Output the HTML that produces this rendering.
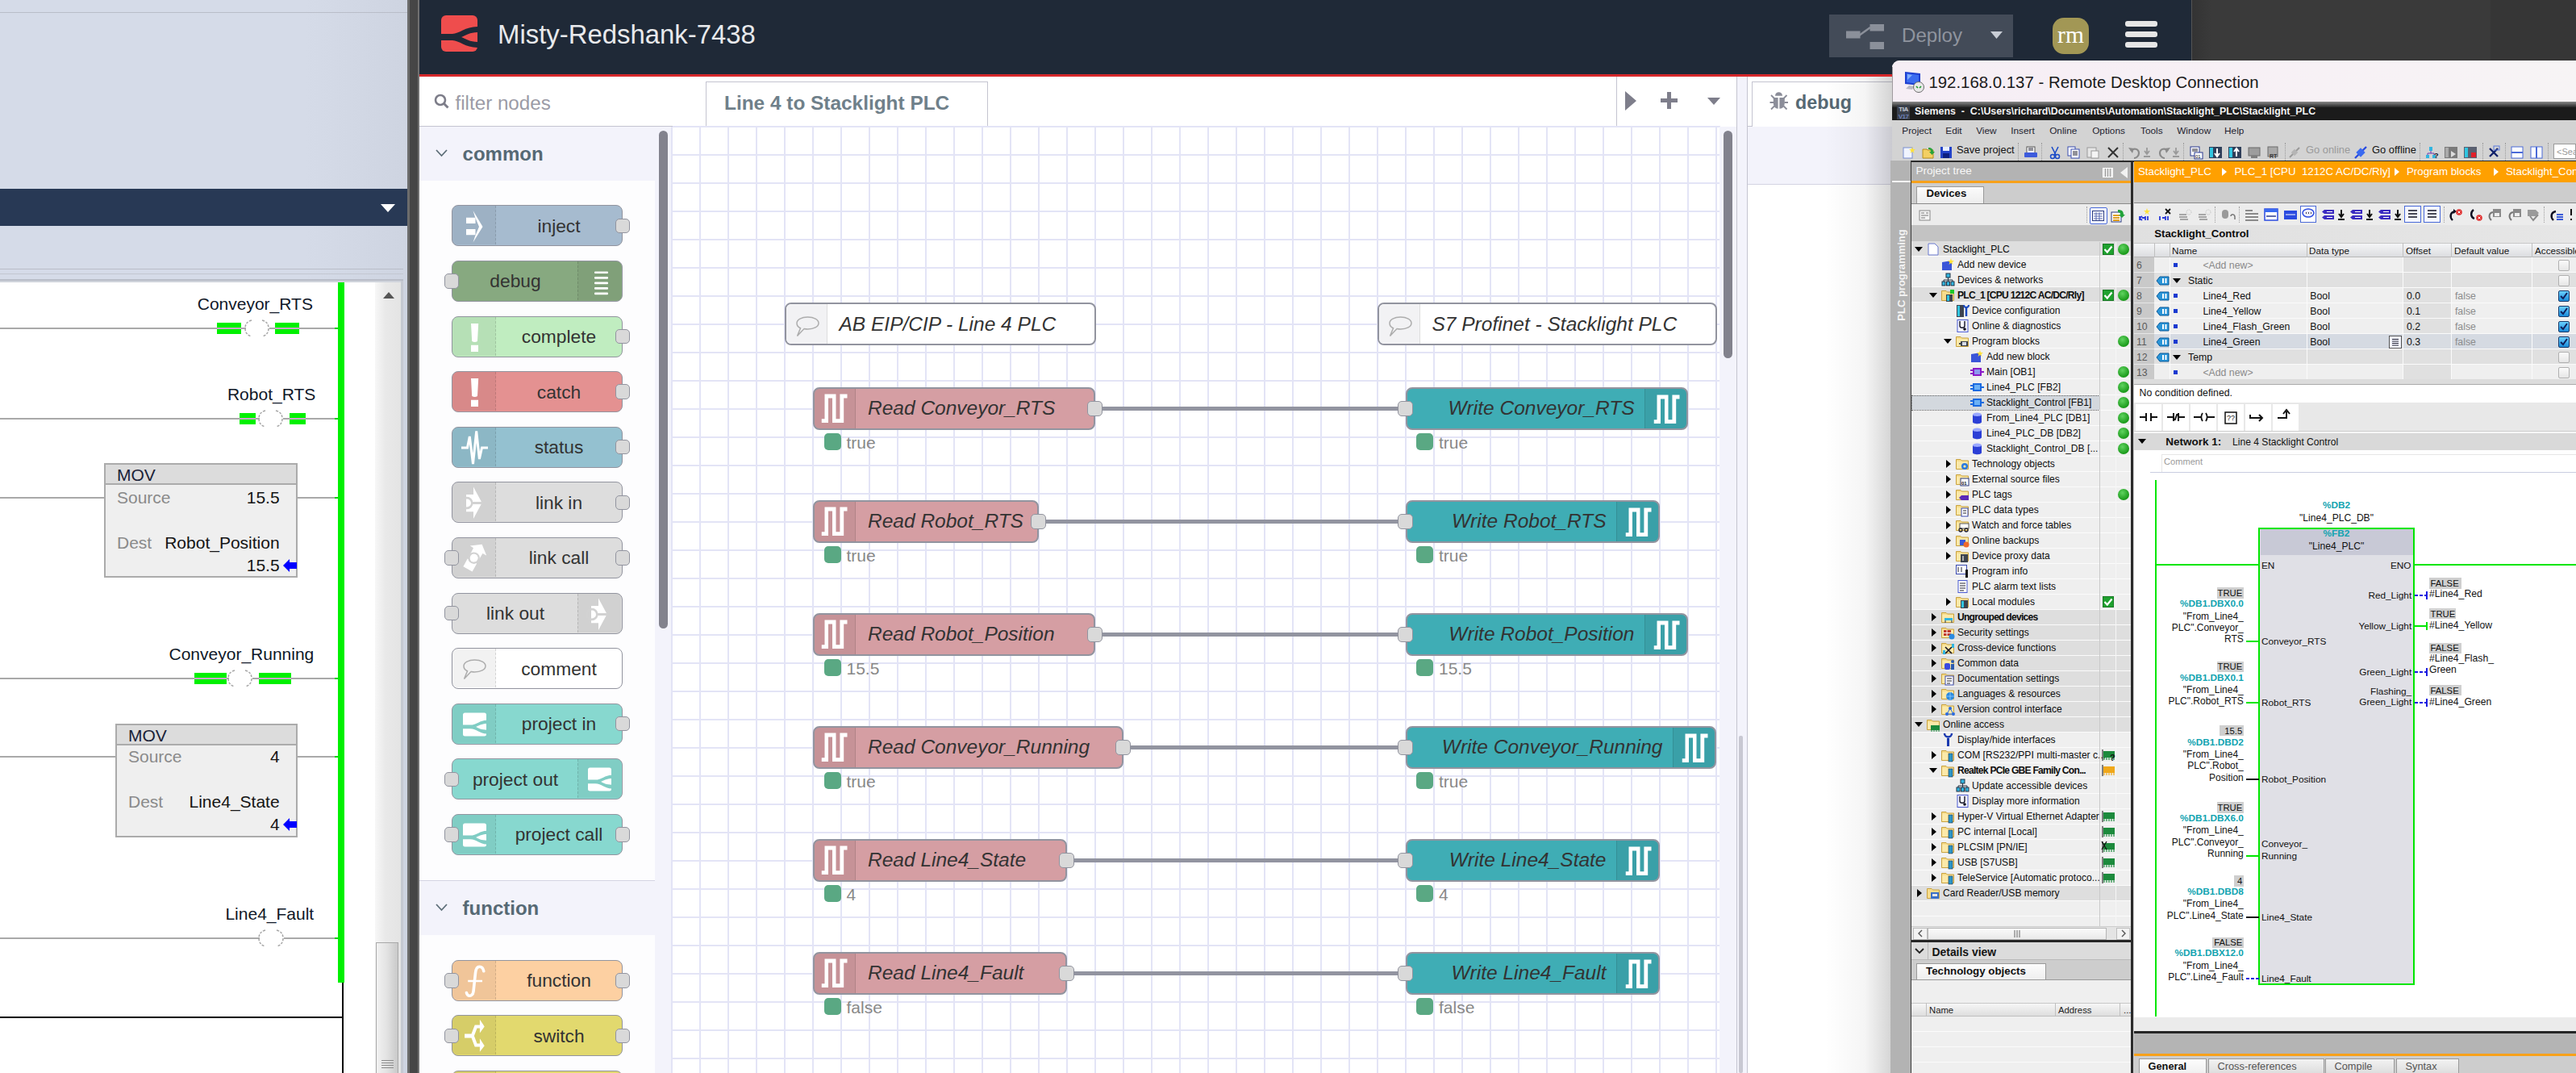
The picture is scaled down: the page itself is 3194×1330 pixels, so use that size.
<!DOCTYPE html>
<html><head><meta charset="utf-8"><title>screen</title>
<style>
*{box-sizing:border-box;margin:0;padding:0}
html,body{width:3194px;height:1330px;overflow:hidden;background:#3a3a3a;font-family:"Liberation Sans",sans-serif;position:relative}
.a{position:absolute}
.t{position:absolute;white-space:pre}
svg.a{overflow:visible}
</style></head><body>
<div class="a" style="left:0px;top:0px;width:505px;height:1330px;background:linear-gradient(90deg,#d5dbe8 0%,#d5dbe8 75%,#ced4e1 100%)"></div>
<div class="a" style="left:0px;top:15px;width:505px;height:1px;background:#b9bdc8"></div>
<div class="a" style="left:0px;top:234px;width:505px;height:46px;background:#283955"></div>
<svg class="a" style="left:471px;top:252px;" width="20" height="12" viewBox="0 0 20 12"><path d="M1 1 L19 1 L10 11 Z" fill="#fff"/></svg>
<div class="a" style="left:0px;top:333px;width:500px;height:1px;background:#b9bdc8"></div>
<div class="a" style="left:0px;top:339px;width:500px;height:1px;background:#c3c7d1"></div>
<div class="a" style="left:0px;top:346px;width:500px;height:2px;background:#b9bdc8"></div>
<div class="a" style="left:0px;top:348px;width:500px;height:2px;background:#d0d4dc"></div>
<div class="a" style="left:0px;top:350px;width:465px;height:980px;background:#fff"></div>
<div class="a" style="left:465px;top:350px;width:32px;height:980px;background:linear-gradient(90deg,#f7f7f7 0%,#e9e9e9 40%,#e4e4e4 100%)"></div>
<div class="a" style="left:497px;top:348px;width:3px;height:982px;background:#c5c9d2"></div>
<div class="a" style="left:505px;top:0px;width:15px;height:1330px;background:#464646"></div>
<div class="a" style="left:505px;top:0px;width:2.5px;height:1330px;background:#6c6c6c"></div>
<div class="a" style="left:517.5px;top:0px;width:2.5px;height:1330px;background:#707070"></div>
<svg class="a" style="left:474px;top:361px;" width="16" height="10" viewBox="0 0 16 10"><path d="M1 9 L15 9 L8 1 Z" fill="#555"/></svg>
<div class="a" style="left:466px;top:1168px;width:28px;height:162px;background:linear-gradient(90deg,#f2f2f2,#e2e2e2 50%,#c9c9c9);border:1px solid #a8a8a8;border-bottom:none"></div>
<div class="a" style="left:473px;top:1314px;width:15px;height:1px;background:#8a8a8a"></div>
<div class="a" style="left:473px;top:1317px;width:15px;height:1px;background:#8a8a8a"></div>
<div class="a" style="left:473px;top:1320px;width:15px;height:1px;background:#8a8a8a"></div>
<div class="a" style="left:473px;top:1323px;width:15px;height:1px;background:#8a8a8a"></div>
<div class="a" style="left:419px;top:350px;width:8px;height:868px;background:#00f000"></div>
<div class="a" style="left:424px;top:1218px;width:2px;height:112px;background:#000"></div>
<div class="a" style="left:0px;top:1260px;width:425px;height:2px;background:#000"></div>
<div class="a" style="left:0px;top:406px;width:419px;height:2px;background:#a9a9a9"></div>
<div class="a" style="left:415px;top:406px;width:4px;height:2px;background:#00d000"></div>
<div class="a" style="left:304.8px;top:405px;width:29.0px;height:4px;background:#fff"></div>
<div class="a" style="left:269px;top:400px;width:30px;height:14px;background:#00f000"></div>
<div class="a" style="left:269px;top:406px;width:30px;height:2px;background:#c8a8c8"></div>
<div class="a" style="left:341px;top:400px;width:30px;height:14px;background:#00f000"></div>
<div class="a" style="left:341px;top:406px;width:30px;height:2px;background:#c8a8c8"></div>
<svg class="a" style="left:301.8px;top:395px;" width="14" height="24" viewBox="0 0 14 24"><path d="M10 2 Q2 4 2 12 Q2 20 10 22" fill="none" stroke="#a6a6a6" stroke-width="1.5" stroke-dasharray="3 1.6"/></svg>
<svg class="a" style="left:322.8px;top:395px;" width="14" height="24" viewBox="0 0 14 24"><path d="M2 2 Q10 4 10 12 Q10 20 2 22" fill="none" stroke="#a6a6a6" stroke-width="1.5" stroke-dasharray="3 1.6"/></svg>
<div class="t" style="left:-683.7px;width:2000px;text-align:center;top:363.22px;font-size:21px;line-height:27px;font-family:'Liberation Sans',sans-serif;color:#101828">Conveyor_RTS</div>
<div class="a" style="left:0px;top:518px;width:419px;height:2px;background:#a9a9a9"></div>
<div class="a" style="left:415px;top:518px;width:4px;height:2px;background:#00d000"></div>
<div class="a" style="left:321.5px;top:517px;width:29.80000000000001px;height:4px;background:#fff"></div>
<div class="a" style="left:297px;top:512px;width:20px;height:14px;background:#00f000"></div>
<div class="a" style="left:297px;top:518px;width:20px;height:2px;background:#c8a8c8"></div>
<div class="a" style="left:359px;top:512px;width:20px;height:14px;background:#00f000"></div>
<div class="a" style="left:359px;top:518px;width:20px;height:2px;background:#c8a8c8"></div>
<svg class="a" style="left:318.5px;top:507px;" width="14" height="24" viewBox="0 0 14 24"><path d="M10 2 Q2 4 2 12 Q2 20 10 22" fill="none" stroke="#a6a6a6" stroke-width="1.5" stroke-dasharray="3 1.6"/></svg>
<svg class="a" style="left:340.3px;top:507px;" width="14" height="24" viewBox="0 0 14 24"><path d="M2 2 Q10 4 10 12 Q10 20 2 22" fill="none" stroke="#a6a6a6" stroke-width="1.5" stroke-dasharray="3 1.6"/></svg>
<div class="t" style="left:-663.4px;width:2000px;text-align:center;top:475.22px;font-size:21px;line-height:27px;font-family:'Liberation Sans',sans-serif;color:#101828">Robot_RTS</div>
<div class="a" style="left:0px;top:840px;width:419px;height:2px;background:#a9a9a9"></div>
<div class="a" style="left:415px;top:840px;width:4px;height:2px;background:#00d000"></div>
<div class="a" style="left:284px;top:839px;width:29.399999999999977px;height:4px;background:#fff"></div>
<div class="a" style="left:241px;top:834px;width:40px;height:14px;background:#00f000"></div>
<div class="a" style="left:241px;top:840px;width:40px;height:2px;background:#c8a8c8"></div>
<div class="a" style="left:321px;top:834px;width:40px;height:14px;background:#00f000"></div>
<div class="a" style="left:321px;top:840px;width:40px;height:2px;background:#c8a8c8"></div>
<svg class="a" style="left:281px;top:829px;" width="14" height="24" viewBox="0 0 14 24"><path d="M10 2 Q2 4 2 12 Q2 20 10 22" fill="none" stroke="#a6a6a6" stroke-width="1.5" stroke-dasharray="3 1.6"/></svg>
<svg class="a" style="left:302.4px;top:829px;" width="14" height="24" viewBox="0 0 14 24"><path d="M2 2 Q10 4 10 12 Q10 20 2 22" fill="none" stroke="#a6a6a6" stroke-width="1.5" stroke-dasharray="3 1.6"/></svg>
<div class="t" style="left:-700.6px;width:2000px;text-align:center;top:797.22px;font-size:21px;line-height:27px;font-family:'Liberation Sans',sans-serif;color:#101828">Conveyor_Running</div>
<div class="a" style="left:0px;top:1162px;width:419px;height:2px;background:#a9a9a9"></div>
<div class="a" style="left:415px;top:1162px;width:4px;height:2px;background:#00d000"></div>
<div class="a" style="left:322px;top:1161px;width:29.69999999999999px;height:4px;background:#fff"></div>
<svg class="a" style="left:319px;top:1151px;" width="14" height="24" viewBox="0 0 14 24"><path d="M10 2 Q2 4 2 12 Q2 20 10 22" fill="none" stroke="#a6a6a6" stroke-width="1.5" stroke-dasharray="3 1.6"/></svg>
<svg class="a" style="left:340.7px;top:1151px;" width="14" height="24" viewBox="0 0 14 24"><path d="M2 2 Q10 4 10 12 Q10 20 2 22" fill="none" stroke="#a6a6a6" stroke-width="1.5" stroke-dasharray="3 1.6"/></svg>
<div class="t" style="left:-665.7px;width:2000px;text-align:center;top:1119.22px;font-size:21px;line-height:27px;font-family:'Liberation Sans',sans-serif;color:#101828">Line4_Fault</div>
<div class="a" style="left:0px;top:616px;width:419px;height:2px;background:#a9a9a9"></div>
<div class="a" style="left:415px;top:616px;width:4px;height:2px;background:#00d000"></div>
<div class="a" style="left:129px;top:574px;width:240px;height:142px;background:#efefef;border:2px solid #ababab"></div>
<div class="a" style="left:131px;top:576px;width:236px;height:25px;background:#dcdcdc;border-bottom:2px solid #ababab"></div>
<div class="t" style="left:145px;top:574.72px;font-size:21px;line-height:27px;font-family:'Liberation Sans',sans-serif;color:#1a2238">MOV</div>
<div class="t" style="left:145px;top:602.92px;font-size:21px;line-height:27px;font-family:'Liberation Sans',sans-serif;color:#8a8a8a">Source</div>
<div class="t" style="left:-1653.4px;width:2000px;text-align:right;top:602.92px;font-size:21px;line-height:27px;font-family:'Liberation Sans',sans-serif;color:#141414">15.5</div>
<div class="t" style="left:145px;top:658.72px;font-size:21px;line-height:27px;font-family:'Liberation Sans',sans-serif;color:#8a8a8a">Dest</div>
<div class="t" style="left:-1653.4px;width:2000px;text-align:right;top:658.72px;font-size:21px;line-height:27px;font-family:'Liberation Sans',sans-serif;color:#141414">Robot_Position</div>
<div class="t" style="left:-1653.4px;width:2000px;text-align:right;top:686.82px;font-size:21px;line-height:27px;font-family:'Liberation Sans',sans-serif;color:#141414">15.5</div>
<svg class="a" style="left:351px;top:693px;" width="17" height="16" viewBox="0 0 17 16"><path d="M0 8 L8 0 L8 4 L17 4 L17 12 L8 12 L8 16 Z" fill="#0000ff"/></svg>
<div class="a" style="left:0px;top:937px;width:419px;height:2px;background:#a9a9a9"></div>
<div class="a" style="left:415px;top:937px;width:4px;height:2px;background:#00d000"></div>
<div class="a" style="left:143px;top:897px;width:226px;height:141px;background:#efefef;border:2px solid #ababab"></div>
<div class="a" style="left:145px;top:899px;width:222px;height:25px;background:#dcdcdc;border-bottom:2px solid #ababab"></div>
<div class="t" style="left:159px;top:897.72px;font-size:21px;line-height:27px;font-family:'Liberation Sans',sans-serif;color:#1a2238">MOV</div>
<div class="t" style="left:159px;top:923.92px;font-size:21px;line-height:27px;font-family:'Liberation Sans',sans-serif;color:#8a8a8a">Source</div>
<div class="t" style="left:-1653.4px;width:2000px;text-align:right;top:923.92px;font-size:21px;line-height:27px;font-family:'Liberation Sans',sans-serif;color:#141414">4</div>
<div class="t" style="left:159px;top:979.72px;font-size:21px;line-height:27px;font-family:'Liberation Sans',sans-serif;color:#8a8a8a">Dest</div>
<div class="t" style="left:-1653.4px;width:2000px;text-align:right;top:979.72px;font-size:21px;line-height:27px;font-family:'Liberation Sans',sans-serif;color:#141414">Line4_State</div>
<div class="t" style="left:-1653.4px;width:2000px;text-align:right;top:1007.82px;font-size:21px;line-height:27px;font-family:'Liberation Sans',sans-serif;color:#141414">4</div>
<svg class="a" style="left:351px;top:1014px;" width="17" height="16" viewBox="0 0 17 16"><path d="M0 8 L8 0 L8 4 L17 4 L17 12 L8 12 L8 16 Z" fill="#0000ff"/></svg>
<div class="a" style="left:520px;top:0px;width:2197px;height:92px;background:#1f2937"></div>
<div class="a" style="left:520px;top:92px;width:1826px;height:3px;background:#d6282b"></div>
<svg class="a" style="left:547px;top:19px;" width="45" height="45" viewBox="0 0 45 45"><rect width="45" height="45" rx="6" fill="#ef4d4d"/><path d="M0,23 L14,23 C22,23 30,14 45,14 L45,21 C36,21 30,25 25,27 C30,29 36,33 45,33 L45,40 C30,40 22,31 14,31 L0,31 Z" fill="#1f2937"/></svg>
<div class="t" style="left:617px;top:21.10px;font-size:32.9px;line-height:43px;font-family:'Liberation Sans',sans-serif;color:#e8e9ec">Misty-Redshank-7438</div>
<div class="a" style="left:2268px;top:18px;width:228px;height:53px;background:#434b58"></div>
<svg class="a" style="left:2289px;top:30px;" width="48" height="31" viewBox="0 0 48 31"><g fill="#8b909a"><rect x="0" y="8.5" width="17.5" height="9"/><rect x="29.5" y="0" width="17.5" height="8.5"/><rect x="29.5" y="22" width="17.5" height="9"/><path d="M16 14 L30 4" stroke="#8b909a" stroke-width="2.5"/></g></svg>
<div class="t" style="left:2358px;top:28.15px;font-size:24.1px;line-height:31px;font-family:'Liberation Sans',sans-serif;color:#8f949e">Deploy</div>
<svg class="a" style="left:2468px;top:39px;" width="15" height="9" viewBox="0 0 15 9"><path d="M0 0 H15 L7.5 9 Z" fill="#c9cdd5"/></svg>
<div class="a" style="left:2545px;top:22px;width:45px;height:45px;background:#a29755;border-radius:14px"></div>
<div class="t" style="left:1567.5px;width:2000px;text-align:center;top:24.04px;font-size:29.5px;line-height:38px;font-family:'Liberation Serif',serif;color:#fff">rm</div>
<div class="a" style="left:2634.5px;top:26px;width:40px;height:7px;background:#e6e6e6;border-radius:3px"></div>
<div class="a" style="left:2634.5px;top:39px;width:40px;height:7px;background:#e6e6e6;border-radius:3px"></div>
<div class="a" style="left:2634.5px;top:52px;width:40px;height:7px;background:#e6e6e6;border-radius:3px"></div>
<div class="a" style="left:2717px;top:0px;width:477px;height:75px;background:linear-gradient(90deg,#333 0px,#3a3a3a 25px,#3a3a3a 370px,#363636 372px)"></div>
<div class="a" style="left:2717px;top:0px;width:1px;height:75px;background:#555"></div>
<div class="a" style="left:520px;top:95px;width:1826px;height:62px;background:#fff"></div>
<div class="a" style="left:520px;top:156px;width:1613px;height:1px;background:#c4c4d0"></div>
<svg class="a" style="left:538px;top:116px;" width="20" height="20" viewBox="0 0 20 20"><circle cx="8" cy="8" r="6" fill="none" stroke="#7d7d89" stroke-width="2.6"/><path d="M12.3 12.3 L17.5 17.5" stroke="#7d7d89" stroke-width="3"/></svg>
<div class="t" style="left:564.5px;top:111.51px;font-size:24.2px;line-height:31px;font-family:'Liberation Sans',sans-serif;color:#9b9ba6">filter nodes</div>
<div class="a" style="left:875px;top:101px;width:350px;height:56px;background:#fff;border:1px solid #c4c4d0;border-bottom:none"></div>
<div class="t" style="left:898px;top:111.55px;font-size:24.4px;line-height:32px;font-family:'Liberation Sans',sans-serif;color:#6f808a;font-weight:bold">Line 4 to Stacklight PLC</div>
<div class="a" style="left:2004px;top:95px;width:1px;height:62px;background:#c4c4d0"></div>
<svg class="a" style="left:2015px;top:113px;" width="15" height="24" viewBox="0 0 15 24"><path d="M0 0 L14 12 L0 24 Z" fill="#7e7e8b"/></svg>
<svg class="a" style="left:2059px;top:114px;" width="21" height="21" viewBox="0 0 21 21"><path d="M8 0 H13 V8 H21 V13 H13 V21 H8 V13 H0 V8 H8 Z" fill="#7e7e8b"/></svg>
<svg class="a" style="left:2117px;top:121px;" width="16" height="9" viewBox="0 0 16 9"><path d="M0 0 H16 L8 9 Z" fill="#7e7e8b"/></svg>
<div class="a" style="left:520px;top:157px;width:292px;height:67px;background:#f3f3fb"></div>
<div class="a" style="left:520px;top:224px;width:292px;height:867px;background:#fdfdfe"></div>
<div class="a" style="left:520px;top:1091px;width:292px;height:1px;background:#d4d4e2"></div>
<div class="a" style="left:520px;top:1092px;width:292px;height:67px;background:#f3f3fb"></div>
<div class="a" style="left:520px;top:1159px;width:292px;height:171px;background:#fdfdfe"></div>
<div class="a" style="left:812px;top:157px;width:21px;height:1173px;background:#f3f3fb"></div>
<div class="a" style="left:817px;top:162px;width:11px;height:617px;background:#82828d;border-radius:6px"></div>
<div class="a" style="left:833px;top:157px;width:1px;height:1173px;background:#c4c4d0"></div>
<svg class="a" style="left:540px;top:185px;" width="15" height="10" viewBox="0 0 15 10"><path d="M1 1 L7.5 8 L14 1" fill="none" stroke="#5d6e78" stroke-width="1.8"/></svg>
<div class="t" style="left:573.6px;top:174.58px;font-size:24px;line-height:31px;font-family:'Liberation Sans',sans-serif;color:#566974;font-weight:bold">common</div>
<svg class="a" style="left:540px;top:1120px;" width="15" height="10" viewBox="0 0 15 10"><path d="M1 1 L7.5 8 L14 1" fill="none" stroke="#5d6e78" stroke-width="1.8"/></svg>
<div class="t" style="left:573.6px;top:1109.78px;font-size:24px;line-height:31px;font-family:'Liberation Sans',sans-serif;color:#566974;font-weight:bold">function</div>
<div class="a" style="left:560px;top:254.3px;width:212px;height:51px;background:#a6bbcf;border:1.5px solid #92949f;border-radius:8px;overflow:hidden"><div class="a" style="left:0;top:0;width:54px;height:48px;background:rgba(0,0,0,0.05);border-right:1px dashed rgba(0,0,0,0.12)"></div><svg class="a" style="left:0;top:-2px" width="54" height="51" viewBox="0 0 54 51"><path d="M17 16.8 H28.5 V24 H17 Z M17 31 H28.5 V38.2 H17 Z" fill="#fff"/><path d="M25.5 8 L37.5 28 L25.5 47.5 L28 40 L33 28 L28 16 Z" fill="#fff"/></svg></div>
<div class="t" style="left:-307.0px;width:2000px;text-align:center;top:264.72px;font-size:22.75px;line-height:30px;font-family:'Liberation Sans',sans-serif;color:#333">inject</div>
<div class="a" style="left:762.75px;top:270.55px;width:18.5px;height:18.5px;background:#d9d9d9;border:1.5px solid #92949f;border-radius:5px"></div>
<div class="a" style="left:560px;top:322.9px;width:212px;height:51px;background:#87a980;border:1.5px solid #92949f;border-radius:8px;overflow:hidden"><div class="a" style="left:155px;top:0;width:54px;height:48px;background:rgba(0,0,0,0.05);border-left:1px dashed rgba(0,0,0,0.12)"></div><svg class="a" style="left:155px;top:-2px" width="54" height="51" viewBox="0 0 54 51"><rect x="21" y="14.40" width="17" height="2.7" rx="1" fill="#fff"/><rect x="21" y="20.95" width="17" height="2.7" rx="1" fill="#fff"/><rect x="21" y="27.50" width="17" height="2.7" rx="1" fill="#fff"/><rect x="21" y="34.05" width="17" height="2.7" rx="1" fill="#fff"/><rect x="21" y="40.60" width="17" height="2.7" rx="1" fill="#fff"/></svg></div>
<div class="t" style="left:-361.0px;width:2000px;text-align:center;top:333.32px;font-size:22.75px;line-height:30px;font-family:'Liberation Sans',sans-serif;color:#333">debug</div>
<div class="a" style="left:550.75px;top:339.15px;width:18.5px;height:18.5px;background:#d9d9d9;border:1.5px solid #92949f;border-radius:5px"></div>
<div class="a" style="left:560px;top:391.5px;width:212px;height:51px;background:#c0edc0;border:1.5px solid #92949f;border-radius:8px;overflow:hidden"><div class="a" style="left:0;top:0;width:54px;height:48px;background:rgba(0,0,0,0.05);border-right:1px dashed rgba(0,0,0,0.12)"></div><svg class="a" style="left:0;top:-2px" width="54" height="51" viewBox="0 0 54 51"><path d="M23 10 H32.2 L31 32 Q27.6 34 24.2 32 Z M23 36.8 H32 V45 H23 Z" fill="#fff"/></svg></div>
<div class="t" style="left:-307.0px;width:2000px;text-align:center;top:401.92px;font-size:22.75px;line-height:30px;font-family:'Liberation Sans',sans-serif;color:#333">complete</div>
<div class="a" style="left:762.75px;top:407.75px;width:18.5px;height:18.5px;background:#d9d9d9;border:1.5px solid #92949f;border-radius:5px"></div>
<div class="a" style="left:560px;top:460.1px;width:212px;height:51px;background:#e49191;border:1.5px solid #92949f;border-radius:8px;overflow:hidden"><div class="a" style="left:0;top:0;width:54px;height:48px;background:rgba(0,0,0,0.05);border-right:1px dashed rgba(0,0,0,0.12)"></div><svg class="a" style="left:0;top:-2px" width="54" height="51" viewBox="0 0 54 51"><path d="M23 10 H32.2 L31 32 Q27.6 34 24.2 32 Z M23 36.8 H32 V45 H23 Z" fill="#fff"/></svg></div>
<div class="t" style="left:-307.0px;width:2000px;text-align:center;top:470.52px;font-size:22.75px;line-height:30px;font-family:'Liberation Sans',sans-serif;color:#333">catch</div>
<div class="a" style="left:762.75px;top:476.35px;width:18.5px;height:18.5px;background:#d9d9d9;border:1.5px solid #92949f;border-radius:5px"></div>
<div class="a" style="left:560px;top:528.7px;width:212px;height:51px;background:#94c1d0;border:1.5px solid #92949f;border-radius:8px;overflow:hidden"><div class="a" style="left:0;top:0;width:54px;height:48px;background:rgba(0,0,0,0.05);border-right:1px dashed rgba(0,0,0,0.12)"></div><svg class="a" style="left:0;top:-2px" width="54" height="51" viewBox="0 0 54 51"><path d="M11 27 H18.5 L21.3 13 L25.5 47 L29.7 6.5 L33.4 41 L36.5 27 H44" fill="none" stroke="#fff" stroke-width="3" stroke-linejoin="miter" stroke-miterlimit="3"/></svg></div>
<div class="t" style="left:-307.0px;width:2000px;text-align:center;top:539.12px;font-size:22.75px;line-height:30px;font-family:'Liberation Sans',sans-serif;color:#333">status</div>
<div class="a" style="left:762.75px;top:544.95px;width:18.5px;height:18.5px;background:#d9d9d9;border:1.5px solid #92949f;border-radius:5px"></div>
<div class="a" style="left:560px;top:597.3px;width:212px;height:51px;background:#dddddd;border:1.5px solid #92949f;border-radius:8px;overflow:hidden"><div class="a" style="left:0;top:0;width:54px;height:48px;background:rgba(0,0,0,0.05);border-right:1px dashed rgba(0,0,0,0.12)"></div><svg class="a" style="left:0;top:-2px" width="54" height="51" viewBox="0 0 54 51"><path d="M17 16.9 H26 V7.4 L36.6 27.2 L26 47.1 V38.2 H17 Z" fill="#fff"/><circle cx="17.9" cy="27.5" r="6.4" fill="none" stroke="#d2d2d2" stroke-width="2.6"/><path d="M23 27.5 H38" stroke="#d2d2d2" stroke-width="2.8"/></svg></div>
<div class="t" style="left:-307.0px;width:2000px;text-align:center;top:607.72px;font-size:22.75px;line-height:30px;font-family:'Liberation Sans',sans-serif;color:#333">link in</div>
<div class="a" style="left:762.75px;top:613.55px;width:18.5px;height:18.5px;background:#d9d9d9;border:1.5px solid #92949f;border-radius:5px"></div>
<div class="a" style="left:560px;top:665.9px;width:212px;height:51px;background:#dddddd;border:1.5px solid #92949f;border-radius:8px;overflow:hidden"><div class="a" style="left:0;top:0;width:54px;height:48px;background:rgba(0,0,0,0.05);border-right:1px dashed rgba(0,0,0,0.12)"></div><svg class="a" style="left:0;top:-2px" width="54" height="51" viewBox="0 0 54 51"><path d="M21.8 11.4 L36.6 9.7 L42.2 23.4 L37.4 20.9 L33 28.5 L22 22 L26 14.2 Z" fill="#fff"/><path d="M13.4 37.2 L18.7 27.4 L30.2 33.5 L24.6 43.6 Z" fill="#fff"/><circle cx="26.6" cy="26.7" r="6.1" fill="none" stroke="#d2d2d2" stroke-width="2.4"/><circle cx="26.6" cy="26.7" r="4.9" fill="#fff"/></svg></div>
<div class="t" style="left:-307.0px;width:2000px;text-align:center;top:676.32px;font-size:22.75px;line-height:30px;font-family:'Liberation Sans',sans-serif;color:#333">link call</div>
<div class="a" style="left:550.75px;top:682.15px;width:18.5px;height:18.5px;background:#d9d9d9;border:1.5px solid #92949f;border-radius:5px"></div>
<div class="a" style="left:762.75px;top:682.15px;width:18.5px;height:18.5px;background:#d9d9d9;border:1.5px solid #92949f;border-radius:5px"></div>
<div class="a" style="left:560px;top:734.5px;width:212px;height:51px;background:#dddddd;border:1.5px solid #92949f;border-radius:8px;overflow:hidden"><div class="a" style="left:155px;top:0;width:54px;height:48px;background:rgba(0,0,0,0.05);border-left:1px dashed rgba(0,0,0,0.12)"></div><svg class="a" style="left:155px;top:-2px" width="54" height="51" viewBox="0 0 54 51"><path d="M17 16.9 H26 V7.4 L36.6 27.2 L26 47.1 V38.2 H17 Z" fill="#fff"/><circle cx="17.9" cy="27.5" r="6.4" fill="none" stroke="#d2d2d2" stroke-width="2.6"/><path d="M23 27.5 H38" stroke="#d2d2d2" stroke-width="2.8"/></svg></div>
<div class="t" style="left:-361.0px;width:2000px;text-align:center;top:744.92px;font-size:22.75px;line-height:30px;font-family:'Liberation Sans',sans-serif;color:#333">link out</div>
<div class="a" style="left:550.75px;top:750.75px;width:18.5px;height:18.5px;background:#d9d9d9;border:1.5px solid #92949f;border-radius:5px"></div>
<div class="a" style="left:560px;top:803.0999999999999px;width:212px;height:51px;background:#ffffff;border:1.5px solid #92949f;border-radius:8px;overflow:hidden"><div class="a" style="left:0;top:0;width:54px;height:48px;background:rgba(0,0,0,0.05);border-right:1px dashed rgba(0,0,0,0.12)"></div><svg class="a" style="left:0;top:-2px" width="54" height="51" viewBox="0 0 54 51"><path d="M27.5 16 C35 16 41 19 41 23.5 C41 28 35 31 27.5 31 C26 31 24.5 30.8 23 30.5 L14.5 39.5 L18.5 29.8 C15.5 28.5 14 26 14 23.5 C14 19 20 16 27.5 16 Z" fill="none" stroke="#adadad" stroke-width="1.5"/></svg></div>
<div class="t" style="left:-307.0px;width:2000px;text-align:center;top:813.52px;font-size:22.75px;line-height:30px;font-family:'Liberation Sans',sans-serif;color:#333">comment</div>
<div class="a" style="left:560px;top:871.7px;width:212px;height:51px;background:#87d8cf;border:1.5px solid #92949f;border-radius:8px;overflow:hidden"><div class="a" style="left:0;top:0;width:54px;height:48px;background:rgba(0,0,0,0.05);border-right:1px dashed rgba(0,0,0,0.12)"></div><svg class="a" style="left:0;top:-2px" width="54" height="51" viewBox="0 0 54 51"><rect x="13" y="12.6" width="29" height="29" rx="2.5" fill="#fff"/><path d="M12.5,27.6 H22 C30,27.6 34,21.7 42.5,21.7 V25.9 C36,25.9 32,28.5 29,30.1 C32,31.7 36,33.7 42.5,33.7 V38.5 C34,38.5 30,32.2 22,32.2 H12.5 Z" fill="#80cdc4"/></svg></div>
<div class="t" style="left:-307.0px;width:2000px;text-align:center;top:882.12px;font-size:22.75px;line-height:30px;font-family:'Liberation Sans',sans-serif;color:#333">project in</div>
<div class="a" style="left:762.75px;top:887.95px;width:18.5px;height:18.5px;background:#d9d9d9;border:1.5px solid #92949f;border-radius:5px"></div>
<div class="a" style="left:560px;top:940.3px;width:212px;height:51px;background:#87d8cf;border:1.5px solid #92949f;border-radius:8px;overflow:hidden"><div class="a" style="left:155px;top:0;width:54px;height:48px;background:rgba(0,0,0,0.05);border-left:1px dashed rgba(0,0,0,0.12)"></div><svg class="a" style="left:155px;top:-2px" width="54" height="51" viewBox="0 0 54 51"><rect x="13" y="12.6" width="29" height="29" rx="2.5" fill="#fff"/><path d="M12.5,27.6 H22 C30,27.6 34,21.7 42.5,21.7 V25.9 C36,25.9 32,28.5 29,30.1 C32,31.7 36,33.7 42.5,33.7 V38.5 C34,38.5 30,32.2 22,32.2 H12.5 Z" fill="#80cdc4"/></svg></div>
<div class="t" style="left:-361.0px;width:2000px;text-align:center;top:950.72px;font-size:22.75px;line-height:30px;font-family:'Liberation Sans',sans-serif;color:#333">project out</div>
<div class="a" style="left:550.75px;top:956.55px;width:18.5px;height:18.5px;background:#d9d9d9;border:1.5px solid #92949f;border-radius:5px"></div>
<div class="a" style="left:560px;top:1008.8999999999999px;width:212px;height:51px;background:#87d8cf;border:1.5px solid #92949f;border-radius:8px;overflow:hidden"><div class="a" style="left:0;top:0;width:54px;height:48px;background:rgba(0,0,0,0.05);border-right:1px dashed rgba(0,0,0,0.12)"></div><svg class="a" style="left:0;top:-2px" width="54" height="51" viewBox="0 0 54 51"><rect x="13" y="12.6" width="29" height="29" rx="2.5" fill="#fff"/><path d="M12.5,27.6 H22 C30,27.6 34,21.7 42.5,21.7 V25.9 C36,25.9 32,28.5 29,30.1 C32,31.7 36,33.7 42.5,33.7 V38.5 C34,38.5 30,32.2 22,32.2 H12.5 Z" fill="#80cdc4"/></svg></div>
<div class="t" style="left:-307.0px;width:2000px;text-align:center;top:1019.32px;font-size:22.75px;line-height:30px;font-family:'Liberation Sans',sans-serif;color:#333">project call</div>
<div class="a" style="left:550.75px;top:1025.1499999999999px;width:18.5px;height:18.5px;background:#d9d9d9;border:1.5px solid #92949f;border-radius:5px"></div>
<div class="a" style="left:762.75px;top:1025.1499999999999px;width:18.5px;height:18.5px;background:#d9d9d9;border:1.5px solid #92949f;border-radius:5px"></div>
<div class="a" style="left:560px;top:1189.8px;width:212px;height:51px;background:#fdd0a2;border:1.5px solid #92949f;border-radius:8px;overflow:hidden"><div class="a" style="left:0;top:0;width:54px;height:48px;background:rgba(0,0,0,0.05);border-right:1px dashed rgba(0,0,0,0.12)"></div><svg class="a" style="left:0;top:-2px" width="54" height="51" viewBox="0 0 54 51"><path d="M38.8 14.8 C38 10.5 35.5 9.2 33.5 9.2 C30.2 9.2 29 12 28.5 17 L26 40 C25.5 44.5 22.5 45.5 20.5 45.2 C18.8 45 18 43.5 17.4 41.5" fill="none" stroke="#fff" stroke-width="3.6" stroke-linecap="round"/><path d="M19.2 27 H37" stroke="#fff" stroke-width="2.4"/></svg></div>
<div class="t" style="left:-307.0px;width:2000px;text-align:center;top:1200.22px;font-size:22.75px;line-height:30px;font-family:'Liberation Sans',sans-serif;color:#333">function</div>
<div class="a" style="left:550.75px;top:1206.05px;width:18.5px;height:18.5px;background:#d9d9d9;border:1.5px solid #92949f;border-radius:5px"></div>
<div class="a" style="left:762.75px;top:1206.05px;width:18.5px;height:18.5px;background:#d9d9d9;border:1.5px solid #92949f;border-radius:5px"></div>
<div class="a" style="left:560px;top:1258.4px;width:212px;height:51px;background:#e2d96e;border:1.5px solid #92949f;border-radius:8px;overflow:hidden"><div class="a" style="left:0;top:0;width:54px;height:48px;background:rgba(0,0,0,0.05);border-right:1px dashed rgba(0,0,0,0.12)"></div><svg class="a" style="left:0;top:-2px" width="54" height="51" viewBox="0 0 54 51"><path d="M15.1 24.6 H23.5 L27.7 13.4 H33.9 V6.7 L39.7 15.4 L33.9 23.5 V17.4 H30.5 L26.9 27.1 L30.5 36.6 H33.9 V30.2 L39.7 39.2 L33.9 46.7 V40.6 H27.7 L23.5 29.4 H15.1 Z" fill="#fff"/></svg></div>
<div class="t" style="left:-307.0px;width:2000px;text-align:center;top:1268.82px;font-size:22.75px;line-height:30px;font-family:'Liberation Sans',sans-serif;color:#333">switch</div>
<div class="a" style="left:550.75px;top:1274.65px;width:18.5px;height:18.5px;background:#d9d9d9;border:1.5px solid #92949f;border-radius:5px"></div>
<div class="a" style="left:762.75px;top:1274.65px;width:18.5px;height:18.5px;background:#d9d9d9;border:1.5px solid #92949f;border-radius:5px"></div>
<div class="a" style="left:560px;top:1327px;width:212px;height:51px;background:#e2d96e;border:1.5px solid #92949f;border-radius:8px;overflow:hidden"><div class="a" style="left:0;top:0;width:54px;height:48px;background:rgba(0,0,0,0.05);border-right:1px dashed rgba(0,0,0,0.12)"></div><svg class="a" style="left:0;top:-2px" width="54" height="51" viewBox="0 0 54 51"></svg></div>
<div class="t" style="left:-307.0px;width:2000px;text-align:center;top:1337.42px;font-size:22.75px;line-height:30px;font-family:'Liberation Sans',sans-serif;color:#333">change</div>
<div class="a" style="left:550.75px;top:1343.25px;width:18.5px;height:18.5px;background:#d9d9d9;border:1.5px solid #92949f;border-radius:5px"></div>
<div class="a" style="left:762.75px;top:1343.25px;width:18.5px;height:18.5px;background:#d9d9d9;border:1.5px solid #92949f;border-radius:5px"></div>
<svg class="a" style="left:834px;top:157px;background:#fff" width="1298" height="1173" viewBox="0 0 1298 1173"><rect x="-2" y="0" width="2" height="1173" fill="#e3e4f6"/><rect x="33" y="0" width="2" height="1173" fill="#e3e4f6"/><rect x="68" y="0" width="2" height="1173" fill="#e3e4f6"/><rect x="103" y="0" width="2" height="1173" fill="#e3e4f6"/><rect x="138" y="0" width="2" height="1173" fill="#e3e4f6"/><rect x="173" y="0" width="2" height="1173" fill="#e3e4f6"/><rect x="208" y="0" width="2" height="1173" fill="#e3e4f6"/><rect x="243" y="0" width="2" height="1173" fill="#e3e4f6"/><rect x="278" y="0" width="2" height="1173" fill="#e3e4f6"/><rect x="313" y="0" width="2" height="1173" fill="#e3e4f6"/><rect x="348" y="0" width="2" height="1173" fill="#e3e4f6"/><rect x="383" y="0" width="2" height="1173" fill="#e3e4f6"/><rect x="418" y="0" width="2" height="1173" fill="#e3e4f6"/><rect x="453" y="0" width="2" height="1173" fill="#e3e4f6"/><rect x="488" y="0" width="2" height="1173" fill="#e3e4f6"/><rect x="523" y="0" width="2" height="1173" fill="#e3e4f6"/><rect x="558" y="0" width="2" height="1173" fill="#e3e4f6"/><rect x="593" y="0" width="2" height="1173" fill="#e3e4f6"/><rect x="628" y="0" width="2" height="1173" fill="#e3e4f6"/><rect x="663" y="0" width="2" height="1173" fill="#e3e4f6"/><rect x="698" y="0" width="2" height="1173" fill="#e3e4f6"/><rect x="733" y="0" width="2" height="1173" fill="#e3e4f6"/><rect x="768" y="0" width="2" height="1173" fill="#e3e4f6"/><rect x="803" y="0" width="2" height="1173" fill="#e3e4f6"/><rect x="838" y="0" width="2" height="1173" fill="#e3e4f6"/><rect x="873" y="0" width="2" height="1173" fill="#e3e4f6"/><rect x="908" y="0" width="2" height="1173" fill="#e3e4f6"/><rect x="943" y="0" width="2" height="1173" fill="#e3e4f6"/><rect x="978" y="0" width="2" height="1173" fill="#e3e4f6"/><rect x="1013" y="0" width="2" height="1173" fill="#e3e4f6"/><rect x="1048" y="0" width="2" height="1173" fill="#e3e4f6"/><rect x="1083" y="0" width="2" height="1173" fill="#e3e4f6"/><rect x="1118" y="0" width="2" height="1173" fill="#e3e4f6"/><rect x="1153" y="0" width="2" height="1173" fill="#e3e4f6"/><rect x="1188" y="0" width="2" height="1173" fill="#e3e4f6"/><rect x="1223" y="0" width="2" height="1173" fill="#e3e4f6"/><rect x="1258" y="0" width="2" height="1173" fill="#e3e4f6"/><rect x="1293" y="0" width="2" height="1173" fill="#e3e4f6"/><rect x="0" y="-1" width="1299" height="2" fill="#e3e4f6"/><rect x="0" y="34" width="1299" height="2" fill="#e3e4f6"/><rect x="0" y="69" width="1299" height="2" fill="#e3e4f6"/><rect x="0" y="104" width="1299" height="2" fill="#e3e4f6"/><rect x="0" y="139" width="1299" height="2" fill="#e3e4f6"/><rect x="0" y="174" width="1299" height="2" fill="#e3e4f6"/><rect x="0" y="209" width="1299" height="2" fill="#e3e4f6"/><rect x="0" y="244" width="1299" height="2" fill="#e3e4f6"/><rect x="0" y="279" width="1299" height="2" fill="#e3e4f6"/><rect x="0" y="314" width="1299" height="2" fill="#e3e4f6"/><rect x="0" y="349" width="1299" height="2" fill="#e3e4f6"/><rect x="0" y="384" width="1299" height="2" fill="#e3e4f6"/><rect x="0" y="419" width="1299" height="2" fill="#e3e4f6"/><rect x="0" y="454" width="1299" height="2" fill="#e3e4f6"/><rect x="0" y="489" width="1299" height="2" fill="#e3e4f6"/><rect x="0" y="524" width="1299" height="2" fill="#e3e4f6"/><rect x="0" y="559" width="1299" height="2" fill="#e3e4f6"/><rect x="0" y="594" width="1299" height="2" fill="#e3e4f6"/><rect x="0" y="629" width="1299" height="2" fill="#e3e4f6"/><rect x="0" y="664" width="1299" height="2" fill="#e3e4f6"/><rect x="0" y="699" width="1299" height="2" fill="#e3e4f6"/><rect x="0" y="734" width="1299" height="2" fill="#e3e4f6"/><rect x="0" y="769" width="1299" height="2" fill="#e3e4f6"/><rect x="0" y="804" width="1299" height="2" fill="#e3e4f6"/><rect x="0" y="839" width="1299" height="2" fill="#e3e4f6"/><rect x="0" y="874" width="1299" height="2" fill="#e3e4f6"/><rect x="0" y="909" width="1299" height="2" fill="#e3e4f6"/><rect x="0" y="944" width="1299" height="2" fill="#e3e4f6"/><rect x="0" y="979" width="1299" height="2" fill="#e3e4f6"/><rect x="0" y="1014" width="1299" height="2" fill="#e3e4f6"/><rect x="0" y="1049" width="1299" height="2" fill="#e3e4f6"/><rect x="0" y="1084" width="1299" height="2" fill="#e3e4f6"/><rect x="0" y="1119" width="1299" height="2" fill="#e3e4f6"/><rect x="0" y="1154" width="1299" height="2" fill="#e3e4f6"/></svg>
<div class="a" style="left:2132px;top:157px;width:21px;height:1173px;background:#f3f3fb"></div>
<div class="a" style="left:2137px;top:162px;width:11px;height:282px;background:#82828d;border-radius:6px"></div>
<div class="a" style="left:2153px;top:95px;width:1px;height:1235px;background:#c4c4d0"></div>
<div class="a" style="left:2154px;top:95px;width:12px;height:1235px;background:#f3f3fb"></div>
<div class="a" style="left:2166px;top:95px;width:1px;height:1235px;background:#c4c4d0"></div>
<div class="a" style="left:2156px;top:912px;width:5px;height:418px;background:#c8c8d2;border-radius:2px"></div>
<div class="a" style="left:972.5px;top:374.8px;width:386px;height:53px;background:#fff;border:2px solid #92949f;border-radius:8px;overflow:hidden"><div class="a" style="left:0;top:0;width:51px;height:53px;background:#f2f2f4;border-right:1px solid #ddd"></div><svg class="a" style="left:-1px;top:0" width="53" height="51" viewBox="0 0 53 51"><path d="M27.5 16 C35 16 41 19 41 23.5 C41 28 35 31 27.5 31 C26 31 24.5 30.8 23 30.5 L14.5 39.5 L18.5 29.8 C15.5 28.5 14 26 14 23.5 C14 19 20 16 27.5 16 Z" fill="none" stroke="#adadad" stroke-width="1.5"/></svg></div>
<div class="t" style="left:1040.5px;top:385.81px;font-size:24.5px;line-height:32px;font-family:'Liberation Sans',sans-serif;color:#333;font-style:italic">AB EIP/CIP - Line 4 PLC</div>
<div class="a" style="left:1707.5px;top:374.8px;width:421px;height:53px;background:#fff;border:2px solid #92949f;border-radius:8px;overflow:hidden"><div class="a" style="left:0;top:0;width:51px;height:53px;background:#f2f2f4;border-right:1px solid #ddd"></div><svg class="a" style="left:-1px;top:0" width="53" height="51" viewBox="0 0 53 51"><path d="M27.5 16 C35 16 41 19 41 23.5 C41 28 35 31 27.5 31 C26 31 24.5 30.8 23 30.5 L14.5 39.5 L18.5 29.8 C15.5 28.5 14 26 14 23.5 C14 19 20 16 27.5 16 Z" fill="none" stroke="#adadad" stroke-width="1.5"/></svg></div>
<div class="t" style="left:1775.5px;top:385.81px;font-size:24.5px;line-height:32px;font-family:'Liberation Sans',sans-serif;color:#333;font-style:italic">S7 Profinet - Stacklight PLC</div>
<div class="a" style="left:1357.5px;top:503.8px;width:385.0px;height:5px;background:#9294a0"></div>
<div class="a" style="left:1007.5px;top:479.8px;width:350px;height:53px;background:#d59ea3;border:2px solid #92949f;border-radius:8px;overflow:hidden"><div class="a" style="left:0;top:0;width:51.5px;height:53px;background:rgba(0,0,0,0.07);border-right:1.5px solid rgba(0,0,0,0.1)"></div><svg class="a" style="left:-1.5px;top:-1.5px" width="53" height="53" viewBox="0 0 53 53"><path d="M10.75,44.1 L19,44.1 L19,13.6 L24,13.6 L24,44.1 L38.2,44.1 L38.2,13.6 L42.5,13.6 L42.5,8.5 L33.4,8.5 L33.4,39.2 L28.5,39.2 L28.5,8.5 L14.5,8.5 L14.5,39.2 L10.75,39.2 Z" fill="#fff"/></svg></div>
<div class="t" style="left:1076.0px;top:490.01px;font-size:24.5px;line-height:32px;font-family:'Liberation Sans',sans-serif;color:#333;font-style:italic">Read Conveyor_RTS</div>
<div class="a" style="left:1348.25px;top:497.05px;width:18.5px;height:18.5px;background:#d9d9d9;border:1.5px solid #92949f;border-radius:5px"></div>
<div class="a" style="left:1021.5px;top:536.8px;width:21px;height:21px;background:#5aa883;border-radius:5px"></div>
<div class="t" style="left:1049.5px;top:534.52px;font-size:21px;line-height:27px;font-family:'Liberation Sans',sans-serif;color:#888">true</div>
<div class="a" style="left:1742.5px;top:479.8px;width:350px;height:53px;background:#3fadb5;border:2px solid #92949f;border-radius:8px;overflow:hidden"><div class="a" style="left:294.5px;top:0;width:52.5px;height:53px;background:rgba(0,0,0,0.07);border-left:1.5px solid rgba(0,0,0,0.1)"></div><svg class="a" style="left:295.0px;top:-1px" width="53" height="53" viewBox="0 0 53 53"><path d="M10.75,44.1 L19,44.1 L19,13.6 L24,13.6 L24,44.1 L38.2,44.1 L38.2,13.6 L42.5,13.6 L42.5,8.5 L33.4,8.5 L33.4,39.2 L28.5,39.2 L28.5,8.5 L14.5,8.5 L14.5,39.2 L10.75,39.2 Z" fill="#fff"/></svg></div>
<div class="t" style="left:26.5px;width:2000px;text-align:right;top:490.01px;font-size:24.5px;line-height:32px;font-family:'Liberation Sans',sans-serif;color:#333;font-style:italic">Write Conveyor_RTS</div>
<div class="a" style="left:1733.25px;top:497.05px;width:18.5px;height:18.5px;background:#d9d9d9;border:1.5px solid #92949f;border-radius:5px"></div>
<div class="a" style="left:1756.0px;top:536.8px;width:21px;height:21px;background:#5aa883;border-radius:5px"></div>
<div class="t" style="left:1784.0px;top:534.52px;font-size:21px;line-height:27px;font-family:'Liberation Sans',sans-serif;color:#888">true</div>
<div class="a" style="left:1287.5px;top:643.8px;width:455.0px;height:5px;background:#9294a0"></div>
<div class="a" style="left:1007.5px;top:619.8px;width:280px;height:53px;background:#d59ea3;border:2px solid #92949f;border-radius:8px;overflow:hidden"><div class="a" style="left:0;top:0;width:51.5px;height:53px;background:rgba(0,0,0,0.07);border-right:1.5px solid rgba(0,0,0,0.1)"></div><svg class="a" style="left:-1.5px;top:-1.5px" width="53" height="53" viewBox="0 0 53 53"><path d="M10.75,44.1 L19,44.1 L19,13.6 L24,13.6 L24,44.1 L38.2,44.1 L38.2,13.6 L42.5,13.6 L42.5,8.5 L33.4,8.5 L33.4,39.2 L28.5,39.2 L28.5,8.5 L14.5,8.5 L14.5,39.2 L10.75,39.2 Z" fill="#fff"/></svg></div>
<div class="t" style="left:1076.0px;top:630.01px;font-size:24.5px;line-height:32px;font-family:'Liberation Sans',sans-serif;color:#333;font-style:italic">Read Robot_RTS</div>
<div class="a" style="left:1278.25px;top:637.05px;width:18.5px;height:18.5px;background:#d9d9d9;border:1.5px solid #92949f;border-radius:5px"></div>
<div class="a" style="left:1021.5px;top:676.8px;width:21px;height:21px;background:#5aa883;border-radius:5px"></div>
<div class="t" style="left:1049.5px;top:674.52px;font-size:21px;line-height:27px;font-family:'Liberation Sans',sans-serif;color:#888">true</div>
<div class="a" style="left:1742.5px;top:619.8px;width:315px;height:53px;background:#3fadb5;border:2px solid #92949f;border-radius:8px;overflow:hidden"><div class="a" style="left:259.5px;top:0;width:52.5px;height:53px;background:rgba(0,0,0,0.07);border-left:1.5px solid rgba(0,0,0,0.1)"></div><svg class="a" style="left:260.0px;top:-1px" width="53" height="53" viewBox="0 0 53 53"><path d="M10.75,44.1 L19,44.1 L19,13.6 L24,13.6 L24,44.1 L38.2,44.1 L38.2,13.6 L42.5,13.6 L42.5,8.5 L33.4,8.5 L33.4,39.2 L28.5,39.2 L28.5,8.5 L14.5,8.5 L14.5,39.2 L10.75,39.2 Z" fill="#fff"/></svg></div>
<div class="t" style="left:-8.5px;width:2000px;text-align:right;top:630.01px;font-size:24.5px;line-height:32px;font-family:'Liberation Sans',sans-serif;color:#333;font-style:italic">Write Robot_RTS</div>
<div class="a" style="left:1733.25px;top:637.05px;width:18.5px;height:18.5px;background:#d9d9d9;border:1.5px solid #92949f;border-radius:5px"></div>
<div class="a" style="left:1756.0px;top:676.8px;width:21px;height:21px;background:#5aa883;border-radius:5px"></div>
<div class="t" style="left:1784.0px;top:674.52px;font-size:21px;line-height:27px;font-family:'Liberation Sans',sans-serif;color:#888">true</div>
<div class="a" style="left:1357.5px;top:783.8px;width:385.0px;height:5px;background:#9294a0"></div>
<div class="a" style="left:1007.5px;top:759.8px;width:350px;height:53px;background:#d59ea3;border:2px solid #92949f;border-radius:8px;overflow:hidden"><div class="a" style="left:0;top:0;width:51.5px;height:53px;background:rgba(0,0,0,0.07);border-right:1.5px solid rgba(0,0,0,0.1)"></div><svg class="a" style="left:-1.5px;top:-1.5px" width="53" height="53" viewBox="0 0 53 53"><path d="M10.75,44.1 L19,44.1 L19,13.6 L24,13.6 L24,44.1 L38.2,44.1 L38.2,13.6 L42.5,13.6 L42.5,8.5 L33.4,8.5 L33.4,39.2 L28.5,39.2 L28.5,8.5 L14.5,8.5 L14.5,39.2 L10.75,39.2 Z" fill="#fff"/></svg></div>
<div class="t" style="left:1076.0px;top:770.01px;font-size:24.5px;line-height:32px;font-family:'Liberation Sans',sans-serif;color:#333;font-style:italic">Read Robot_Position</div>
<div class="a" style="left:1348.25px;top:777.05px;width:18.5px;height:18.5px;background:#d9d9d9;border:1.5px solid #92949f;border-radius:5px"></div>
<div class="a" style="left:1021.5px;top:816.8px;width:21px;height:21px;background:#5aa883;border-radius:5px"></div>
<div class="t" style="left:1049.5px;top:814.52px;font-size:21px;line-height:27px;font-family:'Liberation Sans',sans-serif;color:#888">15.5</div>
<div class="a" style="left:1742.5px;top:759.8px;width:350px;height:53px;background:#3fadb5;border:2px solid #92949f;border-radius:8px;overflow:hidden"><div class="a" style="left:294.5px;top:0;width:52.5px;height:53px;background:rgba(0,0,0,0.07);border-left:1.5px solid rgba(0,0,0,0.1)"></div><svg class="a" style="left:295.0px;top:-1px" width="53" height="53" viewBox="0 0 53 53"><path d="M10.75,44.1 L19,44.1 L19,13.6 L24,13.6 L24,44.1 L38.2,44.1 L38.2,13.6 L42.5,13.6 L42.5,8.5 L33.4,8.5 L33.4,39.2 L28.5,39.2 L28.5,8.5 L14.5,8.5 L14.5,39.2 L10.75,39.2 Z" fill="#fff"/></svg></div>
<div class="t" style="left:26.5px;width:2000px;text-align:right;top:770.01px;font-size:24.5px;line-height:32px;font-family:'Liberation Sans',sans-serif;color:#333;font-style:italic">Write Robot_Position</div>
<div class="a" style="left:1733.25px;top:777.05px;width:18.5px;height:18.5px;background:#d9d9d9;border:1.5px solid #92949f;border-radius:5px"></div>
<div class="a" style="left:1756.0px;top:816.8px;width:21px;height:21px;background:#5aa883;border-radius:5px"></div>
<div class="t" style="left:1784.0px;top:814.52px;font-size:21px;line-height:27px;font-family:'Liberation Sans',sans-serif;color:#888">15.5</div>
<div class="a" style="left:1392.5px;top:923.8px;width:350.0px;height:5px;background:#9294a0"></div>
<div class="a" style="left:1007.5px;top:899.8px;width:385px;height:53px;background:#d59ea3;border:2px solid #92949f;border-radius:8px;overflow:hidden"><div class="a" style="left:0;top:0;width:51.5px;height:53px;background:rgba(0,0,0,0.07);border-right:1.5px solid rgba(0,0,0,0.1)"></div><svg class="a" style="left:-1.5px;top:-1.5px" width="53" height="53" viewBox="0 0 53 53"><path d="M10.75,44.1 L19,44.1 L19,13.6 L24,13.6 L24,44.1 L38.2,44.1 L38.2,13.6 L42.5,13.6 L42.5,8.5 L33.4,8.5 L33.4,39.2 L28.5,39.2 L28.5,8.5 L14.5,8.5 L14.5,39.2 L10.75,39.2 Z" fill="#fff"/></svg></div>
<div class="t" style="left:1076.0px;top:910.01px;font-size:24.5px;line-height:32px;font-family:'Liberation Sans',sans-serif;color:#333;font-style:italic">Read Conveyor_Running</div>
<div class="a" style="left:1383.25px;top:917.05px;width:18.5px;height:18.5px;background:#d9d9d9;border:1.5px solid #92949f;border-radius:5px"></div>
<div class="a" style="left:1021.5px;top:956.8px;width:21px;height:21px;background:#5aa883;border-radius:5px"></div>
<div class="t" style="left:1049.5px;top:954.52px;font-size:21px;line-height:27px;font-family:'Liberation Sans',sans-serif;color:#888">true</div>
<div class="a" style="left:1742.5px;top:899.8px;width:385px;height:53px;background:#3fadb5;border:2px solid #92949f;border-radius:8px;overflow:hidden"><div class="a" style="left:329.5px;top:0;width:52.5px;height:53px;background:rgba(0,0,0,0.07);border-left:1.5px solid rgba(0,0,0,0.1)"></div><svg class="a" style="left:330.0px;top:-1px" width="53" height="53" viewBox="0 0 53 53"><path d="M10.75,44.1 L19,44.1 L19,13.6 L24,13.6 L24,44.1 L38.2,44.1 L38.2,13.6 L42.5,13.6 L42.5,8.5 L33.4,8.5 L33.4,39.2 L28.5,39.2 L28.5,8.5 L14.5,8.5 L14.5,39.2 L10.75,39.2 Z" fill="#fff"/></svg></div>
<div class="t" style="left:61.5px;width:2000px;text-align:right;top:910.01px;font-size:24.5px;line-height:32px;font-family:'Liberation Sans',sans-serif;color:#333;font-style:italic">Write Conveyor_Running</div>
<div class="a" style="left:1733.25px;top:917.05px;width:18.5px;height:18.5px;background:#d9d9d9;border:1.5px solid #92949f;border-radius:5px"></div>
<div class="a" style="left:1756.0px;top:956.8px;width:21px;height:21px;background:#5aa883;border-radius:5px"></div>
<div class="t" style="left:1784.0px;top:954.52px;font-size:21px;line-height:27px;font-family:'Liberation Sans',sans-serif;color:#888">true</div>
<div class="a" style="left:1322.5px;top:1063.8px;width:420.0px;height:5px;background:#9294a0"></div>
<div class="a" style="left:1007.5px;top:1039.8px;width:315px;height:53px;background:#d59ea3;border:2px solid #92949f;border-radius:8px;overflow:hidden"><div class="a" style="left:0;top:0;width:51.5px;height:53px;background:rgba(0,0,0,0.07);border-right:1.5px solid rgba(0,0,0,0.1)"></div><svg class="a" style="left:-1.5px;top:-1.5px" width="53" height="53" viewBox="0 0 53 53"><path d="M10.75,44.1 L19,44.1 L19,13.6 L24,13.6 L24,44.1 L38.2,44.1 L38.2,13.6 L42.5,13.6 L42.5,8.5 L33.4,8.5 L33.4,39.2 L28.5,39.2 L28.5,8.5 L14.5,8.5 L14.5,39.2 L10.75,39.2 Z" fill="#fff"/></svg></div>
<div class="t" style="left:1076.0px;top:1050.01px;font-size:24.5px;line-height:32px;font-family:'Liberation Sans',sans-serif;color:#333;font-style:italic">Read Line4_State</div>
<div class="a" style="left:1313.25px;top:1057.05px;width:18.5px;height:18.5px;background:#d9d9d9;border:1.5px solid #92949f;border-radius:5px"></div>
<div class="a" style="left:1021.5px;top:1096.8px;width:21px;height:21px;background:#5aa883;border-radius:5px"></div>
<div class="t" style="left:1049.5px;top:1094.52px;font-size:21px;line-height:27px;font-family:'Liberation Sans',sans-serif;color:#888">4</div>
<div class="a" style="left:1742.5px;top:1039.8px;width:315px;height:53px;background:#3fadb5;border:2px solid #92949f;border-radius:8px;overflow:hidden"><div class="a" style="left:259.5px;top:0;width:52.5px;height:53px;background:rgba(0,0,0,0.07);border-left:1.5px solid rgba(0,0,0,0.1)"></div><svg class="a" style="left:260.0px;top:-1px" width="53" height="53" viewBox="0 0 53 53"><path d="M10.75,44.1 L19,44.1 L19,13.6 L24,13.6 L24,44.1 L38.2,44.1 L38.2,13.6 L42.5,13.6 L42.5,8.5 L33.4,8.5 L33.4,39.2 L28.5,39.2 L28.5,8.5 L14.5,8.5 L14.5,39.2 L10.75,39.2 Z" fill="#fff"/></svg></div>
<div class="t" style="left:-8.5px;width:2000px;text-align:right;top:1050.01px;font-size:24.5px;line-height:32px;font-family:'Liberation Sans',sans-serif;color:#333;font-style:italic">Write Line4_State</div>
<div class="a" style="left:1733.25px;top:1057.05px;width:18.5px;height:18.5px;background:#d9d9d9;border:1.5px solid #92949f;border-radius:5px"></div>
<div class="a" style="left:1756.0px;top:1096.8px;width:21px;height:21px;background:#5aa883;border-radius:5px"></div>
<div class="t" style="left:1784.0px;top:1094.52px;font-size:21px;line-height:27px;font-family:'Liberation Sans',sans-serif;color:#888">4</div>
<div class="a" style="left:1322.5px;top:1203.8px;width:420.0px;height:5px;background:#9294a0"></div>
<div class="a" style="left:1007.5px;top:1179.8px;width:315px;height:53px;background:#d59ea3;border:2px solid #92949f;border-radius:8px;overflow:hidden"><div class="a" style="left:0;top:0;width:51.5px;height:53px;background:rgba(0,0,0,0.07);border-right:1.5px solid rgba(0,0,0,0.1)"></div><svg class="a" style="left:-1.5px;top:-1.5px" width="53" height="53" viewBox="0 0 53 53"><path d="M10.75,44.1 L19,44.1 L19,13.6 L24,13.6 L24,44.1 L38.2,44.1 L38.2,13.6 L42.5,13.6 L42.5,8.5 L33.4,8.5 L33.4,39.2 L28.5,39.2 L28.5,8.5 L14.5,8.5 L14.5,39.2 L10.75,39.2 Z" fill="#fff"/></svg></div>
<div class="t" style="left:1076.0px;top:1190.01px;font-size:24.5px;line-height:32px;font-family:'Liberation Sans',sans-serif;color:#333;font-style:italic">Read Line4_Fault</div>
<div class="a" style="left:1313.25px;top:1197.05px;width:18.5px;height:18.5px;background:#d9d9d9;border:1.5px solid #92949f;border-radius:5px"></div>
<div class="a" style="left:1021.5px;top:1236.8px;width:21px;height:21px;background:#5aa883;border-radius:5px"></div>
<div class="t" style="left:1049.5px;top:1234.52px;font-size:21px;line-height:27px;font-family:'Liberation Sans',sans-serif;color:#888">false</div>
<div class="a" style="left:1742.5px;top:1179.8px;width:315px;height:53px;background:#3fadb5;border:2px solid #92949f;border-radius:8px;overflow:hidden"><div class="a" style="left:259.5px;top:0;width:52.5px;height:53px;background:rgba(0,0,0,0.07);border-left:1.5px solid rgba(0,0,0,0.1)"></div><svg class="a" style="left:260.0px;top:-1px" width="53" height="53" viewBox="0 0 53 53"><path d="M10.75,44.1 L19,44.1 L19,13.6 L24,13.6 L24,44.1 L38.2,44.1 L38.2,13.6 L42.5,13.6 L42.5,8.5 L33.4,8.5 L33.4,39.2 L28.5,39.2 L28.5,8.5 L14.5,8.5 L14.5,39.2 L10.75,39.2 Z" fill="#fff"/></svg></div>
<div class="t" style="left:-8.5px;width:2000px;text-align:right;top:1190.01px;font-size:24.5px;line-height:32px;font-family:'Liberation Sans',sans-serif;color:#333;font-style:italic">Write Line4_Fault</div>
<div class="a" style="left:1733.25px;top:1197.05px;width:18.5px;height:18.5px;background:#d9d9d9;border:1.5px solid #92949f;border-radius:5px"></div>
<div class="a" style="left:1756.0px;top:1236.8px;width:21px;height:21px;background:#5aa883;border-radius:5px"></div>
<div class="t" style="left:1784.0px;top:1234.52px;font-size:21px;line-height:27px;font-family:'Liberation Sans',sans-serif;color:#888">false</div>
<div class="a" style="left:2167px;top:95px;width:179px;height:62px;background:#fff"></div>
<div class="a" style="left:2167px;top:156px;width:179px;height:1px;background:#c4c4d0"></div>
<div class="a" style="left:2172px;top:101px;width:200px;height:56px;background:#fff;border:1px solid #c4c4d0;border-bottom:none"></div>
<svg class="a" style="left:2192px;top:112px;" width="28" height="26" viewBox="0 0 28 26"><g fill="#8b8d99"><path d="M9 6.8 A4.5 4.5 0 0 1 18 6.8 Z"/><path d="M6.8 9 H12.6 V22.8 C9 22.5 6.8 20 6.8 15 Z"/><path d="M14.4 9 H20.8 V15 C20.8 20 18.6 22.5 14.4 22.8 Z"/></g><path d="M4 6 L8 10 M23.5 6 L19.5 10 M2.5 15 H7 M20.5 15 H25 M4 23.5 L8 19.5 M23.5 23.5 L19.5 19.5" stroke="#8b8d99" stroke-width="1.8"/></svg>
<div class="t" style="left:2226px;top:111.93px;font-size:23.3px;line-height:30px;font-family:'Liberation Sans',sans-serif;color:#566974;font-weight:bold">debug</div>
<div class="a" style="left:2167px;top:157px;width:179px;height:71px;background:#f3f3fb"></div>
<div class="a" style="left:2167px;top:228px;width:179px;height:1px;background:#d4d4e2"></div>
<div class="a" style="left:2167px;top:229px;width:179px;height:1101px;background:#fff"></div>
<div class="a" style="left:2262px;top:95px;width:84px;height:1235px;background:linear-gradient(90deg,rgba(0,0,0,0),rgba(0,0,0,0.04) 60%,rgba(0,0,0,0.17))"></div>
<div class="a" style="left:2346px;top:75px;width:848px;height:1255px;background:#cdcdcd;border-top-left-radius:9px;overflow:hidden"><div class="a" style="left:0;top:0;width:848px;height:51px;background:linear-gradient(90deg,#f6eef5 0%,#f7f0f5 50%,#f7f4f5 100%)"></div></div>
<div class="a" style="left:2346px;top:83px;width:1px;height:118px;background:rgba(0,0,0,0.35)"></div>
<svg class="a" style="left:2359px;top:87px;" width="28" height="28" viewBox="0 0 28 28"><path d="M3 2 L22 4 V19 L3 17 Z" fill="#1e3fd0"/><path d="M5 4 L20 6 V17 L5 15 Z" fill="#3b6cf0"/><path d="M6 5 L12 6 L6 12 Z" fill="#9ac0ff" opacity="0.8"/><path d="M8 19 L14 20 L12 24 L4 23 Z" fill="#b9b9c4"/><circle cx="20" cy="21" r="6.5" fill="#e8e8e8" stroke="#6a6a6a" stroke-width="1"/><path d="M17 20 L19 22 M23 20 L21 22" stroke="#1a9a2a" stroke-width="1.6"/></svg>
<div class="t" style="left:2391.4px;top:88.63px;font-size:20.4px;line-height:27px;font-family:'Liberation Sans',sans-serif;color:#1b1b1b">192.168.0.137 - Remote Desktop Connection</div>
<div class="a" style="left:2346px;top:126px;width:848px;height:7px;background:linear-gradient(#8a8a8a,#262626)"></div>
<div class="a" style="left:2346px;top:133px;width:848px;height:16px;background:#1b1b1b"></div>
<div class="a" style="left:2352px;top:130px;width:16px;height:18px;background:#3a3f4a"></div>
<div class="t" style="left:1360px;width:2000px;text-align:center;top:131.23px;font-size:8px;line-height:10px;font-family:'Liberation Sans',sans-serif;color:#c7ccd8;font-weight:bold;letter-spacing:-0.5px">TIA</div>
<div class="t" style="left:1360px;width:2000px;text-align:center;top:139.73px;font-size:8px;line-height:10px;font-family:'Liberation Sans',sans-serif;color:#6c7fb8;font-weight:bold;letter-spacing:-0.5px">V17</div>
<div class="t" style="left:2374px;top:129.50px;font-size:12.4px;line-height:16px;font-family:'Liberation Sans',sans-serif;color:#f2f2f2;font-weight:bold">Siemens  -  C:\Users\richard\Documents\Automation\Stacklight_PLC\Stacklight_PLC</div>
<div class="a" style="left:2346px;top:149px;width:848px;height:50px;background:#d3d3d3"></div>
<div class="t" style="left:2358.3px;top:155.41px;font-size:11.8px;line-height:15px;font-family:'Liberation Sans',sans-serif;color:#1e1e30">Project</div>
<div class="t" style="left:2412.3px;top:155.41px;font-size:11.8px;line-height:15px;font-family:'Liberation Sans',sans-serif;color:#1e1e30">Edit</div>
<div class="t" style="left:2450.2px;top:155.41px;font-size:11.8px;line-height:15px;font-family:'Liberation Sans',sans-serif;color:#1e1e30">View</div>
<div class="t" style="left:2493.2px;top:155.41px;font-size:11.8px;line-height:15px;font-family:'Liberation Sans',sans-serif;color:#1e1e30">Insert</div>
<div class="t" style="left:2541.2px;top:155.41px;font-size:11.8px;line-height:15px;font-family:'Liberation Sans',sans-serif;color:#1e1e30">Online</div>
<div class="t" style="left:2594.2px;top:155.41px;font-size:11.8px;line-height:15px;font-family:'Liberation Sans',sans-serif;color:#1e1e30">Options</div>
<div class="t" style="left:2654px;top:155.41px;font-size:11.8px;line-height:15px;font-family:'Liberation Sans',sans-serif;color:#1e1e30">Tools</div>
<div class="t" style="left:2699.2px;top:155.41px;font-size:11.8px;line-height:15px;font-family:'Liberation Sans',sans-serif;color:#1e1e30">Window</div>
<div class="t" style="left:2758.1px;top:155.41px;font-size:11.8px;line-height:15px;font-family:'Liberation Sans',sans-serif;color:#1e1e30">Help</div>
<svg class="a" style="left:2359px;top:181px;" width="16" height="16" viewBox="0 0 16 16"><rect x="1" y="2" width="11" height="13" fill="#f0f4ff" stroke="#7a8fd0"/><path d="M12 1 L13 4 L16 4 L13.5 6 L14.5 9 L12 7 L9.5 9 L10.5 6 L8 4 L11 4 Z" fill="#ffe23a"/></svg>
<svg class="a" style="left:2383px;top:181px;" width="16" height="16" viewBox="0 0 16 16"><path d="M1 4 H6 L7 5 H14 V15 H1 Z" fill="#f3cf63" stroke="#b8901f"/><path d="M8 2 C12 2 14 4 14 7 L16 7 L12.5 11 L9 7 L11 7 C11 5 10 4 8 4 Z" fill="#2aa33a"/></svg>
<svg class="a" style="left:2405px;top:181px;" width="16" height="16" viewBox="0 0 16 16"><rect x="1" y="1" width="14" height="14" fill="#2342c8"/><rect x="4" y="1" width="8" height="5" fill="#e8eefc"/><rect x="4" y="9" width="8" height="6" fill="#0c1f80"/></svg>
<div class="t" style="left:2426px;top:176.53px;font-size:12.9px;line-height:17px;font-family:'Liberation Sans',sans-serif;color:#141414">Save project</div>
<div class="a" style="left:2502px;top:177px;width:1px;height:22px;border-left:1px dotted #9a9a9a"></div>
<div class="a" style="left:2531px;top:177px;width:1px;height:22px;border-left:1px dotted #9a9a9a"></div>
<div class="a" style="left:2632px;top:177px;width:1px;height:22px;border-left:1px dotted #9a9a9a"></div>
<div class="a" style="left:2707px;top:177px;width:1px;height:22px;border-left:1px dotted #9a9a9a"></div>
<div class="a" style="left:2832.5px;top:177px;width:1px;height:22px;border-left:1px dotted #9a9a9a"></div>
<div class="a" style="left:3000px;top:177px;width:1px;height:22px;border-left:1px dotted #9a9a9a"></div>
<div class="a" style="left:3077.6px;top:177px;width:1px;height:22px;border-left:1px dotted #9a9a9a"></div>
<div class="a" style="left:3106px;top:177px;width:1px;height:22px;border-left:1px dotted #9a9a9a"></div>
<div class="a" style="left:3159.3px;top:177px;width:1px;height:22px;border-left:1px dotted #9a9a9a"></div>
<svg class="a" style="left:2510px;top:181px;" width="16" height="16" viewBox="0 0 16 16"><rect x="3" y="1" width="10" height="8" fill="#fff" stroke="#555"/><path d="M5 3 H11 M5 5 H11" stroke="#223" /><rect x="0" y="8" width="16" height="6" rx="1" fill="#3d5bdc"/></svg>
<svg class="a" style="left:2540px;top:181px;" width="16" height="16" viewBox="0 0 16 16"><path d="M4 1 L9 11 M12 1 L7 11" stroke="#1c4cc8" stroke-width="1.6"/><circle cx="5" cy="13" r="2.5" fill="none" stroke="#1c4cc8" stroke-width="1.5"/><circle cx="11" cy="13" r="2.5" fill="none" stroke="#1c4cc8" stroke-width="1.5"/></svg>
<svg class="a" style="left:2563px;top:181px;" width="16" height="16" viewBox="0 0 16 16"><rect x="1" y="1" width="9" height="11" fill="#fff" stroke="#3a4fb0"/><rect x="5" y="4" width="10" height="11" fill="#fff" stroke="#3a4fb0"/><path d="M7 7 H13 M7 9 H13 M7 11 H13" stroke="#223"/></svg>
<svg class="a" style="left:2587px;top:181px;" width="16" height="16" viewBox="0 0 16 16"><rect x="1" y="2" width="11" height="12" fill="#e6e6e6" stroke="#9a9a9a"/><rect x="6" y="6" width="9" height="9" fill="#f4f4f4" stroke="#9a9a9a"/></svg>
<svg class="a" style="left:2612px;top:181px;" width="16" height="16" viewBox="0 0 16 16"><path d="M2 2 L14 14 M14 2 L2 14" stroke="#333" stroke-width="2"/></svg>
<svg class="a" style="left:2639px;top:181px;" width="16" height="16" viewBox="0 0 16 16"><path d="M3 6 C6 2 13 3 13 9 C13 13 9 15 7 15" fill="none" stroke="#8a8a8a" stroke-width="2.2"/><path d="M0 2 L5 9 L7 3 Z" fill="#8a8a8a"/></svg>
<svg class="a" style="left:2656px;top:181px;" width="12" height="16" viewBox="0 0 12 16"><path d="M6 2 V9 M3 6 L6 10 L9 6 M2 13 H10" stroke="#9a9a9a" stroke-width="1.8" fill="none"/></svg>
<svg class="a" style="left:2675px;top:181px;" width="16" height="16" viewBox="0 0 16 16"><path d="M13 6 C10 2 3 3 3 9 C3 13 7 15 9 15" fill="none" stroke="#8a8a8a" stroke-width="2.2"/><path d="M16 2 L11 9 L9 3 Z" fill="#8a8a8a"/></svg>
<svg class="a" style="left:2692px;top:181px;" width="12" height="16" viewBox="0 0 12 16"><path d="M6 2 V9 M3 6 L6 10 L9 6 M2 13 H10" stroke="#9a9a9a" stroke-width="1.8" fill="none"/></svg>
<svg class="a" style="left:2715px;top:181px;" width="16" height="16" viewBox="0 0 16 16"><rect x="1" y="1" width="11" height="11" fill="#fff" stroke="#2a3a90"/><path d="M3 4 H10 M3 6 H10" stroke="#223"/><rect x="6" y="8" width="10" height="8" fill="#fff" stroke="#2a3a90"/><text x="7" y="15" font-size="6" fill="#112">01</text></svg>
<svg class="a" style="left:2739px;top:181px;" width="16" height="16" viewBox="0 0 16 16"><rect x="0" y="1" width="16" height="14" fill="#2f3f5a"/><rect x="1" y="2" width="4" height="12" fill="#31c5e0"/><path d="M10 3 V12 M7 9 L10 13 L13 9" stroke="#fff" stroke-width="2" fill="none"/></svg>
<svg class="a" style="left:2763px;top:181px;" width="16" height="16" viewBox="0 0 16 16"><rect x="0" y="1" width="16" height="14" fill="#2f3f5a"/><rect x="1" y="2" width="4" height="12" fill="#31c5e0"/><path d="M10 13 V4 M7 7 L10 3 L13 7" stroke="#fff" stroke-width="2" fill="none"/></svg>
<svg class="a" style="left:2787px;top:181px;" width="16" height="16" viewBox="0 0 16 16"><rect x="1" y="2" width="14" height="10" fill="#9d9d9d" stroke="#6d6d6d"/><rect x="4" y="12" width="8" height="3" fill="#7d7d7d"/></svg>
<svg class="a" style="left:2811px;top:181px;" width="16" height="16" viewBox="0 0 16 16"><rect x="1" y="1" width="12" height="12" fill="#a9a9a9" stroke="#6d6d6d"/><text x="3" y="15" font-size="7" font-weight="bold" fill="#333">RT</text></svg>
<svg class="a" style="left:2837px;top:181px;" width="16" height="16" viewBox="0 0 16 16"><path d="M2 14 L7 9 M9 7 L14 2" stroke="#9a9a9a" stroke-width="2"/><rect x="5" y="5" width="6" height="6" transform="rotate(45 8 8)" fill="#b5b5b5"/></svg>
<div class="t" style="left:2859px;top:176.53px;font-size:12.9px;line-height:17px;font-family:'Liberation Sans',sans-serif;color:#9a9a9a">Go online</div>
<svg class="a" style="left:2919px;top:181px;" width="16" height="16" viewBox="0 0 16 16"><path d="M1 15 L6 10 M10 6 L15 1" stroke="#2a4be0" stroke-width="2.4"/><rect x="4" y="4" width="8" height="8" transform="rotate(45 8 8)" fill="#3a6af0"/></svg>
<div class="t" style="left:2941px;top:176.53px;font-size:12.9px;line-height:17px;font-family:'Liberation Sans',sans-serif;color:#141414">Go offline</div>
<svg class="a" style="left:3007px;top:181px;" width="16" height="16" viewBox="0 0 16 16"><rect x="5" y="1" width="4" height="5" fill="#31b5e0"/><path d="M7 6 V9 M3 9 H11 M3 9 V11 M11 9 V11" stroke="#6a3ab0"/><rect x="1" y="11" width="4" height="4" fill="#31b5e0"/><rect x="9" y="11" width="4" height="4" fill="#31b5e0"/><text x="11" y="15" font-size="9" font-weight="bold" fill="#112">?</text></svg>
<svg class="a" style="left:3031px;top:181px;" width="16" height="16" viewBox="0 0 16 16"><rect x="0" y="1" width="16" height="14" fill="#7a7a7a"/><rect x="1" y="2" width="4" height="12" fill="#aaa"/><path d="M8 6 L14 10 L8 14 Z" fill="#ddd"/></svg>
<svg class="a" style="left:3055px;top:181px;" width="16" height="16" viewBox="0 0 16 16"><rect x="0" y="1" width="16" height="14" fill="#5a6070"/><rect x="1" y="2" width="4" height="12" fill="#31c5e0"/><rect x="9" y="8" width="6" height="6" fill="#e0202a"/></svg>
<svg class="a" style="left:3084px;top:181px;" width="16" height="16" viewBox="0 0 16 16"><path d="M3 3 L13 13 M13 3 L3 13" stroke="#10206a" stroke-width="2.4"/><rect x="8" y="0" width="7" height="5" fill="none" stroke="#5a7ae0"/></svg>
<svg class="a" style="left:3113px;top:181px;" width="16" height="16" viewBox="0 0 16 16"><rect x="1" y="1" width="14" height="14" fill="#fff" stroke="#4a6ad8"/><path d="M1 8 H15" stroke="#4a6ad8" stroke-width="2"/></svg>
<svg class="a" style="left:3137px;top:181px;" width="16" height="16" viewBox="0 0 16 16"><rect x="1" y="1" width="14" height="14" fill="#fff" stroke="#4a6ad8"/><path d="M8 1 V15" stroke="#4a6ad8" stroke-width="2"/></svg>
<div class="a" style="left:3166px;top:178px;width:28px;height:19px;background:#fff;border:1px solid #9a9a9a"></div>
<div class="t" style="left:3170px;top:181.19px;font-size:11px;line-height:14px;font-family:'Liberation Sans',sans-serif;color:#9a9a9a">&lt;Sea</div>
<div class="a" style="left:2369px;top:199px;width:825px;height:1.5px;background:#2a2a2a"></div>
<div class="a" style="left:2344px;top:199px;width:25px;height:1131px;background:#b3b3b3"></div>
<div class="a" style="left:2346px;top:224px;width:23px;height:2px;background:#f4f4f4"></div>
<div class="a" style="left:2368.5px;top:199px;width:1px;height:1131px;background:#3a3a3a"></div>
<div class="t" style="left:2297.5px;top:330.5px;width:120px;height:20px;transform:rotate(-90deg);font-size:13px;line-height:20px;color:#f4f4f4;text-align:center;font-weight:bold;letter-spacing:0px">PLC programming</div>
<div class="a" style="left:2369.5px;top:200.5px;width:273px;height:23.5px;background:#b3b3b3"></div>
<div class="t" style="left:2375.4px;top:203.19px;font-size:13.6px;line-height:18px;font-family:'Liberation Sans',sans-serif;color:#f7f7f7">Project tree</div>
<svg class="a" style="left:2607px;top:208px;" width="13" height="12" viewBox="0 0 13 12"><rect x="0.5" y="0.5" width="12" height="11" fill="#e6e6e6" stroke="#fff"/><path d="M3.5 1 V11 M6.5 1 V11 M9.5 1 V11" stroke="#9a9a9a"/></svg>
<svg class="a" style="left:2629px;top:207px;" width="9" height="14" viewBox="0 0 9 14"><path d="M9 0 V14 L0 7 Z" fill="#f2f2f2"/></svg>
<div class="a" style="left:2369.5px;top:223.7px;width:273px;height:3px;background:#f7a11a"></div>
<div class="a" style="left:2369.5px;top:226.7px;width:273px;height:25.3px;background:#cdcdcd"></div>
<div class="a" style="left:2376.4px;top:230.5px;width:83.2px;height:22px;background:linear-gradient(#fbfbfb,#ececec);border:1px solid #9a9a9a;border-bottom:none"></div>
<div class="t" style="left:2388.4px;top:231.43px;font-size:13.2px;line-height:17px;font-family:'Liberation Sans',sans-serif;color:#111;font-weight:bold">Devices</div>
<div class="a" style="left:2369.5px;top:252px;width:273px;height:1px;background:#8a8a8a"></div>
<div class="a" style="left:2369.5px;top:253px;width:273px;height:26px;background:#ececec"></div>
<svg class="a" style="left:2379px;top:258px;" width="16" height="16" viewBox="0 0 16 16"><rect x="1" y="3" width="13" height="12" fill="#f4f4f4" stroke="#888"/><path d="M3 6 H7 M9 6 H12 M3 9 H12 M3 12 H8" stroke="#777"/></svg>
<div class="a" style="left:2587px;top:256px;width:1px;height:20px;border-left:1px dotted #a0a0a0"></div>
<div class="a" style="left:2590.5px;top:257px;width:22px;height:21px;background:#f6f8ff;border:1px solid #4a6ad8;border-radius:2px"></div>
<svg class="a" style="left:2594px;top:261px;" width="15" height="13" viewBox="0 0 15 13"><rect x="0.5" y="0.5" width="14" height="12" fill="#fff" stroke="#2a3a80"/><path d="M2 4 H13 M2 7 H13 M2 10 H13 M5 2 V12 M9 2 V12" stroke="#5a6ab0"/></svg>
<svg class="a" style="left:2617px;top:259px;" width="18" height="17" viewBox="0 0 18 17"><rect x="1" y="4" width="12" height="12" fill="#fff" stroke="#2a3a80"/><path d="M3 8 H11 M3 11 H11 M3 14 H11" stroke="#e0a020" stroke-width="2"/><path d="M9 1 C14 1 16 3 16 7 L18 7 L14 11 L10 7 L12 7 C12 5 11 4 9 4 Z" fill="#22a33a"/></svg>
<div class="a" style="left:2369.5px;top:279px;width:273px;height:21px;background:#c3c3c3"></div>
<div class="a" style="left:2369.5px;top:299.4px;width:233.5px;height:19.01px;background:#dedede"></div>
<div class="a" style="left:2603px;top:299.4px;width:39.5px;height:19.01px;background:#dedede"></div>
<div class="a" style="left:2369.5px;top:317.40999999999997px;width:273px;height:1px;background:#fbfbfb"></div>
<svg class="a" style="left:2373.5px;top:305.905px;" width="10" height="6" viewBox="0 0 10 6"><path d="M0 0 H10 L5 6 Z" fill="#000"/></svg>
<svg class="a" style="left:2388.5px;top:300.9px;" width="16" height="16" viewBox="0 0 16 16"><path d="M2 1 H10 L14 5 V15 H2 Z" fill="#fff" stroke="#6a7ad0"/></svg>
<div class="t" style="left:2409px;top:301.01px;font-size:12.1px;line-height:16px;font-family:'Liberation Sans',sans-serif;color:#0d0d0d;">Stacklight_PLC</div>
<div class="a" style="left:2607px;top:301.905px;width:14px;height:14px;background:#1fa12f;border:1px solid #187a24"></div>
<svg class="a" style="left:2607px;top:301.905px;" width="14" height="14" viewBox="0 0 14 14"><path d="M2.5 7 L5.8 10.5 L11.5 3.5" fill="none" stroke="#fff" stroke-width="2.2"/></svg>
<div class="a" style="left:2626px;top:301.905px;width:14px;height:14px;background:radial-gradient(circle at 40% 35%,#5fd35f,#1a9a1a 70%);border-radius:50%"></div>
<div class="a" style="left:2369.5px;top:318.40999999999997px;width:233.5px;height:19.01px;background:#efefef"></div>
<div class="a" style="left:2603px;top:318.40999999999997px;width:39.5px;height:19.01px;background:#efefef"></div>
<div class="a" style="left:2369.5px;top:336.41999999999996px;width:273px;height:1px;background:#fbfbfb"></div>
<svg class="a" style="left:2406.5px;top:319.90999999999997px;" width="17" height="16" viewBox="0 0 17 16"><path d="M1 5 L13 3 V15 L1 15 Z" fill="#3a55d8"/><path d="M12 0 L13 3 L16 3 L13.5 5 L14.5 8 L12 6 L9.5 8 L10.5 5 L8 3 L11 3 Z" fill="#ffe23a"/></svg>
<div class="t" style="left:2427px;top:320.02px;font-size:12.1px;line-height:16px;font-family:'Liberation Sans',sans-serif;color:#0d0d0d;">Add new device</div>
<div class="a" style="left:2369.5px;top:337.41999999999996px;width:233.5px;height:19.01px;background:#efefef"></div>
<div class="a" style="left:2603px;top:337.41999999999996px;width:39.5px;height:19.01px;background:#efefef"></div>
<div class="a" style="left:2369.5px;top:355.42999999999995px;width:273px;height:1px;background:#fbfbfb"></div>
<svg class="a" style="left:2406.5px;top:338.91999999999996px;" width="17" height="16" viewBox="0 0 17 16"><rect x="6" y="0" width="5" height="5" fill="#31b5e0" stroke="#234"/><path d="M8.5 5 V8 M3 8 H14 M3 8 V10 M8.5 8 V10 M14 8 V10" stroke="#234"/><rect x="1" y="10" width="4" height="5" fill="#31b5e0" stroke="#234"/><rect x="6.5" y="10" width="4" height="5" fill="#31b5e0" stroke="#234"/><rect x="12" y="10" width="4" height="5" fill="#31b5e0" stroke="#234"/></svg>
<div class="t" style="left:2427px;top:339.03px;font-size:12.1px;line-height:16px;font-family:'Liberation Sans',sans-serif;color:#0d0d0d;">Devices &amp; networks</div>
<div class="a" style="left:2369.5px;top:356.42999999999995px;width:233.5px;height:19.01px;background:#dedede"></div>
<div class="a" style="left:2603px;top:356.42999999999995px;width:39.5px;height:19.01px;background:#dedede"></div>
<div class="a" style="left:2369.5px;top:374.43999999999994px;width:273px;height:1px;background:#fbfbfb"></div>
<svg class="a" style="left:2391.5px;top:362.93499999999995px;" width="10" height="6" viewBox="0 0 10 6"><path d="M0 0 H10 L5 6 Z" fill="#000"/></svg>
<svg class="a" style="left:2406.5px;top:357.92999999999995px;" width="17" height="16" viewBox="0 0 17 16"><path d="M0.5 2.5 H6 L7.5 4 H15.5 V14.5 H0.5 Z" fill="#f6dc8c" stroke="#c9a23e"/><rect x="6" y="7" width="8" height="9" fill="#3d4450"/><rect x="7" y="8" width="3" height="7" fill="#31c5e0"/><rect x="11" y="1" width="5" height="5" fill="#1ec82a"/></svg>
<div class="t" style="left:2427px;top:358.04px;font-size:12.1px;line-height:16px;font-family:'Liberation Sans',sans-serif;color:#0d0d0d;font-weight:bold;letter-spacing:-0.75px;">PLC_1 [CPU 1212C AC/DC/Rly]</div>
<div class="a" style="left:2607px;top:358.93499999999995px;width:14px;height:14px;background:#1fa12f;border:1px solid #187a24"></div>
<svg class="a" style="left:2607px;top:358.93499999999995px;" width="14" height="14" viewBox="0 0 14 14"><path d="M2.5 7 L5.8 10.5 L11.5 3.5" fill="none" stroke="#fff" stroke-width="2.2"/></svg>
<div class="a" style="left:2626px;top:358.93499999999995px;width:14px;height:14px;background:radial-gradient(circle at 40% 35%,#5fd35f,#1a9a1a 70%);border-radius:50%"></div>
<div class="a" style="left:2369.5px;top:375.44px;width:233.5px;height:19.01px;background:#efefef"></div>
<div class="a" style="left:2603px;top:375.44px;width:39.5px;height:19.01px;background:#efefef"></div>
<div class="a" style="left:2369.5px;top:393.45px;width:273px;height:1px;background:#fbfbfb"></div>
<svg class="a" style="left:2424.5px;top:376.94px;" width="17" height="16" viewBox="0 0 17 16"><rect x="1" y="1" width="9" height="15" fill="#3d4450"/><rect x="2" y="2" width="3" height="13" fill="#31c5e0"/><path d="M13 3 V15" stroke="#1a4ac0" stroke-width="2.5"/><path d="M10 1 C10 5 16 5 16 1" fill="none" stroke="#1a4ac0" stroke-width="2"/></svg>
<div class="t" style="left:2445px;top:377.05px;font-size:12.1px;line-height:16px;font-family:'Liberation Sans',sans-serif;color:#0d0d0d;">Device configuration</div>
<div class="a" style="left:2369.5px;top:394.45px;width:233.5px;height:19.01px;background:#efefef"></div>
<div class="a" style="left:2603px;top:394.45px;width:39.5px;height:19.01px;background:#efefef"></div>
<div class="a" style="left:2369.5px;top:412.46px;width:273px;height:1px;background:#fbfbfb"></div>
<svg class="a" style="left:2424.5px;top:395.95px;" width="17" height="16" viewBox="0 0 17 16"><rect x="2" y="0.5" width="13" height="15" fill="#f6f6ff" stroke="#4a5ad0"/><path d="M5 2 V8 C5 11 11 11 11 8 V2" fill="none" stroke="#112" stroke-width="1.4"/><circle cx="11" cy="12" r="1.8" fill="#112"/></svg>
<div class="t" style="left:2445px;top:396.06px;font-size:12.1px;line-height:16px;font-family:'Liberation Sans',sans-serif;color:#0d0d0d;">Online &amp; diagnostics</div>
<div class="a" style="left:2369.5px;top:413.46px;width:233.5px;height:19.01px;background:#efefef"></div>
<div class="a" style="left:2603px;top:413.46px;width:39.5px;height:19.01px;background:#efefef"></div>
<div class="a" style="left:2369.5px;top:431.46999999999997px;width:273px;height:1px;background:#fbfbfb"></div>
<svg class="a" style="left:2409.5px;top:419.965px;" width="10" height="6" viewBox="0 0 10 6"><path d="M0 0 H10 L5 6 Z" fill="#000"/></svg>
<svg class="a" style="left:2424.5px;top:414.96px;" width="17" height="16" viewBox="0 0 17 16"><path d="M0.5 2.5 H6 L7.5 4 H15.5 V14.5 H0.5 Z" fill="#f6dc8c" stroke="#c9a23e"/><rect x="1" y="5" width="14" height="9" fill="#fbe9a9"/><rect x="6" y="8" width="9" height="6" fill="#3d4450"/><rect x="4" y="10" width="3" height="2" fill="#3d4450"/><rect x="8" y="9" width="5" height="4" fill="#d8dce8"/></svg>
<div class="t" style="left:2445px;top:415.07px;font-size:12.1px;line-height:16px;font-family:'Liberation Sans',sans-serif;color:#0d0d0d;">Program blocks</div>
<div class="a" style="left:2626px;top:415.965px;width:14px;height:14px;background:radial-gradient(circle at 40% 35%,#5fd35f,#1a9a1a 70%);border-radius:50%"></div>
<div class="a" style="left:2369.5px;top:432.47px;width:233.5px;height:19.01px;background:#efefef"></div>
<div class="a" style="left:2603px;top:432.47px;width:39.5px;height:19.01px;background:#efefef"></div>
<div class="a" style="left:2369.5px;top:450.48px;width:273px;height:1px;background:#fbfbfb"></div>
<svg class="a" style="left:2442.5px;top:433.97px;" width="17" height="16" viewBox="0 0 17 16"><path d="M1 5 L13 3 V15 L1 15 Z" fill="#3a55d8"/><path d="M12 0 L13 3 L16 3 L13.5 5 L14.5 8 L12 6 L9.5 8 L10.5 5 L8 3 L11 3 Z" fill="#ffe23a"/></svg>
<div class="t" style="left:2463px;top:434.08px;font-size:12.1px;line-height:16px;font-family:'Liberation Sans',sans-serif;color:#0d0d0d;">Add new block</div>
<div class="a" style="left:2369.5px;top:451.48px;width:233.5px;height:19.01px;background:#efefef"></div>
<div class="a" style="left:2603px;top:451.48px;width:39.5px;height:19.01px;background:#efefef"></div>
<div class="a" style="left:2369.5px;top:469.49px;width:273px;height:1px;background:#fbfbfb"></div>
<svg class="a" style="left:2442.5px;top:452.98px;" width="17" height="16" viewBox="0 0 17 16"><rect x="3" y="3" width="11" height="10" fill="#8a1ac8"/><rect x="0" y="5" width="3" height="2" fill="#8a1ac8"/><rect x="0" y="9" width="3" height="2" fill="#8a1ac8"/><rect x="14" y="7" width="3" height="2" fill="#8a1ac8"/><rect x="5" y="5" width="7" height="6" fill="#8fd0ff" opacity="0.7"/></svg>
<div class="t" style="left:2463px;top:453.09px;font-size:12.1px;line-height:16px;font-family:'Liberation Sans',sans-serif;color:#0d0d0d;">Main [OB1]</div>
<div class="a" style="left:2626px;top:453.985px;width:14px;height:14px;background:radial-gradient(circle at 40% 35%,#5fd35f,#1a9a1a 70%);border-radius:50%"></div>
<div class="a" style="left:2369.5px;top:470.49px;width:233.5px;height:19.01px;background:#efefef"></div>
<div class="a" style="left:2603px;top:470.49px;width:39.5px;height:19.01px;background:#efefef"></div>
<div class="a" style="left:2369.5px;top:488.5px;width:273px;height:1px;background:#fbfbfb"></div>
<svg class="a" style="left:2442.5px;top:471.99px;" width="17" height="16" viewBox="0 0 17 16"><rect x="3" y="3" width="11" height="10" fill="#1a6ae0"/><rect x="0" y="5" width="3" height="2" fill="#1a6ae0"/><rect x="0" y="9" width="3" height="2" fill="#1a6ae0"/><rect x="14" y="7" width="3" height="2" fill="#1a6ae0"/><rect x="5" y="5" width="7" height="6" fill="#8fd0ff" opacity="0.7"/></svg>
<div class="t" style="left:2463px;top:472.10px;font-size:12.1px;line-height:16px;font-family:'Liberation Sans',sans-serif;color:#0d0d0d;">Line4_PLC [FB2]</div>
<div class="a" style="left:2626px;top:472.995px;width:14px;height:14px;background:radial-gradient(circle at 40% 35%,#5fd35f,#1a9a1a 70%);border-radius:50%"></div>
<div class="a" style="left:2369.5px;top:489.5px;width:233.5px;height:19.01px;background:#d3d8de"></div>
<div class="a" style="left:2603px;top:489.5px;width:39.5px;height:19.01px;background:#efefef"></div>
<div class="a" style="left:2369.5px;top:507.51px;width:273px;height:1px;background:#fbfbfb"></div>
<div class="a" style="left:2369.5px;top:489.5px;width:234px;height:19.01px;border:1px dotted #555"></div>
<svg class="a" style="left:2442.5px;top:491.0px;" width="17" height="16" viewBox="0 0 17 16"><rect x="3" y="3" width="11" height="10" fill="#1a6ae0"/><rect x="0" y="5" width="3" height="2" fill="#1a6ae0"/><rect x="0" y="9" width="3" height="2" fill="#1a6ae0"/><rect x="14" y="7" width="3" height="2" fill="#1a6ae0"/><rect x="5" y="5" width="7" height="6" fill="#8fd0ff" opacity="0.7"/></svg>
<div class="t" style="left:2463px;top:491.11px;font-size:12.1px;line-height:16px;font-family:'Liberation Sans',sans-serif;color:#0d0d0d;">Stacklight_Control [FB1]</div>
<div class="a" style="left:2626px;top:492.005px;width:14px;height:14px;background:radial-gradient(circle at 40% 35%,#5fd35f,#1a9a1a 70%);border-radius:50%"></div>
<div class="a" style="left:2369.5px;top:508.51px;width:233.5px;height:19.01px;background:#efefef"></div>
<div class="a" style="left:2603px;top:508.51px;width:39.5px;height:19.01px;background:#efefef"></div>
<div class="a" style="left:2369.5px;top:526.52px;width:273px;height:1px;background:#fbfbfb"></div>
<svg class="a" style="left:2442.5px;top:510.01px;" width="17" height="17" viewBox="0 0 17 17"><ellipse cx="8.5" cy="4" rx="5.5" ry="2.5" fill="#9aa8ff"/><path d="M3 4 V13 C3 16 14 16 14 13 V4 C14 6.5 3 6.5 3 4 Z" fill="#2b3fd6"/></svg>
<div class="t" style="left:2463px;top:510.12px;font-size:12.1px;line-height:16px;font-family:'Liberation Sans',sans-serif;color:#0d0d0d;">From_Line4_PLC [DB1]</div>
<div class="a" style="left:2626px;top:511.015px;width:14px;height:14px;background:radial-gradient(circle at 40% 35%,#5fd35f,#1a9a1a 70%);border-radius:50%"></div>
<div class="a" style="left:2369.5px;top:527.52px;width:233.5px;height:19.01px;background:#efefef"></div>
<div class="a" style="left:2603px;top:527.52px;width:39.5px;height:19.01px;background:#efefef"></div>
<div class="a" style="left:2369.5px;top:545.53px;width:273px;height:1px;background:#fbfbfb"></div>
<svg class="a" style="left:2442.5px;top:529.02px;" width="17" height="17" viewBox="0 0 17 17"><ellipse cx="8.5" cy="4" rx="5.5" ry="2.5" fill="#9aa8ff"/><path d="M3 4 V13 C3 16 14 16 14 13 V4 C14 6.5 3 6.5 3 4 Z" fill="#2b3fd6"/></svg>
<div class="t" style="left:2463px;top:529.13px;font-size:12.1px;line-height:16px;font-family:'Liberation Sans',sans-serif;color:#0d0d0d;">Line4_PLC_DB [DB2]</div>
<div class="a" style="left:2626px;top:530.025px;width:14px;height:14px;background:radial-gradient(circle at 40% 35%,#5fd35f,#1a9a1a 70%);border-radius:50%"></div>
<div class="a" style="left:2369.5px;top:546.53px;width:233.5px;height:19.01px;background:#efefef"></div>
<div class="a" style="left:2603px;top:546.53px;width:39.5px;height:19.01px;background:#efefef"></div>
<div class="a" style="left:2369.5px;top:564.54px;width:273px;height:1px;background:#fbfbfb"></div>
<svg class="a" style="left:2442.5px;top:548.03px;" width="17" height="17" viewBox="0 0 17 17"><ellipse cx="8.5" cy="4" rx="5.5" ry="2.5" fill="#9aa8ff"/><path d="M3 4 V13 C3 16 14 16 14 13 V4 C14 6.5 3 6.5 3 4 Z" fill="#2b3fd6"/></svg>
<div class="t" style="left:2463px;top:548.14px;font-size:12.1px;line-height:16px;font-family:'Liberation Sans',sans-serif;color:#0d0d0d;">Stacklight_Control_DB [...</div>
<div class="a" style="left:2626px;top:549.035px;width:14px;height:14px;background:radial-gradient(circle at 40% 35%,#5fd35f,#1a9a1a 70%);border-radius:50%"></div>
<div class="a" style="left:2369.5px;top:565.54px;width:233.5px;height:19.01px;background:#efefef"></div>
<div class="a" style="left:2603px;top:565.54px;width:39.5px;height:19.01px;background:#efefef"></div>
<div class="a" style="left:2369.5px;top:583.55px;width:273px;height:1px;background:#fbfbfb"></div>
<svg class="a" style="left:2412.5px;top:570.045px;" width="6" height="10" viewBox="0 0 6 10"><path d="M0 0 V10 L6 5 Z" fill="#000"/></svg>
<svg class="a" style="left:2424.5px;top:567.04px;" width="17" height="16" viewBox="0 0 17 16"><path d="M0.5 2.5 H6 L7.5 4 H15.5 V14.5 H0.5 Z" fill="#f6dc8c" stroke="#c9a23e"/><rect x="1" y="5" width="14" height="9" fill="#fbe9a9"/><circle cx="11" cy="11" r="4" fill="#2a7ae0"/><circle cx="11" cy="11" r="1.6" fill="#fbe9a9"/></svg>
<div class="t" style="left:2445px;top:567.15px;font-size:12.1px;line-height:16px;font-family:'Liberation Sans',sans-serif;color:#0d0d0d;">Technology objects</div>
<div class="a" style="left:2369.5px;top:584.55px;width:233.5px;height:19.01px;background:#efefef"></div>
<div class="a" style="left:2603px;top:584.55px;width:39.5px;height:19.01px;background:#efefef"></div>
<div class="a" style="left:2369.5px;top:602.56px;width:273px;height:1px;background:#fbfbfb"></div>
<svg class="a" style="left:2412.5px;top:589.055px;" width="6" height="10" viewBox="0 0 6 10"><path d="M0 0 V10 L6 5 Z" fill="#000"/></svg>
<svg class="a" style="left:2424.5px;top:586.05px;" width="17" height="16" viewBox="0 0 17 16"><path d="M0.5 2.5 H6 L7.5 4 H15.5 V14.5 H0.5 Z" fill="#f6dc8c" stroke="#c9a23e"/><rect x="1" y="5" width="14" height="9" fill="#fbe9a9"/><rect x="6" y="7" width="10" height="9" fill="#fff" stroke="#2a3a80"/><text x="7" y="14.5" font-size="6" font-weight="bold" fill="#112">01</text></svg>
<div class="t" style="left:2445px;top:586.16px;font-size:12.1px;line-height:16px;font-family:'Liberation Sans',sans-serif;color:#0d0d0d;">External source files</div>
<div class="a" style="left:2369.5px;top:603.56px;width:233.5px;height:19.01px;background:#efefef"></div>
<div class="a" style="left:2603px;top:603.56px;width:39.5px;height:19.01px;background:#efefef"></div>
<div class="a" style="left:2369.5px;top:621.5699999999999px;width:273px;height:1px;background:#fbfbfb"></div>
<svg class="a" style="left:2412.5px;top:608.0649999999999px;" width="6" height="10" viewBox="0 0 6 10"><path d="M0 0 V10 L6 5 Z" fill="#000"/></svg>
<svg class="a" style="left:2424.5px;top:605.06px;" width="17" height="16" viewBox="0 0 17 16"><path d="M0.5 2.5 H6 L7.5 4 H15.5 V14.5 H0.5 Z" fill="#f6dc8c" stroke="#c9a23e"/><rect x="1" y="5" width="14" height="9" fill="#fbe9a9"/><path d="M7 9 H16 V15 H7 L4 12 Z" fill="#5a2ab8"/></svg>
<div class="t" style="left:2445px;top:605.17px;font-size:12.1px;line-height:16px;font-family:'Liberation Sans',sans-serif;color:#0d0d0d;">PLC tags</div>
<div class="a" style="left:2626px;top:606.0649999999999px;width:14px;height:14px;background:radial-gradient(circle at 40% 35%,#5fd35f,#1a9a1a 70%);border-radius:50%"></div>
<div class="a" style="left:2369.5px;top:622.5699999999999px;width:233.5px;height:19.01px;background:#efefef"></div>
<div class="a" style="left:2603px;top:622.5699999999999px;width:39.5px;height:19.01px;background:#efefef"></div>
<div class="a" style="left:2369.5px;top:640.5799999999999px;width:273px;height:1px;background:#fbfbfb"></div>
<svg class="a" style="left:2412.5px;top:627.0749999999999px;" width="6" height="10" viewBox="0 0 6 10"><path d="M0 0 V10 L6 5 Z" fill="#000"/></svg>
<svg class="a" style="left:2424.5px;top:624.0699999999999px;" width="17" height="16" viewBox="0 0 17 16"><path d="M0.5 2.5 H6 L7.5 4 H15.5 V14.5 H0.5 Z" fill="#f6dc8c" stroke="#c9a23e"/><rect x="1" y="5" width="14" height="9" fill="#fbe9a9"/><rect x="7" y="6" width="8" height="10" fill="#fff" stroke="#3a4ab0"/><path d="M9 9 H13 M9 12 H13" stroke="#223"/></svg>
<div class="t" style="left:2445px;top:624.18px;font-size:12.1px;line-height:16px;font-family:'Liberation Sans',sans-serif;color:#0d0d0d;">PLC data types</div>
<div class="a" style="left:2369.5px;top:641.5799999999999px;width:233.5px;height:19.01px;background:#efefef"></div>
<div class="a" style="left:2603px;top:641.5799999999999px;width:39.5px;height:19.01px;background:#efefef"></div>
<div class="a" style="left:2369.5px;top:659.5899999999999px;width:273px;height:1px;background:#fbfbfb"></div>
<svg class="a" style="left:2412.5px;top:646.0849999999999px;" width="6" height="10" viewBox="0 0 6 10"><path d="M0 0 V10 L6 5 Z" fill="#000"/></svg>
<svg class="a" style="left:2424.5px;top:643.0799999999999px;" width="17" height="16" viewBox="0 0 17 16"><path d="M0.5 2.5 H6 L7.5 4 H15.5 V14.5 H0.5 Z" fill="#f6dc8c" stroke="#c9a23e"/><rect x="1" y="5" width="14" height="9" fill="#fbe9a9"/><rect x="5" y="6" width="11" height="6" fill="#fff" stroke="#555"/><circle cx="6" cy="14" r="2" fill="none" stroke="#223" stroke-width="1.3"/><circle cx="13" cy="14" r="2" fill="none" stroke="#223" stroke-width="1.3"/></svg>
<div class="t" style="left:2445px;top:643.19px;font-size:12.1px;line-height:16px;font-family:'Liberation Sans',sans-serif;color:#0d0d0d;">Watch and force tables</div>
<div class="a" style="left:2369.5px;top:660.59px;width:233.5px;height:19.01px;background:#efefef"></div>
<div class="a" style="left:2603px;top:660.59px;width:39.5px;height:19.01px;background:#efefef"></div>
<div class="a" style="left:2369.5px;top:678.6px;width:273px;height:1px;background:#fbfbfb"></div>
<svg class="a" style="left:2412.5px;top:665.095px;" width="6" height="10" viewBox="0 0 6 10"><path d="M0 0 V10 L6 5 Z" fill="#000"/></svg>
<svg class="a" style="left:2424.5px;top:662.09px;" width="17" height="16" viewBox="0 0 17 16"><path d="M0.5 2.5 H6 L7.5 4 H15.5 V14.5 H0.5 Z" fill="#f6dc8c" stroke="#c9a23e"/><rect x="1" y="5" width="14" height="9" fill="#fbe9a9"/><rect x="5" y="7" width="7" height="7" fill="#3a5ad8"/><circle cx="13" cy="13" r="3.5" fill="#f06a2a"/></svg>
<div class="t" style="left:2445px;top:662.20px;font-size:12.1px;line-height:16px;font-family:'Liberation Sans',sans-serif;color:#0d0d0d;">Online backups</div>
<div class="a" style="left:2369.5px;top:679.6px;width:233.5px;height:19.01px;background:#efefef"></div>
<div class="a" style="left:2603px;top:679.6px;width:39.5px;height:19.01px;background:#efefef"></div>
<div class="a" style="left:2369.5px;top:697.61px;width:273px;height:1px;background:#fbfbfb"></div>
<svg class="a" style="left:2412.5px;top:684.105px;" width="6" height="10" viewBox="0 0 6 10"><path d="M0 0 V10 L6 5 Z" fill="#000"/></svg>
<svg class="a" style="left:2424.5px;top:681.1px;" width="17" height="16" viewBox="0 0 17 16"><path d="M0.5 2.5 H6 L7.5 4 H15.5 V14.5 H0.5 Z" fill="#f6dc8c" stroke="#c9a23e"/><rect x="1" y="5" width="14" height="9" fill="#fbe9a9"/><rect x="6" y="6" width="9" height="10" fill="#3d4450"/><rect x="8" y="8" width="2" height="6" fill="#aaa"/></svg>
<div class="t" style="left:2445px;top:681.21px;font-size:12.1px;line-height:16px;font-family:'Liberation Sans',sans-serif;color:#0d0d0d;">Device proxy data</div>
<div class="a" style="left:2369.5px;top:698.61px;width:233.5px;height:19.01px;background:#efefef"></div>
<div class="a" style="left:2603px;top:698.61px;width:39.5px;height:19.01px;background:#efefef"></div>
<div class="a" style="left:2369.5px;top:716.62px;width:273px;height:1px;background:#fbfbfb"></div>
<svg class="a" style="left:2424.5px;top:700.11px;" width="17" height="16" viewBox="0 0 17 16"><rect x="0.5" y="0.5" width="13" height="11" fill="#fff" stroke="#3a4ab0"/><path d="M3 3 V9 M7 3 V9" stroke="#223"/><rect x="12" y="6" width="3" height="10" fill="#111"/></svg>
<div class="t" style="left:2445px;top:700.22px;font-size:12.1px;line-height:16px;font-family:'Liberation Sans',sans-serif;color:#0d0d0d;">Program info</div>
<div class="a" style="left:2369.5px;top:717.62px;width:233.5px;height:19.01px;background:#efefef"></div>
<div class="a" style="left:2603px;top:717.62px;width:39.5px;height:19.01px;background:#efefef"></div>
<div class="a" style="left:2369.5px;top:735.63px;width:273px;height:1px;background:#fbfbfb"></div>
<svg class="a" style="left:2424.5px;top:719.12px;" width="17" height="16" viewBox="0 0 17 16"><rect x="3" y="0.5" width="11" height="15" fill="#fff" stroke="#4a5ad0"/><path d="M5 4 H12 M5 7 H12 M5 10 H12 M5 13 H10" stroke="#223"/></svg>
<div class="t" style="left:2445px;top:719.23px;font-size:12.1px;line-height:16px;font-family:'Liberation Sans',sans-serif;color:#0d0d0d;">PLC alarm text lists</div>
<div class="a" style="left:2369.5px;top:736.63px;width:233.5px;height:19.01px;background:#efefef"></div>
<div class="a" style="left:2603px;top:736.63px;width:39.5px;height:19.01px;background:#efefef"></div>
<div class="a" style="left:2369.5px;top:754.64px;width:273px;height:1px;background:#fbfbfb"></div>
<svg class="a" style="left:2412.5px;top:741.135px;" width="6" height="10" viewBox="0 0 6 10"><path d="M0 0 V10 L6 5 Z" fill="#000"/></svg>
<svg class="a" style="left:2424.5px;top:738.13px;" width="17" height="16" viewBox="0 0 17 16"><path d="M0.5 2.5 H6 L7.5 4 H15.5 V14.5 H0.5 Z" fill="#f6dc8c" stroke="#c9a23e"/><rect x="1" y="5" width="14" height="9" fill="#fbe9a9"/><rect x="6" y="6" width="9" height="10" fill="#3d4450"/><rect x="7" y="7" width="3" height="8" fill="#31c5e0"/></svg>
<div class="t" style="left:2445px;top:738.24px;font-size:12.1px;line-height:16px;font-family:'Liberation Sans',sans-serif;color:#0d0d0d;">Local modules</div>
<div class="a" style="left:2607px;top:739.135px;width:14px;height:14px;background:#1fa12f;border:1px solid #187a24"></div>
<svg class="a" style="left:2607px;top:739.135px;" width="14" height="14" viewBox="0 0 14 14"><path d="M2.5 7 L5.8 10.5 L11.5 3.5" fill="none" stroke="#fff" stroke-width="2.2"/></svg>
<div class="a" style="left:2369.5px;top:755.64px;width:233.5px;height:19.01px;background:#dedede"></div>
<div class="a" style="left:2603px;top:755.64px;width:39.5px;height:19.01px;background:#dedede"></div>
<div class="a" style="left:2369.5px;top:773.65px;width:273px;height:1px;background:#fbfbfb"></div>
<svg class="a" style="left:2394.5px;top:760.145px;" width="6" height="10" viewBox="0 0 6 10"><path d="M0 0 V10 L6 5 Z" fill="#000"/></svg>
<svg class="a" style="left:2406.5px;top:757.14px;" width="17" height="16" viewBox="0 0 17 16"><path d="M0.5 2.5 H6 L7.5 4 H15.5 V14.5 H0.5 Z" fill="#f6dc8c" stroke="#c9a23e"/><rect x="1" y="5" width="14" height="9" fill="#fbe9a9"/><path d="M4 9 H14 V12 H4 Z" fill="#31b5e0"/><path d="M5 12 V15 M13 12 V15" stroke="#234"/></svg>
<div class="t" style="left:2427px;top:757.25px;font-size:12.1px;line-height:16px;font-family:'Liberation Sans',sans-serif;color:#0d0d0d;font-weight:bold;letter-spacing:-0.75px;">Ungrouped devices</div>
<div class="a" style="left:2369.5px;top:774.6500000000001px;width:233.5px;height:19.01px;background:#dedede"></div>
<div class="a" style="left:2603px;top:774.6500000000001px;width:39.5px;height:19.01px;background:#dedede"></div>
<div class="a" style="left:2369.5px;top:792.6600000000001px;width:273px;height:1px;background:#fbfbfb"></div>
<svg class="a" style="left:2394.5px;top:779.1550000000001px;" width="6" height="10" viewBox="0 0 6 10"><path d="M0 0 V10 L6 5 Z" fill="#000"/></svg>
<svg class="a" style="left:2406.5px;top:776.1500000000001px;" width="17" height="16" viewBox="0 0 17 16"><path d="M0.5 2.5 H6 L7.5 4 H15.5 V14.5 H0.5 Z" fill="#f6dc8c" stroke="#c9a23e"/><rect x="1" y="5" width="14" height="9" fill="#fbe9a9"/><rect x="3" y="5" width="9" height="7" fill="#c0392b"/><path d="M3 8.5 H12 M7 5 V12" stroke="#fff"/><circle cx="13" cy="13" r="3.5" fill="#2a8ae0"/></svg>
<div class="t" style="left:2427px;top:776.26px;font-size:12.1px;line-height:16px;font-family:'Liberation Sans',sans-serif;color:#0d0d0d;">Security settings</div>
<div class="a" style="left:2369.5px;top:793.6600000000001px;width:233.5px;height:19.01px;background:#dedede"></div>
<div class="a" style="left:2603px;top:793.6600000000001px;width:39.5px;height:19.01px;background:#dedede"></div>
<div class="a" style="left:2369.5px;top:811.6700000000001px;width:273px;height:1px;background:#fbfbfb"></div>
<svg class="a" style="left:2394.5px;top:798.1650000000001px;" width="6" height="10" viewBox="0 0 6 10"><path d="M0 0 V10 L6 5 Z" fill="#000"/></svg>
<svg class="a" style="left:2406.5px;top:795.1600000000001px;" width="17" height="16" viewBox="0 0 17 16"><path d="M0.5 2.5 H6 L7.5 4 H15.5 V14.5 H0.5 Z" fill="#f6dc8c" stroke="#c9a23e"/><rect x="1" y="5" width="14" height="9" fill="#fbe9a9"/><path d="M5 7 L13 15 M13 7 L5 15" stroke="#112" stroke-width="1.6"/><rect x="2" y="11" width="3" height="5" fill="#31b5e0"/><rect x="13" y="3" width="3" height="5" fill="#31b5e0"/></svg>
<div class="t" style="left:2427px;top:795.27px;font-size:12.1px;line-height:16px;font-family:'Liberation Sans',sans-serif;color:#0d0d0d;">Cross-device functions</div>
<div class="a" style="left:2369.5px;top:812.6700000000001px;width:233.5px;height:19.01px;background:#dedede"></div>
<div class="a" style="left:2603px;top:812.6700000000001px;width:39.5px;height:19.01px;background:#dedede"></div>
<div class="a" style="left:2369.5px;top:830.6800000000001px;width:273px;height:1px;background:#fbfbfb"></div>
<svg class="a" style="left:2394.5px;top:817.1750000000001px;" width="6" height="10" viewBox="0 0 6 10"><path d="M0 0 V10 L6 5 Z" fill="#000"/></svg>
<svg class="a" style="left:2406.5px;top:814.1700000000001px;" width="17" height="16" viewBox="0 0 17 16"><path d="M0.5 2.5 H6 L7.5 4 H15.5 V14.5 H0.5 Z" fill="#f6dc8c" stroke="#c9a23e"/><rect x="1" y="5" width="14" height="9" fill="#fbe9a9"/><rect x="4" y="8" width="7" height="8" rx="2" fill="#3a4ae0"/><circle cx="14" cy="6" r="2" fill="#2a5ab0"/><rect x="12" y="9" width="4" height="7" fill="#2a5ab0"/></svg>
<div class="t" style="left:2427px;top:814.28px;font-size:12.1px;line-height:16px;font-family:'Liberation Sans',sans-serif;color:#0d0d0d;">Common data</div>
<div class="a" style="left:2369.5px;top:831.6800000000001px;width:233.5px;height:19.01px;background:#dedede"></div>
<div class="a" style="left:2603px;top:831.6800000000001px;width:39.5px;height:19.01px;background:#dedede"></div>
<div class="a" style="left:2369.5px;top:849.69px;width:273px;height:1px;background:#fbfbfb"></div>
<svg class="a" style="left:2394.5px;top:836.1850000000001px;" width="6" height="10" viewBox="0 0 6 10"><path d="M0 0 V10 L6 5 Z" fill="#000"/></svg>
<svg class="a" style="left:2406.5px;top:833.1800000000001px;" width="17" height="16" viewBox="0 0 17 16"><path d="M0.5 2.5 H6 L7.5 4 H15.5 V14.5 H0.5 Z" fill="#f6dc8c" stroke="#c9a23e"/><rect x="1" y="5" width="14" height="9" fill="#fbe9a9"/><rect x="5" y="5" width="10" height="11" fill="#fff" stroke="#3a4ab0"/><path d="M7 8 H13 M7 11 H13 M7 14 H11" stroke="#223"/></svg>
<div class="t" style="left:2427px;top:833.29px;font-size:12.1px;line-height:16px;font-family:'Liberation Sans',sans-serif;color:#0d0d0d;">Documentation settings</div>
<div class="a" style="left:2369.5px;top:850.69px;width:233.5px;height:19.01px;background:#dedede"></div>
<div class="a" style="left:2603px;top:850.69px;width:39.5px;height:19.01px;background:#dedede"></div>
<div class="a" style="left:2369.5px;top:868.7px;width:273px;height:1px;background:#fbfbfb"></div>
<svg class="a" style="left:2394.5px;top:855.195px;" width="6" height="10" viewBox="0 0 6 10"><path d="M0 0 V10 L6 5 Z" fill="#000"/></svg>
<svg class="a" style="left:2406.5px;top:852.19px;" width="17" height="16" viewBox="0 0 17 16"><path d="M0.5 2.5 H6 L7.5 4 H15.5 V14.5 H0.5 Z" fill="#f6dc8c" stroke="#c9a23e"/><rect x="1" y="5" width="14" height="9" fill="#fbe9a9"/><circle cx="11" cy="11" r="5" fill="#2a8ae0"/><path d="M6 11 H16 M11 6 V16" stroke="#9ad0ff" stroke-width="0.8"/></svg>
<div class="t" style="left:2427px;top:852.30px;font-size:12.1px;line-height:16px;font-family:'Liberation Sans',sans-serif;color:#0d0d0d;">Languages &amp; resources</div>
<div class="a" style="left:2369.5px;top:869.7px;width:233.5px;height:19.01px;background:#dedede"></div>
<div class="a" style="left:2603px;top:869.7px;width:39.5px;height:19.01px;background:#dedede"></div>
<div class="a" style="left:2369.5px;top:887.71px;width:273px;height:1px;background:#fbfbfb"></div>
<svg class="a" style="left:2394.5px;top:874.205px;" width="6" height="10" viewBox="0 0 6 10"><path d="M0 0 V10 L6 5 Z" fill="#000"/></svg>
<svg class="a" style="left:2406.5px;top:871.2px;" width="17" height="16" viewBox="0 0 17 16"><path d="M0.5 2.5 H6 L7.5 4 H15.5 V14.5 H0.5 Z" fill="#f6dc8c" stroke="#c9a23e"/><rect x="1" y="5" width="14" height="9" fill="#fbe9a9"/><circle cx="11" cy="7" r="2" fill="#2a6ae0"/><circle cx="7" cy="14" r="2" fill="#2a6ae0"/><circle cx="15" cy="14" r="2" fill="#2a6ae0"/><path d="M11 7 L7 14 H15 Z" fill="none" stroke="#2a6ae0"/></svg>
<div class="t" style="left:2427px;top:871.31px;font-size:12.1px;line-height:16px;font-family:'Liberation Sans',sans-serif;color:#0d0d0d;">Version control interface</div>
<div class="a" style="left:2369.5px;top:888.71px;width:233.5px;height:19.01px;background:#dedede"></div>
<div class="a" style="left:2603px;top:888.71px;width:39.5px;height:19.01px;background:#dedede"></div>
<div class="a" style="left:2369.5px;top:906.72px;width:273px;height:1px;background:#fbfbfb"></div>
<svg class="a" style="left:2373.5px;top:895.215px;" width="10" height="6" viewBox="0 0 10 6"><path d="M0 0 H10 L5 6 Z" fill="#000"/></svg>
<svg class="a" style="left:2388.5px;top:890.21px;" width="17" height="16" viewBox="0 0 17 16"><path d="M0.5 2.5 H6 L7.5 4 H15.5 V14.5 H0.5 Z" fill="#f6dc8c" stroke="#c9a23e"/><rect x="1" y="5" width="14" height="9" fill="#fbe9a9"/><rect x="5" y="9" width="11" height="6" fill="#1c8a3c"/><path d="M6 15 V17 M9 15 V17 M12 15 V17 M15 15 V17" stroke="#1c8a3c"/></svg>
<div class="t" style="left:2409px;top:890.32px;font-size:12.1px;line-height:16px;font-family:'Liberation Sans',sans-serif;color:#0d0d0d;">Online access</div>
<div class="a" style="left:2369.5px;top:907.72px;width:233.5px;height:19.01px;background:#efefef"></div>
<div class="a" style="left:2603px;top:907.72px;width:39.5px;height:19.01px;background:#efefef"></div>
<div class="a" style="left:2369.5px;top:925.73px;width:273px;height:1px;background:#fbfbfb"></div>
<svg class="a" style="left:2406.5px;top:909.22px;" width="17" height="16" viewBox="0 0 17 16"><path d="M8.5 6 V16" stroke="#1a3ab0" stroke-width="3"/><path d="M4 0 C4 6 13 6 13 0" fill="none" stroke="#1a3ab0" stroke-width="2.5"/></svg>
<div class="t" style="left:2427px;top:909.33px;font-size:12.1px;line-height:16px;font-family:'Liberation Sans',sans-serif;color:#0d0d0d;">Display/hide interfaces</div>
<div class="a" style="left:2369.5px;top:926.73px;width:233.5px;height:19.01px;background:#efefef"></div>
<div class="a" style="left:2603px;top:926.73px;width:39.5px;height:19.01px;background:#efefef"></div>
<div class="a" style="left:2369.5px;top:944.74px;width:273px;height:1px;background:#fbfbfb"></div>
<svg class="a" style="left:2394.5px;top:931.235px;" width="6" height="10" viewBox="0 0 6 10"><path d="M0 0 V10 L6 5 Z" fill="#000"/></svg>
<svg class="a" style="left:2406.5px;top:928.23px;" width="17" height="16" viewBox="0 0 17 16"><path d="M0.5 2.5 H6 L7.5 4 H15.5 V14.5 H0.5 Z" fill="#f6dc8c" stroke="#c9a23e"/><rect x="1" y="5" width="14" height="9" fill="#fbe9a9"/><rect x="9" y="6" width="5" height="10" fill="#2a95c8" stroke="#234" stroke-width="0.6"/></svg>
<div class="t" style="left:2427px;top:928.34px;font-size:12.1px;line-height:16px;font-family:'Liberation Sans',sans-serif;color:#0d0d0d;">COM [RS232/PPI multi-master c...</div>
<svg class="a" style="left:2606px;top:928.235px;" width="18" height="16" viewBox="0 0 18 16"><path d="M1 1 V15" stroke="#333" stroke-width="1.2"/><rect x="2" y="3" width="14" height="8" fill="#1c8a3c"/><path d="M3 11 V14 M6 11 V14 M9 11 V14 M12 11 V14 M15 11 V14" stroke="#1c8a3c" stroke-width="1.2"/></svg>
<div class="t" style="left:2616px;top:932.42px;font-size:11px;line-height:14px;font-family:'Liberation Sans',sans-serif;color:#111;font-weight:bold">?</div>
<div class="a" style="left:2369.5px;top:945.74px;width:233.5px;height:19.01px;background:#efefef"></div>
<div class="a" style="left:2603px;top:945.74px;width:39.5px;height:19.01px;background:#efefef"></div>
<div class="a" style="left:2369.5px;top:963.75px;width:273px;height:1px;background:#fbfbfb"></div>
<svg class="a" style="left:2391.5px;top:952.245px;" width="10" height="6" viewBox="0 0 10 6"><path d="M0 0 H10 L5 6 Z" fill="#000"/></svg>
<svg class="a" style="left:2406.5px;top:947.24px;" width="17" height="16" viewBox="0 0 17 16"><path d="M0.5 2.5 H6 L7.5 4 H15.5 V14.5 H0.5 Z" fill="#f6dc8c" stroke="#c9a23e"/><rect x="1" y="5" width="14" height="9" fill="#fbe9a9"/><rect x="9" y="6" width="5" height="10" fill="#2a95c8" stroke="#234" stroke-width="0.6"/></svg>
<div class="t" style="left:2427px;top:947.35px;font-size:12.1px;line-height:16px;font-family:'Liberation Sans',sans-serif;color:#0d0d0d;font-weight:bold;letter-spacing:-0.75px;">Realtek PCIe GBE Family Con...</div>
<svg class="a" style="left:2606px;top:947.245px;" width="18" height="16" viewBox="0 0 18 16"><path d="M1 1 V15" stroke="#333" stroke-width="1.2"/><rect x="2" y="3" width="14" height="8" fill="#f0a81a"/><path d="M3 11 V14 M6 11 V14 M9 11 V14 M12 11 V14 M15 11 V14" stroke="#f0a81a" stroke-width="1.2"/></svg>
<div class="a" style="left:2369.5px;top:964.75px;width:233.5px;height:19.01px;background:#efefef"></div>
<div class="a" style="left:2603px;top:964.75px;width:39.5px;height:19.01px;background:#efefef"></div>
<div class="a" style="left:2369.5px;top:982.76px;width:273px;height:1px;background:#fbfbfb"></div>
<svg class="a" style="left:2424.5px;top:966.25px;" width="17" height="16" viewBox="0 0 17 16"><rect x="6" y="0" width="5" height="5" fill="#31b5e0" stroke="#234"/><path d="M8.5 5 V8 M3 8 H14 M3 8 V10 M8.5 8 V10 M14 8 V10" stroke="#234"/><rect x="1" y="10" width="4" height="5" fill="#31b5e0" stroke="#234"/><rect x="6.5" y="10" width="4" height="5" fill="#31b5e0" stroke="#234"/><rect x="12" y="10" width="4" height="5" fill="#31b5e0" stroke="#234"/></svg>
<div class="t" style="left:2445px;top:966.36px;font-size:12.1px;line-height:16px;font-family:'Liberation Sans',sans-serif;color:#0d0d0d;">Update accessible devices</div>
<div class="a" style="left:2369.5px;top:983.76px;width:233.5px;height:19.01px;background:#efefef"></div>
<div class="a" style="left:2603px;top:983.76px;width:39.5px;height:19.01px;background:#efefef"></div>
<div class="a" style="left:2369.5px;top:1001.77px;width:273px;height:1px;background:#fbfbfb"></div>
<svg class="a" style="left:2424.5px;top:985.26px;" width="17" height="16" viewBox="0 0 17 16"><rect x="2" y="0.5" width="13" height="15" fill="#f6f6ff" stroke="#4a5ad0"/><path d="M5 2 V8 C5 11 11 11 11 8 V2" fill="none" stroke="#112" stroke-width="1.4"/><circle cx="11" cy="12" r="1.8" fill="#112"/></svg>
<div class="t" style="left:2445px;top:985.37px;font-size:12.1px;line-height:16px;font-family:'Liberation Sans',sans-serif;color:#0d0d0d;">Display more information</div>
<div class="a" style="left:2369.5px;top:1002.77px;width:233.5px;height:19.01px;background:#efefef"></div>
<div class="a" style="left:2603px;top:1002.77px;width:39.5px;height:19.01px;background:#efefef"></div>
<div class="a" style="left:2369.5px;top:1020.78px;width:273px;height:1px;background:#fbfbfb"></div>
<svg class="a" style="left:2394.5px;top:1007.275px;" width="6" height="10" viewBox="0 0 6 10"><path d="M0 0 V10 L6 5 Z" fill="#000"/></svg>
<svg class="a" style="left:2406.5px;top:1004.27px;" width="17" height="16" viewBox="0 0 17 16"><path d="M0.5 2.5 H6 L7.5 4 H15.5 V14.5 H0.5 Z" fill="#f6dc8c" stroke="#c9a23e"/><rect x="1" y="5" width="14" height="9" fill="#fbe9a9"/><rect x="9" y="6" width="5" height="10" fill="#2a95c8" stroke="#234" stroke-width="0.6"/></svg>
<div class="t" style="left:2427px;top:1004.38px;font-size:12.1px;line-height:16px;font-family:'Liberation Sans',sans-serif;color:#0d0d0d;">Hyper-V Virtual Ethernet Adapter</div>
<svg class="a" style="left:2606px;top:1004.275px;" width="18" height="16" viewBox="0 0 18 16"><path d="M1 1 V15" stroke="#333" stroke-width="1.2"/><rect x="2" y="3" width="14" height="8" fill="#1c8a3c"/><path d="M3 11 V14 M6 11 V14 M9 11 V14 M12 11 V14 M15 11 V14" stroke="#1c8a3c" stroke-width="1.2"/></svg>
<div class="a" style="left:2369.5px;top:1021.7800000000001px;width:233.5px;height:19.01px;background:#efefef"></div>
<div class="a" style="left:2603px;top:1021.7800000000001px;width:39.5px;height:19.01px;background:#efefef"></div>
<div class="a" style="left:2369.5px;top:1039.7900000000002px;width:273px;height:1px;background:#fbfbfb"></div>
<svg class="a" style="left:2394.5px;top:1026.285px;" width="6" height="10" viewBox="0 0 6 10"><path d="M0 0 V10 L6 5 Z" fill="#000"/></svg>
<svg class="a" style="left:2406.5px;top:1023.2800000000001px;" width="17" height="16" viewBox="0 0 17 16"><path d="M0.5 2.5 H6 L7.5 4 H15.5 V14.5 H0.5 Z" fill="#f6dc8c" stroke="#c9a23e"/><rect x="1" y="5" width="14" height="9" fill="#fbe9a9"/><rect x="9" y="6" width="5" height="10" fill="#2a95c8" stroke="#234" stroke-width="0.6"/></svg>
<div class="t" style="left:2427px;top:1023.39px;font-size:12.1px;line-height:16px;font-family:'Liberation Sans',sans-serif;color:#0d0d0d;">PC internal [Local]</div>
<svg class="a" style="left:2606px;top:1023.2850000000001px;" width="18" height="16" viewBox="0 0 18 16"><path d="M1 1 V15" stroke="#333" stroke-width="1.2"/><rect x="2" y="3" width="14" height="8" fill="#1c8a3c"/><path d="M3 11 V14 M6 11 V14 M9 11 V14 M12 11 V14 M15 11 V14" stroke="#1c8a3c" stroke-width="1.2"/></svg>
<div class="a" style="left:2369.5px;top:1040.79px;width:233.5px;height:19.01px;background:#efefef"></div>
<div class="a" style="left:2603px;top:1040.79px;width:39.5px;height:19.01px;background:#efefef"></div>
<div class="a" style="left:2369.5px;top:1058.8px;width:273px;height:1px;background:#fbfbfb"></div>
<svg class="a" style="left:2394.5px;top:1045.295px;" width="6" height="10" viewBox="0 0 6 10"><path d="M0 0 V10 L6 5 Z" fill="#000"/></svg>
<svg class="a" style="left:2406.5px;top:1042.29px;" width="17" height="16" viewBox="0 0 17 16"><path d="M0.5 2.5 H6 L7.5 4 H15.5 V14.5 H0.5 Z" fill="#f6dc8c" stroke="#c9a23e"/><rect x="1" y="5" width="14" height="9" fill="#fbe9a9"/><rect x="9" y="6" width="5" height="10" fill="#2a95c8" stroke="#234" stroke-width="0.6"/></svg>
<div class="t" style="left:2427px;top:1042.40px;font-size:12.1px;line-height:16px;font-family:'Liberation Sans',sans-serif;color:#0d0d0d;">PLCSIM [PN/IE]</div>
<svg class="a" style="left:2606px;top:1042.295px;" width="18" height="16" viewBox="0 0 18 16"><path d="M1 1 V15" stroke="#333" stroke-width="1.2"/><rect x="2" y="3" width="14" height="8" fill="#1c8a3c"/><path d="M3 11 V14 M6 11 V14 M9 11 V14 M12 11 V14 M15 11 V14" stroke="#1c8a3c" stroke-width="1.2"/></svg>
<svg class="a" style="left:2605px;top:1042.295px;" width="8" height="12" viewBox="0 0 8 12"><path d="M1 1 L7 11 M7 1 L1 11" stroke="#111" stroke-width="1.3"/></svg>
<div class="a" style="left:2369.5px;top:1059.8000000000002px;width:233.5px;height:19.01px;background:#efefef"></div>
<div class="a" style="left:2603px;top:1059.8000000000002px;width:39.5px;height:19.01px;background:#efefef"></div>
<div class="a" style="left:2369.5px;top:1077.8100000000002px;width:273px;height:1px;background:#fbfbfb"></div>
<svg class="a" style="left:2394.5px;top:1064.3050000000003px;" width="6" height="10" viewBox="0 0 6 10"><path d="M0 0 V10 L6 5 Z" fill="#000"/></svg>
<svg class="a" style="left:2406.5px;top:1061.3000000000002px;" width="17" height="16" viewBox="0 0 17 16"><path d="M0.5 2.5 H6 L7.5 4 H15.5 V14.5 H0.5 Z" fill="#f6dc8c" stroke="#c9a23e"/><rect x="1" y="5" width="14" height="9" fill="#fbe9a9"/><rect x="9" y="6" width="5" height="10" fill="#2a95c8" stroke="#234" stroke-width="0.6"/></svg>
<div class="t" style="left:2427px;top:1061.41px;font-size:12.1px;line-height:16px;font-family:'Liberation Sans',sans-serif;color:#0d0d0d;">USB [S7USB]</div>
<svg class="a" style="left:2606px;top:1061.3050000000003px;" width="18" height="16" viewBox="0 0 18 16"><path d="M1 1 V15" stroke="#333" stroke-width="1.2"/><rect x="2" y="3" width="14" height="8" fill="#1c8a3c"/><path d="M3 11 V14 M6 11 V14 M9 11 V14 M12 11 V14 M15 11 V14" stroke="#1c8a3c" stroke-width="1.2"/></svg>
<div class="a" style="left:2369.5px;top:1078.81px;width:233.5px;height:19.01px;background:#efefef"></div>
<div class="a" style="left:2603px;top:1078.81px;width:39.5px;height:19.01px;background:#efefef"></div>
<div class="a" style="left:2369.5px;top:1096.82px;width:273px;height:1px;background:#fbfbfb"></div>
<svg class="a" style="left:2394.5px;top:1083.315px;" width="6" height="10" viewBox="0 0 6 10"><path d="M0 0 V10 L6 5 Z" fill="#000"/></svg>
<svg class="a" style="left:2406.5px;top:1080.31px;" width="17" height="16" viewBox="0 0 17 16"><path d="M0.5 2.5 H6 L7.5 4 H15.5 V14.5 H0.5 Z" fill="#f6dc8c" stroke="#c9a23e"/><rect x="1" y="5" width="14" height="9" fill="#fbe9a9"/><rect x="9" y="6" width="5" height="10" fill="#2a95c8" stroke="#234" stroke-width="0.6"/></svg>
<div class="t" style="left:2427px;top:1080.42px;font-size:12.1px;line-height:16px;font-family:'Liberation Sans',sans-serif;color:#0d0d0d;">TeleService [Automatic protoco...</div>
<svg class="a" style="left:2606px;top:1080.315px;" width="18" height="16" viewBox="0 0 18 16"><path d="M1 1 V15" stroke="#333" stroke-width="1.2"/><rect x="2" y="3" width="14" height="8" fill="#1c8a3c"/><path d="M3 11 V14 M6 11 V14 M9 11 V14 M12 11 V14 M15 11 V14" stroke="#1c8a3c" stroke-width="1.2"/></svg>
<div class="a" style="left:2369.5px;top:1097.8200000000002px;width:233.5px;height:19.01px;background:#dedede"></div>
<div class="a" style="left:2603px;top:1097.8200000000002px;width:39.5px;height:19.01px;background:#dedede"></div>
<div class="a" style="left:2369.5px;top:1115.8300000000002px;width:273px;height:1px;background:#fbfbfb"></div>
<svg class="a" style="left:2376.5px;top:1102.3250000000003px;" width="6" height="10" viewBox="0 0 6 10"><path d="M0 0 V10 L6 5 Z" fill="#000"/></svg>
<svg class="a" style="left:2388.5px;top:1099.3200000000002px;" width="17" height="16" viewBox="0 0 17 16"><path d="M0.5 2.5 H6 L7.5 4 H15.5 V14.5 H0.5 Z" fill="#f6dc8c" stroke="#c9a23e"/><rect x="5" y="7" width="10" height="8" fill="#3a70c8"/><rect x="7" y="9" width="6" height="3" fill="#e6e6e6"/></svg>
<div class="t" style="left:2409px;top:1099.43px;font-size:12.1px;line-height:16px;font-family:'Liberation Sans',sans-serif;color:#0d0d0d;">Card Reader/USB memory</div>
<div class="a" style="left:2369.5px;top:1116.83px;width:233.5px;height:19.01px;background:#efefef"></div>
<div class="a" style="left:2603px;top:1116.83px;width:39.5px;height:19.01px;background:#efefef"></div>
<div class="a" style="left:2369.5px;top:1134.84px;width:273px;height:1px;background:#fbfbfb"></div>
<div class="a" style="left:2369.5px;top:1135.8400000000001px;width:233.5px;height:12.659999999999854px;background:#efefef"></div>
<div class="a" style="left:2603px;top:1135.8400000000001px;width:39.5px;height:12.659999999999854px;background:#efefef"></div>
<div class="a" style="left:2369.5px;top:1153.8500000000001px;width:273px;height:1px;background:#fbfbfb"></div>
<div class="a" style="left:2603px;top:300px;width:1px;height:848px;background:#c9c9c9"></div>
<div class="a" style="left:2622.5px;top:300px;width:1px;height:848px;background:#f6f6f6"></div>
<div class="a" style="left:2641.5px;top:200px;width:1.5px;height:1130px;background:#3a3a3a"></div>
<div class="a" style="left:2369.5px;top:1148.5px;width:273px;height:17px;background:#e4e4e4"></div>
<div class="a" style="left:2372px;top:1149.5px;width:18px;height:15px;background:#f2f2f2;border:1px solid #bdbdbd"></div>
<svg class="a" style="left:2377px;top:1152px;" width="8" height="10" viewBox="0 0 8 10"><path d="M6 1 L2 5 L6 9" fill="none" stroke="#555" stroke-width="1.4"/></svg>
<div class="a" style="left:2390px;top:1149.5px;width:222px;height:15px;background:linear-gradient(#fafafa,#e9e9e9);border:1px solid #b5b5b5"></div>
<svg class="a" style="left:2497px;top:1153px;" width="9" height="9" viewBox="0 0 9 9"><path d="M1 0 V9 M4 0 V9 M7 0 V9" stroke="#666"/></svg>
<div class="a" style="left:2624px;top:1149.5px;width:17px;height:15px;background:#f2f2f2;border:1px solid #bdbdbd"></div>
<svg class="a" style="left:2629px;top:1152px;" width="8" height="10" viewBox="0 0 8 10"><path d="M2 1 L6 5 L2 9" fill="none" stroke="#555" stroke-width="1.4"/></svg>
<div class="a" style="left:2369.5px;top:1165.3px;width:275px;height:3px;background:#262626"></div>
<div class="a" style="left:2369.5px;top:1168.3px;width:273px;height:21.5px;background:#dcdcdc;border-bottom:1px solid #b9b9b9"></div>
<svg class="a" style="left:2374px;top:1175px;" width="12" height="8" viewBox="0 0 12 8"><path d="M1 1 L6 6 L11 1" fill="none" stroke="#222" stroke-width="1.8"/></svg>
<div class="a" style="left:2390px;top:1168.3px;width:1px;height:21.5px;background:#b9b9b9"></div>
<div class="t" style="left:2395.5px;top:1170.68px;font-size:13.9px;line-height:18px;font-family:'Liberation Sans',sans-serif;color:#151515;font-weight:bold">Details view</div>
<div class="a" style="left:2369.5px;top:1190px;width:273px;height:24.5px;background:#cdcdcd"></div>
<div class="a" style="left:2376px;top:1193.5px;width:161px;height:21px;background:linear-gradient(#fcfcfc,#eeeeee);border:1px solid #9a9a9a;border-bottom:none"></div>
<div class="t" style="left:2388px;top:1195.39px;font-size:13.3px;line-height:17px;font-family:'Liberation Sans',sans-serif;color:#111;font-weight:bold">Technology objects</div>
<div class="a" style="left:2369.5px;top:1214.4px;width:273px;height:1px;background:#9a9a9a"></div>
<div class="a" style="left:2369.5px;top:1215.4px;width:273px;height:27.2px;background:#efefef"></div>
<div class="a" style="left:2369.5px;top:1242.6px;width:273px;height:17.5px;background:linear-gradient(#f6f6f6,#dedede);border-top:1px solid #c8c8c8;border-bottom:1px solid #c0c0c0"></div>
<div class="a" style="left:2388px;top:1242.6px;width:1px;height:17.5px;background:#c0c0c0"></div>
<div class="a" style="left:2548px;top:1242.6px;width:1px;height:17.5px;background:#c0c0c0"></div>
<div class="a" style="left:2628px;top:1242.6px;width:1px;height:17.5px;background:#c0c0c0"></div>
<div class="t" style="left:2392px;top:1244.58px;font-size:11.3px;line-height:15px;font-family:'Liberation Sans',sans-serif;color:#222">Name</div>
<div class="t" style="left:2552px;top:1244.58px;font-size:11.3px;line-height:15px;font-family:'Liberation Sans',sans-serif;color:#222">Address</div>
<div class="t" style="left:2633px;top:1244.58px;font-size:11.3px;line-height:15px;font-family:'Liberation Sans',sans-serif;color:#222">...</div>
<div class="a" style="left:2369.5px;top:1260px;width:273px;height:19px;background:#efefef;border-bottom:1px solid #fbfbfb"></div>
<div class="a" style="left:2369.5px;top:1279px;width:273px;height:19px;background:#efefef;border-bottom:1px solid #fbfbfb"></div>
<div class="a" style="left:2369.5px;top:1298px;width:273px;height:19px;background:#efefef;border-bottom:1px solid #fbfbfb"></div>
<div class="a" style="left:2369.5px;top:1317px;width:273px;height:19px;background:#efefef;border-bottom:1px solid #fbfbfb"></div>
<div class="a" style="left:2645.5px;top:200.4px;width:548.5px;height:26.1px;background:#ffa000"></div>
<div class="t" style="left:2651px;top:203.59px;font-size:13.3px;line-height:17px;font-family:'Liberation Sans',sans-serif;color:#fff">Stacklight_PLC</div>
<div class="t" style="left:2770.4px;top:203.59px;font-size:13.3px;line-height:17px;font-family:'Liberation Sans',sans-serif;color:#fff">PLC_1 [CPU  1212C AC/DC/Rly]</div>
<div class="t" style="left:2984px;top:203.59px;font-size:13.3px;line-height:17px;font-family:'Liberation Sans',sans-serif;color:#fff">Program blocks</div>
<div class="t" style="left:3107px;top:203.59px;font-size:13.3px;line-height:17px;font-family:'Liberation Sans',sans-serif;color:#fff">Stacklight_Control</div>
<svg class="a" style="left:2755px;top:208px;" width="6" height="10" viewBox="0 0 6 10"><path d="M0 0 V10 L6 5 Z" fill="#fff"/></svg>
<svg class="a" style="left:2969px;top:208px;" width="6" height="10" viewBox="0 0 6 10"><path d="M0 0 V10 L6 5 Z" fill="#fff"/></svg>
<svg class="a" style="left:3092px;top:208px;" width="6" height="10" viewBox="0 0 6 10"><path d="M0 0 V10 L6 5 Z" fill="#fff"/></svg>
<div class="a" style="left:2645.5px;top:226.5px;width:548.5px;height:24.5px;background:#cdcdcd"></div>
<div class="a" style="left:2645.5px;top:251px;width:548.5px;height:1px;background:#8a8a8a"></div>
<div class="a" style="left:2645.5px;top:252px;width:548.5px;height:27px;background:#ececec"></div>
<svg class="a" style="left:2652.4px;top:258px;" width="18" height="16" viewBox="0 0 18 16"><path d="M1 10 V15 M4 12 H8 M1 12.5 L4 10 M1 12.5 L4 15 M8 10 V15 M11 10 V15" stroke="#2a3ad8" stroke-width="1.8"/><path d="M10 0 L11 3 L14 3 L11.5 5 L12.5 8 L10 6 L7.5 8 L8.5 5 L6 3 L9 3 Z" fill="#ffe23a"/></svg>
<svg class="a" style="left:2676.5px;top:258px;" width="18" height="16" viewBox="0 0 18 16"><path d="M1 10 V15 M4 12 H8 M8 10 V15 M11 10 V15" stroke="#2a3ad8" stroke-width="1.8"/><path d="M8 1 L14 7 M14 1 L8 7" stroke="#111" stroke-width="1.8"/></svg>
<svg class="a" style="left:2700.7px;top:258px;" width="18" height="16" viewBox="0 0 18 16"><path d="M1 8 H10 M1 11 H11 M2 14 H12" stroke="#a6a6a6" stroke-width="2"/><circle cx="13" cy="5" r="3" fill="none" stroke="#bbb" stroke-dasharray="1 1"/></svg>
<svg class="a" style="left:2724.8px;top:258px;" width="18" height="16" viewBox="0 0 18 16"><path d="M1 8 H10 M1 11 H11 M2 14 H12" stroke="#a6a6a6" stroke-width="2"/><circle cx="13" cy="5" r="3" fill="none" stroke="#bbb" stroke-dasharray="1 1"/></svg>
<svg class="a" style="left:2753.5px;top:258px;" width="18" height="16" viewBox="0 0 18 16"><rect x="1" y="2" width="8" height="11" rx="4" fill="#9a9a9a"/><path d="M12 10 C12 7 17 7 17 11 L17 14" fill="none" stroke="#777" stroke-width="1.5"/></svg>
<svg class="a" style="left:2782.8px;top:258px;" width="18" height="16" viewBox="0 0 18 16"><path d="M1 3 H10 M1 7 H17 M1 11 H17 M1 15 H17" stroke="#8a8a8a" stroke-width="2"/></svg>
<svg class="a" style="left:2807px;top:258px;" width="18" height="16" viewBox="0 0 18 16"><rect x="1" y="1" width="16" height="14" fill="#fff" stroke="#2a4ae0" stroke-width="1.5"/><rect x="1" y="1" width="16" height="4" fill="#3a6af0"/><path d="M3 10 H15" stroke="#2a3a90" stroke-width="1.5"/></svg>
<svg class="a" style="left:2830.7px;top:258px;" width="18" height="16" viewBox="0 0 18 16"><rect x="1" y="3" width="16" height="11" fill="#2a4ae0"/><path d="M3 8 H15" stroke="#fff"/></svg>
<svg class="a" style="left:2852.4px;top:255px;" width="20" height="21" viewBox="0 0 20 21"><rect x="0.5" y="0.5" width="19" height="20" fill="#fff" stroke="#4a6ad8"/><ellipse cx="10" cy="9" rx="7" ry="5" fill="#eef" stroke="#2a4ae0" stroke-width="1.5"/><path d="M7 9 H8 M10 9 H11 M13 9 H14" stroke="#112" stroke-width="1.5"/></svg>
<svg class="a" style="left:2878px;top:258px;" width="18" height="16" viewBox="0 0 18 16"><path d="M4 2 H16 V7 H4 L1 4.5 Z" fill="#3a2ac0"/><path d="M4 9 H16 V14 H4 L1 11.5 Z" fill="#3a2ac0"/><path d="M7 4.5 H14 M7 11.5 H14" stroke="#fff"/></svg>
<svg class="a" style="left:2897.6px;top:258px;" width="10" height="16" viewBox="0 0 10 16"><path d="M5 2 V10 M2 7 L5 11 L8 7 M1 14 H9" stroke="#111" stroke-width="2" fill="none"/></svg>
<svg class="a" style="left:2913px;top:258px;" width="18" height="16" viewBox="0 0 18 16"><path d="M4 2 H16 V7 H4 L1 4.5 Z" fill="#3a2ac0"/><path d="M4 9 H16 V14 H4 L1 11.5 Z" fill="#3a2ac0"/><path d="M7 4.5 H14 M7 11.5 H14" stroke="#fff"/></svg>
<svg class="a" style="left:2932.8px;top:258px;" width="10" height="16" viewBox="0 0 10 16"><path d="M5 2 V10 M2 7 L5 11 L8 7 M1 14 H9" stroke="#111" stroke-width="2" fill="none"/></svg>
<svg class="a" style="left:2947.5px;top:258px;" width="18" height="16" viewBox="0 0 18 16"><path d="M4 2 H16 V7 H4 L1 4.5 Z" fill="#3a2ac0"/><path d="M4 9 H16 V14 H4 L1 11.5 Z" fill="#3a2ac0"/><path d="M7 4.5 H14 M7 11.5 H14" stroke="#fff"/></svg>
<svg class="a" style="left:2968px;top:258px;" width="10" height="16" viewBox="0 0 10 16"><path d="M5 2 V10 M2 7 L5 11 L8 7 M1 14 H9" stroke="#111" stroke-width="2" fill="none"/></svg>
<svg class="a" style="left:2981px;top:255px;" width="21" height="21" viewBox="0 0 21 21"><rect x="0.5" y="0.5" width="20" height="20" fill="#f4f6ff" stroke="#4a6ad8"/><path d="M5 6 H16 M5 10 H16 M5 14 H16" stroke="#112" stroke-width="1.5"/></svg>
<svg class="a" style="left:3005px;top:255px;" width="21" height="21" viewBox="0 0 21 21"><rect x="0.5" y="0.5" width="20" height="20" fill="#f4f6ff" stroke="#4a6ad8"/><path d="M5 6 H16 M5 10 H16 M5 14 H16" stroke="#112" stroke-width="1.5"/></svg>
<svg class="a" style="left:3036px;top:258px;" width="18" height="16" viewBox="0 0 18 16"><path d="M5 15 C1 11 2 5 8 4" fill="none" stroke="#112" stroke-width="2.4"/><path d="M6 1 L10 4 L6 7 Z" fill="#112"/><circle cx="13" cy="5" r="3.8" fill="#e03030"/><path d="M11.5 3.5 L14.5 6.5 M14.5 3.5 L11.5 6.5" stroke="#fff"/></svg>
<svg class="a" style="left:3060.8px;top:258px;" width="18" height="16" viewBox="0 0 18 16"><path d="M6 2 C2 5 2 11 7 13" fill="none" stroke="#112" stroke-width="2.4"/><circle cx="13" cy="12" r="3.8" fill="#e03030"/><path d="M11.5 10.5 L14.5 13.5 M14.5 10.5 L11.5 13.5" stroke="#fff"/></svg>
<svg class="a" style="left:3084px;top:258px;" width="18" height="16" viewBox="0 0 18 16"><rect x="7" y="1" width="10" height="10" fill="#8a8a8a"/><rect x="9" y="6" width="6" height="4" fill="#eee"/><path d="M5 15 C1 11 2 6 7 5" fill="none" stroke="#777" stroke-width="2"/></svg>
<svg class="a" style="left:3108.8px;top:258px;" width="18" height="16" viewBox="0 0 18 16"><rect x="7" y="1" width="10" height="10" fill="#8a8a8a"/><rect x="9" y="6" width="6" height="4" fill="#eee"/><path d="M5 15 C1 11 2 6 7 5" fill="none" stroke="#777" stroke-width="2"/></svg>
<svg class="a" style="left:3132px;top:258px;" width="18" height="16" viewBox="0 0 18 16"><path d="M2 2 H12 L16 6 L12 10 H2 Z" fill="#9a9a9a"/><path d="M5 10 L9 15 L15 8" fill="none" stroke="#8a8a8a" stroke-width="2"/></svg>
<svg class="a" style="left:3161px;top:258px;" width="18" height="16" viewBox="0 0 18 16"><path d="M5 15 C1 11 2 5 8 4" fill="none" stroke="#112" stroke-width="2.4"/><path d="M9 8 H17 M9 11 H17 M9 14 H17" stroke="#3a5ad8" stroke-width="1.8"/></svg>
<svg class="a" style="left:3186px;top:258px;" width="8" height="16" viewBox="0 0 8 16"><path d="M2 1 V9 M2 13 V15" stroke="#111" stroke-width="2"/></svg>
<div class="a" style="left:2746.3px;top:256px;width:1px;height:20px;border-left:1px dotted #a0a0a0"></div>
<div class="a" style="left:2775.7px;top:256px;width:1px;height:20px;border-left:1px dotted #a0a0a0"></div>
<div class="a" style="left:3029.6px;top:256px;width:1px;height:20px;border-left:1px dotted #a0a0a0"></div>
<div class="a" style="left:3154.3px;top:256px;width:1px;height:20px;border-left:1px dotted #a0a0a0"></div>
<div class="a" style="left:2645.5px;top:279px;width:548.5px;height:22px;background:linear-gradient(90deg,#e0e0e0,#e6e6e6)"></div>
<div class="t" style="left:2671.3px;top:280.63px;font-size:13.2px;line-height:17px;font-family:'Liberation Sans',sans-serif;color:#0d0d0d;font-weight:bold">Stacklight_Control</div>
<div class="a" style="left:2645.5px;top:301px;width:548.5px;height:18px;background:linear-gradient(#f4f5f7,#dcdde0);border-top:1px solid #c8c8c8;border-bottom:1px solid #b8b8b8"></div>
<div class="a" style="left:2670.5px;top:301px;width:1px;height:18px;background:#c0c0c0"></div>
<div class="a" style="left:2689.5px;top:301px;width:1px;height:18px;background:#c0c0c0"></div>
<div class="a" style="left:2859.8px;top:301px;width:1px;height:18px;background:#c0c0c0"></div>
<div class="a" style="left:2979.4px;top:301px;width:1px;height:18px;background:#c0c0c0"></div>
<div class="a" style="left:3039.4px;top:301px;width:1px;height:18px;background:#c0c0c0"></div>
<div class="a" style="left:3139.4px;top:301px;width:1px;height:18px;background:#c0c0c0"></div>
<div class="t" style="left:2693px;top:302.95px;font-size:11.7px;line-height:15px;font-family:'Liberation Sans',sans-serif;color:#151515">Name</div>
<div class="t" style="left:2863px;top:302.95px;font-size:11.7px;line-height:15px;font-family:'Liberation Sans',sans-serif;color:#151515">Data type</div>
<div class="t" style="left:2983px;top:302.95px;font-size:11.7px;line-height:15px;font-family:'Liberation Sans',sans-serif;color:#151515">Offset</div>
<div class="t" style="left:3043px;top:302.95px;font-size:11.7px;line-height:15px;font-family:'Liberation Sans',sans-serif;color:#151515">Default value</div>
<div class="t" style="left:3143px;top:302.95px;font-size:11.7px;line-height:15px;font-family:'Liberation Sans',sans-serif;color:#151515">Accessible</div>
<div class="a" style="left:2670.5px;top:319.4px;width:523.5px;height:18.99px;background:#efefef;border-bottom:1px solid #fafafa"></div>
<div class="a" style="left:2979.4px;top:319.4px;width:60px;height:17.99px;background:#e0e0e0"></div>
<div class="a" style="left:2645.5px;top:319.4px;width:25px;height:18.99px;background:#c9c9c9;border-bottom:1px solid #e6e6e6"></div>
<div class="t" style="left:2649px;top:321.13px;font-size:12.3px;line-height:16px;font-family:'Liberation Sans',sans-serif;color:#5a5a5a">6</div>
<div class="a" style="left:2689.5px;top:319.4px;width:1px;height:18.99px;background:#fbfbfb"></div>
<div class="a" style="left:2859.8px;top:319.4px;width:1px;height:18.99px;background:#fbfbfb"></div>
<div class="a" style="left:2979.4px;top:319.4px;width:1px;height:18.99px;background:#fbfbfb"></div>
<div class="a" style="left:3039.4px;top:319.4px;width:1px;height:18.99px;background:#fbfbfb"></div>
<div class="a" style="left:3139.4px;top:319.4px;width:1px;height:18.99px;background:#fbfbfb"></div>
<div class="a" style="left:2694.5px;top:325.895px;width:5.5px;height:5.5px;background:#1a3ad0"></div>
<div class="t" style="left:2731.4px;top:321.13px;font-size:12.3px;line-height:16px;font-family:'Liberation Sans',sans-serif;color:#8a8a8a">&lt;Add new&gt;</div>
<div class="a" style="left:3172px;top:321.895px;width:14px;height:14px;background:linear-gradient(#fafafa,#e6e6e6);border:1px solid #b0b0b0;border-radius:2px"></div>
<div class="a" style="left:2670.5px;top:338.39px;width:523.5px;height:18.99px;background:#e0e0e0;border-bottom:1px solid #fafafa"></div>
<div class="a" style="left:2979.4px;top:338.39px;width:60px;height:17.99px;background:#e0e0e0"></div>
<div class="a" style="left:2645.5px;top:338.39px;width:25px;height:18.99px;background:#c9c9c9;border-bottom:1px solid #e6e6e6"></div>
<div class="t" style="left:2649px;top:340.12px;font-size:12.3px;line-height:16px;font-family:'Liberation Sans',sans-serif;color:#5a5a5a">7</div>
<div class="a" style="left:2689.5px;top:338.39px;width:1px;height:18.99px;background:#fbfbfb"></div>
<div class="a" style="left:2859.8px;top:338.39px;width:1px;height:18.99px;background:#fbfbfb"></div>
<div class="a" style="left:2979.4px;top:338.39px;width:1px;height:18.99px;background:#fbfbfb"></div>
<div class="a" style="left:3039.4px;top:338.39px;width:1px;height:18.99px;background:#fbfbfb"></div>
<div class="a" style="left:3139.4px;top:338.39px;width:1px;height:18.99px;background:#fbfbfb"></div>
<svg class="a" style="left:2673px;top:341.885px;" width="17" height="12" viewBox="0 0 17 12"><path d="M5 1 H16 V11 H5 L1 6 Z" fill="#2a95d8" stroke="#0b5a9a"/><rect x="8" y="3" width="2" height="6" fill="#fff"/><rect x="11.5" y="3" width="2" height="6" fill="#fff"/></svg>
<svg class="a" style="left:2694px;top:344.885px;" width="10" height="6" viewBox="0 0 10 6"><path d="M0 0 H10 L5 6 Z" fill="#000"/></svg>
<div class="t" style="left:2713px;top:340.12px;font-size:12.3px;line-height:16px;font-family:'Liberation Sans',sans-serif;color:#111">Static</div>
<div class="a" style="left:3172px;top:340.885px;width:14px;height:14px;background:linear-gradient(#fafafa,#e6e6e6);border:1px solid #b0b0b0;border-radius:2px"></div>
<div class="a" style="left:2670.5px;top:357.38px;width:523.5px;height:18.99px;background:#efefef;border-bottom:1px solid #fafafa"></div>
<div class="a" style="left:2979.4px;top:357.38px;width:60px;height:17.99px;background:#e0e0e0"></div>
<div class="a" style="left:2645.5px;top:357.38px;width:25px;height:18.99px;background:#c9c9c9;border-bottom:1px solid #e6e6e6"></div>
<div class="t" style="left:2649px;top:359.11px;font-size:12.3px;line-height:16px;font-family:'Liberation Sans',sans-serif;color:#5a5a5a">8</div>
<div class="a" style="left:2689.5px;top:357.38px;width:1px;height:18.99px;background:#fbfbfb"></div>
<div class="a" style="left:2859.8px;top:357.38px;width:1px;height:18.99px;background:#fbfbfb"></div>
<div class="a" style="left:2979.4px;top:357.38px;width:1px;height:18.99px;background:#fbfbfb"></div>
<div class="a" style="left:3039.4px;top:357.38px;width:1px;height:18.99px;background:#fbfbfb"></div>
<div class="a" style="left:3139.4px;top:357.38px;width:1px;height:18.99px;background:#fbfbfb"></div>
<svg class="a" style="left:2673px;top:360.875px;" width="17" height="12" viewBox="0 0 17 12"><path d="M5 1 H16 V11 H5 L1 6 Z" fill="#2a95d8" stroke="#0b5a9a"/><rect x="8" y="3" width="2" height="6" fill="#fff"/><rect x="11.5" y="3" width="2" height="6" fill="#fff"/></svg>
<div class="a" style="left:2694.5px;top:363.875px;width:5.5px;height:5.5px;background:#1a3ad0"></div>
<div class="t" style="left:2731.4px;top:359.11px;font-size:12.3px;line-height:16px;font-family:'Liberation Sans',sans-serif;color:#111">Line4_Red</div>
<div class="t" style="left:2864.3px;top:359.11px;font-size:12.3px;line-height:16px;font-family:'Liberation Sans',sans-serif;color:#111">Bool</div>
<div class="t" style="left:2984px;top:359.11px;font-size:12.3px;line-height:16px;font-family:'Liberation Sans',sans-serif;color:#111">0.0</div>
<div class="t" style="left:3043.9px;top:359.11px;font-size:12.3px;line-height:16px;font-family:'Liberation Sans',sans-serif;color:#8c8c8c">false</div>
<div class="a" style="left:3172px;top:359.875px;width:14px;height:14px;background:linear-gradient(#6ad0ff,#1a8ad8);border:1px solid #1a3a6a;border-radius:2px"></div>
<svg class="a" style="left:3172px;top:359.875px;" width="14" height="14" viewBox="0 0 14 14"><path d="M3 7 L6 10 L11 3" fill="none" stroke="#10205a" stroke-width="2"/></svg>
<div class="a" style="left:2670.5px;top:376.37px;width:523.5px;height:18.99px;background:#efefef;border-bottom:1px solid #fafafa"></div>
<div class="a" style="left:2979.4px;top:376.37px;width:60px;height:17.99px;background:#e0e0e0"></div>
<div class="a" style="left:2645.5px;top:376.37px;width:25px;height:18.99px;background:#c9c9c9;border-bottom:1px solid #e6e6e6"></div>
<div class="t" style="left:2649px;top:378.10px;font-size:12.3px;line-height:16px;font-family:'Liberation Sans',sans-serif;color:#5a5a5a">9</div>
<div class="a" style="left:2689.5px;top:376.37px;width:1px;height:18.99px;background:#fbfbfb"></div>
<div class="a" style="left:2859.8px;top:376.37px;width:1px;height:18.99px;background:#fbfbfb"></div>
<div class="a" style="left:2979.4px;top:376.37px;width:1px;height:18.99px;background:#fbfbfb"></div>
<div class="a" style="left:3039.4px;top:376.37px;width:1px;height:18.99px;background:#fbfbfb"></div>
<div class="a" style="left:3139.4px;top:376.37px;width:1px;height:18.99px;background:#fbfbfb"></div>
<svg class="a" style="left:2673px;top:379.865px;" width="17" height="12" viewBox="0 0 17 12"><path d="M5 1 H16 V11 H5 L1 6 Z" fill="#2a95d8" stroke="#0b5a9a"/><rect x="8" y="3" width="2" height="6" fill="#fff"/><rect x="11.5" y="3" width="2" height="6" fill="#fff"/></svg>
<div class="a" style="left:2694.5px;top:382.865px;width:5.5px;height:5.5px;background:#1a3ad0"></div>
<div class="t" style="left:2731.4px;top:378.10px;font-size:12.3px;line-height:16px;font-family:'Liberation Sans',sans-serif;color:#111">Line4_Yellow</div>
<div class="t" style="left:2864.3px;top:378.10px;font-size:12.3px;line-height:16px;font-family:'Liberation Sans',sans-serif;color:#111">Bool</div>
<div class="t" style="left:2984px;top:378.10px;font-size:12.3px;line-height:16px;font-family:'Liberation Sans',sans-serif;color:#111">0.1</div>
<div class="t" style="left:3043.9px;top:378.10px;font-size:12.3px;line-height:16px;font-family:'Liberation Sans',sans-serif;color:#8c8c8c">false</div>
<div class="a" style="left:3172px;top:378.865px;width:14px;height:14px;background:linear-gradient(#6ad0ff,#1a8ad8);border:1px solid #1a3a6a;border-radius:2px"></div>
<svg class="a" style="left:3172px;top:378.865px;" width="14" height="14" viewBox="0 0 14 14"><path d="M3 7 L6 10 L11 3" fill="none" stroke="#10205a" stroke-width="2"/></svg>
<div class="a" style="left:2670.5px;top:395.35999999999996px;width:523.5px;height:18.99px;background:#efefef;border-bottom:1px solid #fafafa"></div>
<div class="a" style="left:2979.4px;top:395.35999999999996px;width:60px;height:17.99px;background:#e0e0e0"></div>
<div class="a" style="left:2645.5px;top:395.35999999999996px;width:25px;height:18.99px;background:#c9c9c9;border-bottom:1px solid #e6e6e6"></div>
<div class="t" style="left:2649px;top:397.09px;font-size:12.3px;line-height:16px;font-family:'Liberation Sans',sans-serif;color:#5a5a5a">10</div>
<div class="a" style="left:2689.5px;top:395.35999999999996px;width:1px;height:18.99px;background:#fbfbfb"></div>
<div class="a" style="left:2859.8px;top:395.35999999999996px;width:1px;height:18.99px;background:#fbfbfb"></div>
<div class="a" style="left:2979.4px;top:395.35999999999996px;width:1px;height:18.99px;background:#fbfbfb"></div>
<div class="a" style="left:3039.4px;top:395.35999999999996px;width:1px;height:18.99px;background:#fbfbfb"></div>
<div class="a" style="left:3139.4px;top:395.35999999999996px;width:1px;height:18.99px;background:#fbfbfb"></div>
<svg class="a" style="left:2673px;top:398.85499999999996px;" width="17" height="12" viewBox="0 0 17 12"><path d="M5 1 H16 V11 H5 L1 6 Z" fill="#2a95d8" stroke="#0b5a9a"/><rect x="8" y="3" width="2" height="6" fill="#fff"/><rect x="11.5" y="3" width="2" height="6" fill="#fff"/></svg>
<div class="a" style="left:2694.5px;top:401.85499999999996px;width:5.5px;height:5.5px;background:#1a3ad0"></div>
<div class="t" style="left:2731.4px;top:397.09px;font-size:12.3px;line-height:16px;font-family:'Liberation Sans',sans-serif;color:#111">Line4_Flash_Green</div>
<div class="t" style="left:2864.3px;top:397.09px;font-size:12.3px;line-height:16px;font-family:'Liberation Sans',sans-serif;color:#111">Bool</div>
<div class="t" style="left:2984px;top:397.09px;font-size:12.3px;line-height:16px;font-family:'Liberation Sans',sans-serif;color:#111">0.2</div>
<div class="t" style="left:3043.9px;top:397.09px;font-size:12.3px;line-height:16px;font-family:'Liberation Sans',sans-serif;color:#8c8c8c">false</div>
<div class="a" style="left:3172px;top:397.85499999999996px;width:14px;height:14px;background:linear-gradient(#6ad0ff,#1a8ad8);border:1px solid #1a3a6a;border-radius:2px"></div>
<svg class="a" style="left:3172px;top:397.85499999999996px;" width="14" height="14" viewBox="0 0 14 14"><path d="M3 7 L6 10 L11 3" fill="none" stroke="#10205a" stroke-width="2"/></svg>
<div class="a" style="left:2670.5px;top:414.34999999999997px;width:523.5px;height:18.99px;background:#d5dae2;border-bottom:1px solid #fafafa"></div>
<div class="a" style="left:2979.4px;top:414.34999999999997px;width:60px;height:17.99px;background:#d8dce2"></div>
<div class="a" style="left:2645.5px;top:414.34999999999997px;width:25px;height:18.99px;background:#c9c9c9;border-bottom:1px solid #e6e6e6"></div>
<div class="t" style="left:2649px;top:416.08px;font-size:12.3px;line-height:16px;font-family:'Liberation Sans',sans-serif;color:#5a5a5a">11</div>
<div class="a" style="left:2689.5px;top:414.34999999999997px;width:1px;height:18.99px;background:#fbfbfb"></div>
<div class="a" style="left:2859.8px;top:414.34999999999997px;width:1px;height:18.99px;background:#fbfbfb"></div>
<div class="a" style="left:2979.4px;top:414.34999999999997px;width:1px;height:18.99px;background:#fbfbfb"></div>
<div class="a" style="left:3039.4px;top:414.34999999999997px;width:1px;height:18.99px;background:#fbfbfb"></div>
<div class="a" style="left:3139.4px;top:414.34999999999997px;width:1px;height:18.99px;background:#fbfbfb"></div>
<svg class="a" style="left:2673px;top:417.84499999999997px;" width="17" height="12" viewBox="0 0 17 12"><path d="M5 1 H16 V11 H5 L1 6 Z" fill="#2a95d8" stroke="#0b5a9a"/><rect x="8" y="3" width="2" height="6" fill="#fff"/><rect x="11.5" y="3" width="2" height="6" fill="#fff"/></svg>
<div class="a" style="left:2694.5px;top:420.84499999999997px;width:5.5px;height:5.5px;background:#1a3ad0"></div>
<div class="t" style="left:2731.4px;top:416.08px;font-size:12.3px;line-height:16px;font-family:'Liberation Sans',sans-serif;color:#111">Line4_Green</div>
<div class="t" style="left:2864.3px;top:416.08px;font-size:12.3px;line-height:16px;font-family:'Liberation Sans',sans-serif;color:#111">Bool</div>
<div class="t" style="left:2984px;top:416.08px;font-size:12.3px;line-height:16px;font-family:'Liberation Sans',sans-serif;color:#111">0.3</div>
<div class="t" style="left:3043.9px;top:416.08px;font-size:12.3px;line-height:16px;font-family:'Liberation Sans',sans-serif;color:#8c8c8c">false</div>
<div class="a" style="left:3172px;top:416.84499999999997px;width:14px;height:14px;background:linear-gradient(#6ad0ff,#1a8ad8);border:1px solid #1a3a6a;border-radius:2px"></div>
<svg class="a" style="left:3172px;top:416.84499999999997px;" width="14" height="14" viewBox="0 0 14 14"><path d="M3 7 L6 10 L11 3" fill="none" stroke="#10205a" stroke-width="2"/></svg>
<div class="a" style="left:2962px;top:415.84499999999997px;width:16px;height:16px;background:#f4f6ff;border:1px solid #555"></div>
<svg class="a" style="left:2965px;top:418.84499999999997px;" width="10" height="10" viewBox="0 0 10 10"><path d="M1 1.5 H9 M1 4 H9 M1 6.5 H9 M1 9 H9" stroke="#223"/></svg>
<div class="a" style="left:2670.5px;top:433.34px;width:523.5px;height:18.99px;background:#e0e0e0;border-bottom:1px solid #fafafa"></div>
<div class="a" style="left:2979.4px;top:433.34px;width:60px;height:17.99px;background:#e0e0e0"></div>
<div class="a" style="left:2645.5px;top:433.34px;width:25px;height:18.99px;background:#c9c9c9;border-bottom:1px solid #e6e6e6"></div>
<div class="t" style="left:2649px;top:435.07px;font-size:12.3px;line-height:16px;font-family:'Liberation Sans',sans-serif;color:#5a5a5a">12</div>
<div class="a" style="left:2689.5px;top:433.34px;width:1px;height:18.99px;background:#fbfbfb"></div>
<div class="a" style="left:2859.8px;top:433.34px;width:1px;height:18.99px;background:#fbfbfb"></div>
<div class="a" style="left:2979.4px;top:433.34px;width:1px;height:18.99px;background:#fbfbfb"></div>
<div class="a" style="left:3039.4px;top:433.34px;width:1px;height:18.99px;background:#fbfbfb"></div>
<div class="a" style="left:3139.4px;top:433.34px;width:1px;height:18.99px;background:#fbfbfb"></div>
<svg class="a" style="left:2673px;top:436.835px;" width="17" height="12" viewBox="0 0 17 12"><path d="M5 1 H16 V11 H5 L1 6 Z" fill="#2a95d8" stroke="#0b5a9a"/><rect x="8" y="3" width="2" height="6" fill="#fff"/><rect x="11.5" y="3" width="2" height="6" fill="#fff"/></svg>
<svg class="a" style="left:2694px;top:439.835px;" width="10" height="6" viewBox="0 0 10 6"><path d="M0 0 H10 L5 6 Z" fill="#000"/></svg>
<div class="t" style="left:2713px;top:435.07px;font-size:12.3px;line-height:16px;font-family:'Liberation Sans',sans-serif;color:#111">Temp</div>
<div class="a" style="left:3172px;top:435.835px;width:14px;height:14px;background:linear-gradient(#fafafa,#e6e6e6);border:1px solid #b0b0b0;border-radius:2px"></div>
<div class="a" style="left:2670.5px;top:452.3299999999999px;width:523.5px;height:18.99px;background:#efefef;border-bottom:1px solid #fafafa"></div>
<div class="a" style="left:2979.4px;top:452.3299999999999px;width:60px;height:17.99px;background:#e0e0e0"></div>
<div class="a" style="left:2645.5px;top:452.3299999999999px;width:25px;height:18.99px;background:#c9c9c9;border-bottom:1px solid #e6e6e6"></div>
<div class="t" style="left:2649px;top:454.06px;font-size:12.3px;line-height:16px;font-family:'Liberation Sans',sans-serif;color:#5a5a5a">13</div>
<div class="a" style="left:2689.5px;top:452.3299999999999px;width:1px;height:18.99px;background:#fbfbfb"></div>
<div class="a" style="left:2859.8px;top:452.3299999999999px;width:1px;height:18.99px;background:#fbfbfb"></div>
<div class="a" style="left:2979.4px;top:452.3299999999999px;width:1px;height:18.99px;background:#fbfbfb"></div>
<div class="a" style="left:3039.4px;top:452.3299999999999px;width:1px;height:18.99px;background:#fbfbfb"></div>
<div class="a" style="left:3139.4px;top:452.3299999999999px;width:1px;height:18.99px;background:#fbfbfb"></div>
<div class="a" style="left:2694.5px;top:458.82499999999993px;width:5.5px;height:5.5px;background:#1a3ad0"></div>
<div class="t" style="left:2731.4px;top:454.06px;font-size:12.3px;line-height:16px;font-family:'Liberation Sans',sans-serif;color:#8a8a8a">&lt;Add new&gt;</div>
<div class="a" style="left:3172px;top:454.82499999999993px;width:14px;height:14px;background:linear-gradient(#fafafa,#e6e6e6);border:1px solid #b0b0b0;border-radius:2px"></div>
<div class="a" style="left:2645.5px;top:470px;width:548.5px;height:7px;background:#dcdcdc;border-bottom:1px solid #aaa"></div>
<div class="a" style="left:2645.5px;top:477px;width:548.5px;height:22.4px;background:#fff"></div>
<div class="t" style="left:2652.5px;top:479.24px;font-size:12.3px;line-height:16px;font-family:'Liberation Sans',sans-serif;color:#111">No condition defined.</div>
<div class="a" style="left:2645.5px;top:499.4px;width:548.5px;height:35.1px;background:#e8e8e8"></div>
<div class="a" style="left:2648px;top:500.5px;width:32px;height:33px;background:#fff"></div>
<svg class="a" style="left:2653px;top:512px;" width="22" height="10" viewBox="0 0 22 10"><path d="M0 5 H8 M8 0 V10 M14 0 V10 M14 5 H22" stroke="#111" stroke-width="2"/></svg>
<div class="a" style="left:2682px;top:500.5px;width:32px;height:33px;background:#fff"></div>
<svg class="a" style="left:2687px;top:512px;" width="22" height="10" viewBox="0 0 22 10"><path d="M0 5 H8 M8 0 V10 M14 0 V10 M14 5 H22 M12.5 1 L9.5 9" stroke="#111" stroke-width="2"/></svg>
<div class="a" style="left:2716px;top:500.5px;width:32px;height:33px;background:#fff"></div>
<svg class="a" style="left:2720px;top:512px;" width="26" height="10" viewBox="0 0 26 10"><path d="M0 5 H9 M17 5 H26" stroke="#111" stroke-width="2"/><path d="M11 0 C9 3 9 7 11 10 M15 0 C17 3 17 7 15 10" fill="none" stroke="#111" stroke-width="1.8"/></svg>
<div class="a" style="left:2750px;top:500.5px;width:32px;height:33px;background:#fff"></div>
<svg class="a" style="left:2758px;top:509px;" width="18" height="17" viewBox="0 0 18 17"><rect x="1" y="2" width="14" height="14" fill="none" stroke="#111" stroke-width="1.5"/><text x="3" y="12" font-size="9" fill="#111">??</text></svg>
<div class="a" style="left:2784px;top:500.5px;width:32px;height:33px;background:#fff"></div>
<svg class="a" style="left:2790px;top:512px;" width="18" height="10" viewBox="0 0 18 10"><path d="M0 2 V6 H15 M11 2 L15 6 L11 10" fill="none" stroke="#111" stroke-width="2"/></svg>
<div class="a" style="left:2818px;top:500.5px;width:32px;height:33px;background:#fff"></div>
<svg class="a" style="left:2824px;top:507px;" width="18" height="14" viewBox="0 0 18 14"><path d="M0 11 H11 V3 M7 6 L11 1 L15 6" fill="none" stroke="#111" stroke-width="2"/></svg>
<div class="a" style="left:2645.5px;top:534.5px;width:548.5px;height:2.5px;background:#f6f6f6"></div>
<div class="a" style="left:2645.5px;top:537px;width:548.5px;height:20.6px;background:#d9d9d9"></div>
<svg class="a" style="left:2651px;top:544px;" width="10" height="6" viewBox="0 0 10 6"><path d="M0 0 H10 L5 6 Z" fill="#000"/></svg>
<div class="t" style="left:2685.3px;top:539.32px;font-size:13.5px;line-height:18px;font-family:'Liberation Sans',sans-serif;color:#111;font-weight:bold">Network 1:</div>
<div class="t" style="left:2768px;top:540.31px;font-size:12.1px;line-height:16px;font-family:'Liberation Sans',sans-serif;color:#111">Line 4 Stacklight Control</div>
<div class="a" style="left:2645.5px;top:557.6px;width:548.5px;height:28px;background:#fff"></div>
<div class="a" style="left:2680px;top:563px;width:514px;height:22.4px;border-left:1px solid #e6e6e6;border-top:1px solid #e6e6e6"></div>
<div class="t" style="left:2683px;top:564.65px;font-size:11.1px;line-height:14px;font-family:'Liberation Sans',sans-serif;color:#9a9a9a">Comment</div>
<div class="a" style="left:2666px;top:585.4px;width:528px;height:1px;background:#c9cde0"></div>
<div class="a" style="left:2645.5px;top:586px;width:548.5px;height:675px;background:#fff"></div>
<div class="a" style="left:2671.7px;top:595px;width:2.2px;height:665px;background:#00e600"></div>
<div class="a" style="left:2672px;top:699px;width:128px;height:2.2px;background:#00e600"></div>
<div class="a" style="left:2994px;top:699px;width:200px;height:2.2px;background:#00e600"></div>
<div class="a" style="left:2800.4px;top:654px;width:194px;height:567px;background:#e0e0e6;border:2.2px solid #00e600"></div>
<div class="a" style="left:2802.6px;top:656.2px;width:189.6px;height:32px;background:#c8c9d6"></div>
<div class="t" style="left:1897px;width:2000px;text-align:center;top:619.11px;font-size:11.8px;line-height:15px;font-family:'Liberation Sans',sans-serif;color:#11a3b0;font-weight:bold">%DB2</div>
<div class="t" style="left:1897px;width:2000px;text-align:center;top:633.81px;font-size:12.1px;line-height:16px;font-family:'Liberation Sans',sans-serif;color:#111">"Line4_PLC_DB"</div>
<div class="t" style="left:1897px;width:2000px;text-align:center;top:653.81px;font-size:11.8px;line-height:15px;font-family:'Liberation Sans',sans-serif;color:#11a3b0;font-weight:bold">%FB2</div>
<div class="t" style="left:1897px;width:2000px;text-align:center;top:669.41px;font-size:12.1px;line-height:16px;font-family:'Liberation Sans',sans-serif;color:#111">"Line4_PLC"</div>
<div class="t" style="left:2804px;top:693.81px;font-size:11.8px;line-height:15px;font-family:'Liberation Sans',sans-serif;color:#111">EN</div>
<div class="t" style="left:989.5px;width:2000px;text-align:right;top:693.81px;font-size:11.8px;line-height:15px;font-family:'Liberation Sans',sans-serif;color:#111">ENO</div>
<div class="a" style="left:2749.3px;top:728.4px;width:33px;height:13.3px;background:#cfcfcf"></div>
<div class="t" style="left:780.3000000000002px;width:2000px;text-align:right;top:727.98px;font-size:11.3px;line-height:15px;font-family:'Liberation Sans',sans-serif;color:#111">TRUE</div>
<div class="t" style="left:781.8000000000002px;width:2000px;text-align:right;top:741.21px;font-size:11.8px;line-height:15px;font-family:'Liberation Sans',sans-serif;color:#11a3b0;font-weight:bold">%DB1.DBX0.0</div>
<div class="t" style="left:781.8000000000002px;width:2000px;text-align:right;top:755.84px;font-size:12px;line-height:16px;font-family:'Liberation Sans',sans-serif;color:#111">"From_Line4_</div>
<div class="t" style="left:781.8000000000002px;width:2000px;text-align:right;top:769.99px;font-size:12px;line-height:16px;font-family:'Liberation Sans',sans-serif;color:#111">PLC".Conveyor_</div>
<div class="t" style="left:781.8000000000002px;width:2000px;text-align:right;top:784.14px;font-size:12px;line-height:16px;font-family:'Liberation Sans',sans-serif;color:#111">RTS</div>
<div class="a" style="left:2785px;top:794px;width:15.5px;height:2.2px;background:#00e600"></div>
<div class="t" style="left:2804px;top:788.31px;font-size:11.8px;line-height:15px;font-family:'Liberation Sans',sans-serif;color:#111">Conveyor_RTS</div>
<div class="a" style="left:2749.3px;top:819.5px;width:33px;height:13.3px;background:#cfcfcf"></div>
<div class="t" style="left:780.3000000000002px;width:2000px;text-align:right;top:819.08px;font-size:11.3px;line-height:15px;font-family:'Liberation Sans',sans-serif;color:#111">TRUE</div>
<div class="t" style="left:781.8000000000002px;width:2000px;text-align:right;top:832.61px;font-size:11.8px;line-height:15px;font-family:'Liberation Sans',sans-serif;color:#11a3b0;font-weight:bold">%DB1.DBX0.1</div>
<div class="t" style="left:781.8000000000002px;width:2000px;text-align:right;top:847.24px;font-size:12px;line-height:16px;font-family:'Liberation Sans',sans-serif;color:#111">"From_Line4_</div>
<div class="t" style="left:781.8000000000002px;width:2000px;text-align:right;top:861.39px;font-size:12px;line-height:16px;font-family:'Liberation Sans',sans-serif;color:#111">PLC".Robot_RTS</div>
<div class="a" style="left:2785px;top:869.9px;width:15.5px;height:2.2px;background:#00e600"></div>
<div class="t" style="left:2804px;top:864.11px;font-size:11.8px;line-height:15px;font-family:'Liberation Sans',sans-serif;color:#111">Robot_RTS</div>
<div class="a" style="left:2752.3px;top:899.2px;width:30px;height:13.3px;background:#cfcfcf"></div>
<div class="t" style="left:780.3000000000002px;width:2000px;text-align:right;top:898.78px;font-size:11.3px;line-height:15px;font-family:'Liberation Sans',sans-serif;color:#111">15.5</div>
<div class="t" style="left:781.8000000000002px;width:2000px;text-align:right;top:912.61px;font-size:11.8px;line-height:15px;font-family:'Liberation Sans',sans-serif;color:#11a3b0;font-weight:bold">%DB1.DBD2</div>
<div class="t" style="left:781.8000000000002px;width:2000px;text-align:right;top:927.24px;font-size:12px;line-height:16px;font-family:'Liberation Sans',sans-serif;color:#111">"From_Line4_</div>
<div class="t" style="left:781.8000000000002px;width:2000px;text-align:right;top:941.39px;font-size:12px;line-height:16px;font-family:'Liberation Sans',sans-serif;color:#111">PLC".Robot_</div>
<div class="t" style="left:781.8000000000002px;width:2000px;text-align:right;top:955.54px;font-size:12px;line-height:16px;font-family:'Liberation Sans',sans-serif;color:#111">Position</div>
<div class="a" style="left:2785px;top:964.6px;width:15.5px;height:2px;background:#111"></div>
<div class="t" style="left:2804px;top:958.61px;font-size:11.8px;line-height:15px;font-family:'Liberation Sans',sans-serif;color:#111">Robot_Position</div>
<div class="a" style="left:2749.3px;top:994.3px;width:33px;height:13.3px;background:#cfcfcf"></div>
<div class="t" style="left:780.3000000000002px;width:2000px;text-align:right;top:993.88px;font-size:11.3px;line-height:15px;font-family:'Liberation Sans',sans-serif;color:#111">TRUE</div>
<div class="t" style="left:781.8000000000002px;width:2000px;text-align:right;top:1006.81px;font-size:11.8px;line-height:15px;font-family:'Liberation Sans',sans-serif;color:#11a3b0;font-weight:bold">%DB1.DBX6.0</div>
<div class="t" style="left:781.8000000000002px;width:2000px;text-align:right;top:1021.44px;font-size:12px;line-height:16px;font-family:'Liberation Sans',sans-serif;color:#111">"From_Line4_</div>
<div class="t" style="left:781.8000000000002px;width:2000px;text-align:right;top:1035.59px;font-size:12px;line-height:16px;font-family:'Liberation Sans',sans-serif;color:#111">PLC".Conveyor_</div>
<div class="t" style="left:781.8000000000002px;width:2000px;text-align:right;top:1049.74px;font-size:12px;line-height:16px;font-family:'Liberation Sans',sans-serif;color:#111">Running</div>
<div class="a" style="left:2785px;top:1059.9px;width:15.5px;height:2.2px;background:#00e600"></div>
<div class="t" style="left:2804px;top:1039.41px;font-size:11.8px;line-height:15px;font-family:'Liberation Sans',sans-serif;color:#111">Conveyor_</div>
<div class="t" style="left:2804px;top:1053.51px;font-size:11.8px;line-height:15px;font-family:'Liberation Sans',sans-serif;color:#111">Running</div>
<div class="a" style="left:2770.3px;top:1085.3px;width:12px;height:13.3px;background:#cfcfcf"></div>
<div class="t" style="left:780.3000000000002px;width:2000px;text-align:right;top:1084.88px;font-size:11.3px;line-height:15px;font-family:'Liberation Sans',sans-serif;color:#111">4</div>
<div class="t" style="left:781.8000000000002px;width:2000px;text-align:right;top:1097.81px;font-size:11.8px;line-height:15px;font-family:'Liberation Sans',sans-serif;color:#11a3b0;font-weight:bold">%DB1.DBD8</div>
<div class="t" style="left:781.8000000000002px;width:2000px;text-align:right;top:1112.44px;font-size:12px;line-height:16px;font-family:'Liberation Sans',sans-serif;color:#111">"From_Line4_</div>
<div class="t" style="left:781.8000000000002px;width:2000px;text-align:right;top:1126.59px;font-size:12px;line-height:16px;font-family:'Liberation Sans',sans-serif;color:#111">PLC".Line4_State</div>
<div class="a" style="left:2785px;top:1135.7px;width:15.5px;height:2px;background:#111"></div>
<div class="t" style="left:2804px;top:1129.71px;font-size:11.8px;line-height:15px;font-family:'Liberation Sans',sans-serif;color:#111">Line4_State</div>
<div class="a" style="left:2743.3px;top:1161.5px;width:39px;height:13.3px;background:#cfcfcf"></div>
<div class="t" style="left:780.3000000000002px;width:2000px;text-align:right;top:1161.08px;font-size:11.3px;line-height:15px;font-family:'Liberation Sans',sans-serif;color:#111">FALSE</div>
<div class="t" style="left:781.8000000000002px;width:2000px;text-align:right;top:1174.01px;font-size:11.8px;line-height:15px;font-family:'Liberation Sans',sans-serif;color:#11a3b0;font-weight:bold">%DB1.DBX12.0</div>
<div class="t" style="left:781.8000000000002px;width:2000px;text-align:right;top:1188.64px;font-size:12px;line-height:16px;font-family:'Liberation Sans',sans-serif;color:#111">"From_Line4_</div>
<div class="t" style="left:781.8000000000002px;width:2000px;text-align:right;top:1202.79px;font-size:12px;line-height:16px;font-family:'Liberation Sans',sans-serif;color:#111">PLC".Line4_Fault</div>
<div class="a" style="left:2785px;top:1211.8px;width:15.5px;height:2px;background:repeating-linear-gradient(90deg,#1a1ae0 0 4px,transparent 4px 6px)"></div>
<div class="t" style="left:2804px;top:1205.81px;font-size:11.8px;line-height:15px;font-family:'Liberation Sans',sans-serif;color:#111">Line4_Fault</div>
<div class="t" style="left:990.1999999999998px;width:2000px;text-align:right;top:730.81px;font-size:11.8px;line-height:15px;font-family:'Liberation Sans',sans-serif;color:#111">Red_Light</div>
<div class="a" style="left:2994px;top:736.6px;width:15px;height:2px;background:repeating-linear-gradient(90deg,#1a1ae0 0 4px,transparent 4px 6px)"></div>
<div class="a" style="left:3008px;top:732.6px;width:2px;height:10px;background:#1a1ae0"></div>
<div class="a" style="left:3012px;top:716.2px;width:40px;height:13.4px;background:#cfcfcf"></div>
<div class="t" style="left:3013.5px;top:715.78px;font-size:11.3px;line-height:15px;font-family:'Liberation Sans',sans-serif;color:#111">FALSE</div>
<div class="t" style="left:3012px;top:728.47px;font-size:12.2px;line-height:16px;font-family:'Liberation Sans',sans-serif;color:#111">#Line4_Red</div>
<div class="t" style="left:990.1999999999998px;width:2000px;text-align:right;top:768.91px;font-size:11.8px;line-height:15px;font-family:'Liberation Sans',sans-serif;color:#111">Yellow_Light</div>
<div class="a" style="left:2994px;top:774.9px;width:15px;height:2.2px;background:#00e600"></div>
<div class="a" style="left:3008px;top:770.9px;width:2px;height:10px;background:#00e600"></div>
<div class="a" style="left:3012px;top:754px;width:33px;height:13.4px;background:#cfcfcf"></div>
<div class="t" style="left:3013.5px;top:753.58px;font-size:11.3px;line-height:15px;font-family:'Liberation Sans',sans-serif;color:#111">TRUE</div>
<div class="t" style="left:3012px;top:766.57px;font-size:12.2px;line-height:16px;font-family:'Liberation Sans',sans-serif;color:#111">#Line4_Yellow</div>
<div class="t" style="left:990.1999999999998px;width:2000px;text-align:right;top:826.11px;font-size:11.8px;line-height:15px;font-family:'Liberation Sans',sans-serif;color:#111">Green_Light</div>
<div class="a" style="left:2994px;top:831.8px;width:15px;height:2px;background:repeating-linear-gradient(90deg,#1a1ae0 0 4px,transparent 4px 6px)"></div>
<div class="a" style="left:3008px;top:827.8px;width:2px;height:10px;background:#1a1ae0"></div>
<div class="a" style="left:3012px;top:796.5px;width:40px;height:13.4px;background:#cfcfcf"></div>
<div class="t" style="left:3013.5px;top:796.08px;font-size:11.3px;line-height:15px;font-family:'Liberation Sans',sans-serif;color:#111">FALSE</div>
<div class="t" style="left:3012px;top:808.47px;font-size:12.2px;line-height:16px;font-family:'Liberation Sans',sans-serif;color:#111">#Line4_Flash_</div>
<div class="t" style="left:3012px;top:822.27px;font-size:12.2px;line-height:16px;font-family:'Liberation Sans',sans-serif;color:#111">Green</div>
<div class="t" style="left:990.1999999999998px;width:2000px;text-align:right;top:862.91px;font-size:11.8px;line-height:15px;font-family:'Liberation Sans',sans-serif;color:#111">Green_Light</div>
<div class="t" style="left:990.1999999999998px;width:2000px;text-align:right;top:849.61px;font-size:11.8px;line-height:15px;font-family:'Liberation Sans',sans-serif;color:#111">Flashing_</div>
<div class="a" style="left:2994px;top:869.9px;width:15px;height:2px;background:repeating-linear-gradient(90deg,#1a1ae0 0 4px,transparent 4px 6px)"></div>
<div class="a" style="left:3008px;top:865.9px;width:2px;height:10px;background:#1a1ae0"></div>
<div class="a" style="left:3012px;top:849px;width:40px;height:13.4px;background:#cfcfcf"></div>
<div class="t" style="left:3013.5px;top:848.58px;font-size:11.3px;line-height:15px;font-family:'Liberation Sans',sans-serif;color:#111">FALSE</div>
<div class="t" style="left:3012px;top:861.57px;font-size:12.2px;line-height:16px;font-family:'Liberation Sans',sans-serif;color:#111">#Line4_Green</div>
<div class="a" style="left:2645.5px;top:1261px;width:548.5px;height:17px;background:#ebebeb"></div>
<div class="a" style="left:2645.5px;top:1278px;width:548.5px;height:3px;background:#262626"></div>
<div class="a" style="left:2645.5px;top:1281px;width:548.5px;height:25px;background:#b4b4b4"></div>
<div class="a" style="left:2645.5px;top:1306px;width:548.5px;height:3px;background:#f7a11a"></div>
<div class="a" style="left:2645.5px;top:1309px;width:548.5px;height:21px;background:#cdcdcd"></div>
<div class="a" style="left:2652px;top:1312px;width:84px;height:18px;background:linear-gradient(#fdfdfd,#f0f0f0);border:1px solid #9a9a9a;border-bottom:none"></div>
<div class="t" style="left:2663.5px;top:1313.06px;font-size:12.8px;line-height:17px;font-family:'Liberation Sans',sans-serif;color:#111;font-weight:bold">General</div>
<div class="a" style="left:2738px;top:1312px;width:143.5999999999999px;height:18px;background:linear-gradient(#f2f2f2,#dedede);border:1px solid #9a9a9a;border-bottom:none"></div>
<div class="t" style="left:2749.5px;top:1313.06px;font-size:12.8px;line-height:17px;font-family:'Liberation Sans',sans-serif;color:#555;">Cross-references</div>
<div class="a" style="left:2883px;top:1312px;width:86px;height:18px;background:linear-gradient(#f2f2f2,#dedede);border:1px solid #9a9a9a;border-bottom:none"></div>
<div class="t" style="left:2894.5px;top:1313.06px;font-size:12.8px;line-height:17px;font-family:'Liberation Sans',sans-serif;color:#555;">Compile</div>
<div class="a" style="left:2971px;top:1312px;width:78px;height:18px;background:linear-gradient(#f2f2f2,#dedede);border:1px solid #9a9a9a;border-bottom:none"></div>
<div class="t" style="left:2982.5px;top:1313.06px;font-size:12.8px;line-height:17px;font-family:'Liberation Sans',sans-serif;color:#555;">Syntax</div>
<div class="a" style="left:2642.3px;top:200.4px;width:3.2px;height:1129.6px;background:#2b2b2b"></div>
</body></html>
